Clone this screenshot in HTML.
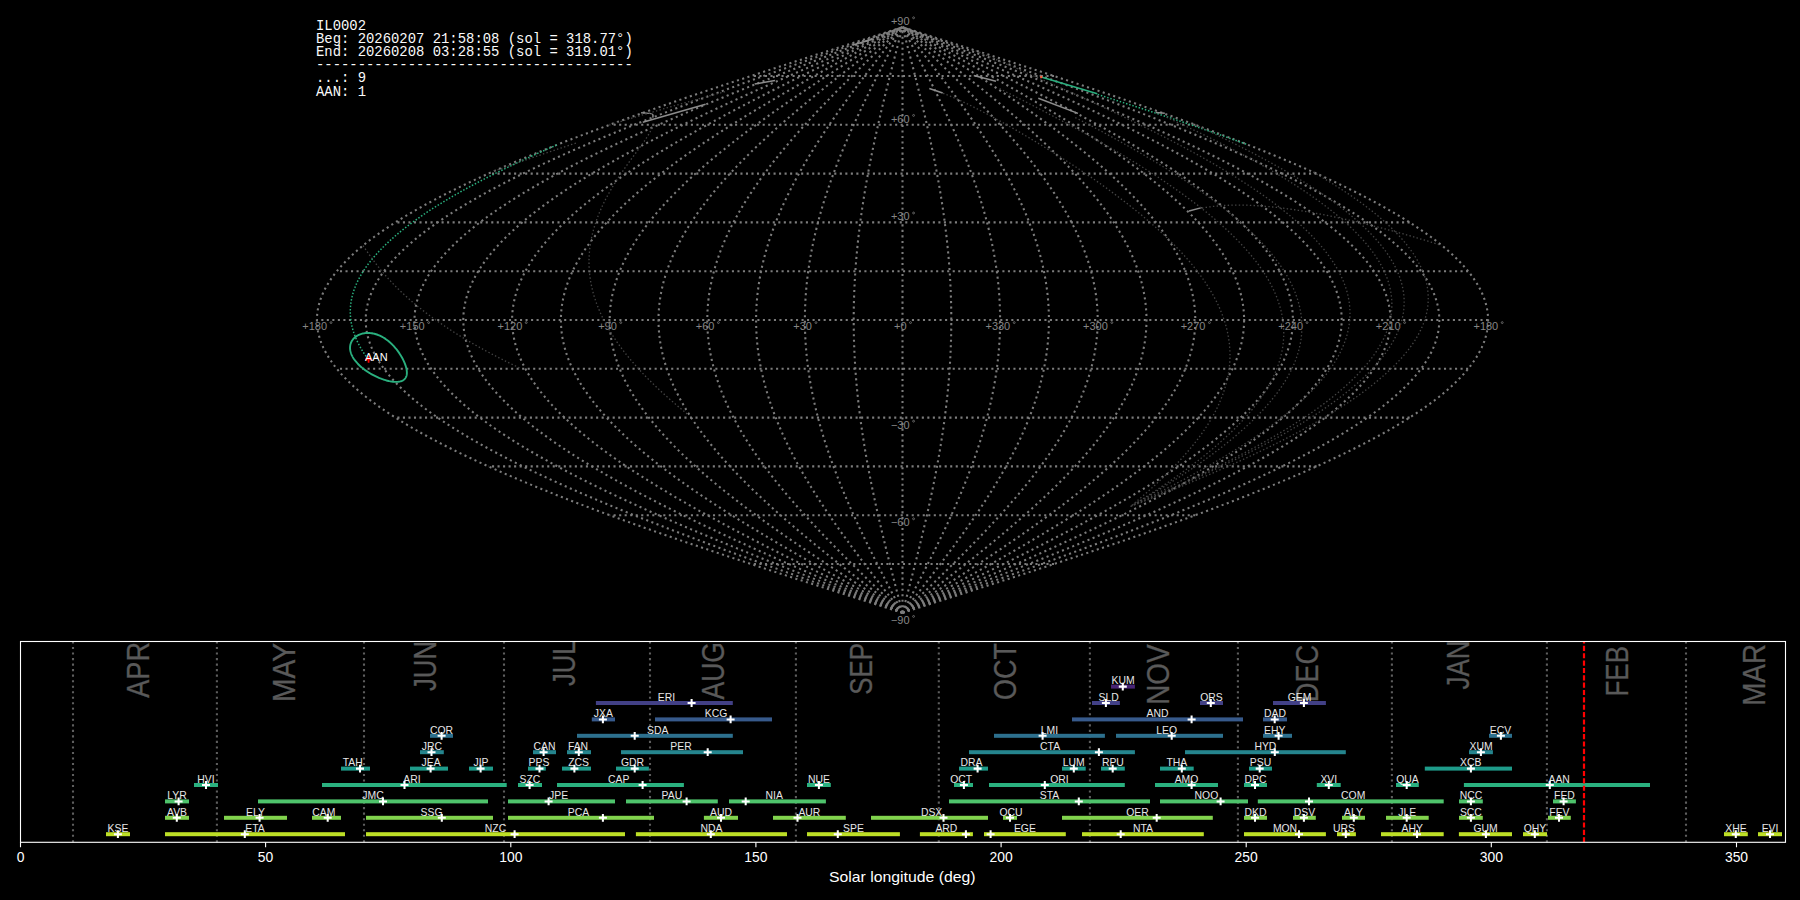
<!DOCTYPE html><html><head><meta charset="utf-8"><style>html,body{margin:0;padding:0;background:#000;width:1800px;height:900px;overflow:hidden}svg{display:block}text{font-family:"Liberation Sans",sans-serif}text.mono{font-family:"Liberation Mono",monospace}</style></head><body>
<svg width="1800" height="900" viewBox="0 0 1800 900">
<rect width="1800" height="900" fill="#000"/>
<g fill="none" stroke="#7c7c7c" stroke-width="2.08" stroke-dasharray="2.08 3.44"><path d="M902.50,612.80 L907.61,611.17 L912.72,609.54 L917.83,607.92 L922.94,606.29 L928.04,604.66 L933.15,603.04 L938.25,601.41 L943.35,599.78 L948.45,598.16 L953.54,596.53 L958.63,594.90 L963.71,593.28 L968.79,591.65 L973.87,590.02 L978.94,588.40 L984.00,586.77 L989.06,585.14 L994.11,583.52 L999.15,581.89 L1004.19,580.26 L1009.22,578.64 L1014.24,577.01 L1019.25,575.38 L1024.25,573.76 L1029.25,572.13 L1034.23,570.50 L1039.20,568.88 L1044.17,567.25 L1049.12,565.62 L1054.06,564.00 L1058.99,562.37 L1063.91,560.74 L1068.82,559.12 L1073.71,557.49 L1078.59,555.86 L1083.46,554.24 L1088.31,552.61 L1093.15,550.98 L1097.97,549.36 L1102.78,547.73 L1107.58,546.10 L1112.36,544.48 L1117.12,542.85 L1121.87,541.22 L1126.60,539.60 L1131.31,537.97 L1136.00,536.34 L1140.68,534.72 L1145.34,533.09 L1149.98,531.46 L1154.60,529.84 L1159.21,528.21 L1163.79,526.58 L1168.35,524.96 L1172.90,523.33 L1177.42,521.70 L1181.92,520.08 L1186.40,518.45 L1190.86,516.82 L1195.30,515.20 L1199.71,513.57 L1204.10,511.94 L1208.47,510.32 L1212.82,508.69 L1217.14,507.06 L1221.44,505.44 L1225.71,503.81 L1229.96,502.18 L1234.18,500.56 L1238.38,498.93 L1242.56,497.30 L1246.70,495.68 L1250.82,494.05 L1254.92,492.42 L1258.99,490.80 L1263.03,489.17 L1267.04,487.54 L1271.03,485.92 L1274.98,484.29 L1278.91,482.66 L1282.81,481.04 L1286.68,479.41 L1290.53,477.78 L1294.34,476.16 L1298.12,474.53 L1301.87,472.90 L1305.60,471.28 L1309.29,469.65 L1312.95,468.02 L1316.58,466.40 L1320.17,464.77 L1323.74,463.14 L1327.27,461.52 L1330.78,459.89 L1334.24,458.26 L1337.68,456.64 L1341.08,455.01 L1344.45,453.39 L1347.79,451.76 L1351.09,450.13 L1354.36,448.51 L1357.59,446.88 L1360.79,445.25 L1363.95,443.63 L1367.08,442.00 L1370.18,440.37 L1373.23,438.75 L1376.25,437.12 L1379.24,435.49 L1382.19,433.87 L1385.10,432.24 L1387.98,430.61 L1390.82,428.99 L1393.62,427.36 L1396.38,425.73 L1399.11,424.11 L1401.80,422.48 L1404.45,420.85 L1407.06,419.23 L1409.64,417.60 L1412.17,415.97 L1414.67,414.35 L1417.13,412.72 L1419.55,411.09 L1421.93,409.47 L1424.27,407.84 L1426.57,406.21 L1428.83,404.59 L1431.05,402.96 L1433.23,401.33 L1435.37,399.71 L1437.47,398.08 L1439.52,396.45 L1441.54,394.83 L1443.52,393.20 L1445.45,391.57 L1447.35,389.95 L1449.20,388.32 L1451.01,386.69 L1452.78,385.07 L1454.50,383.44 L1456.19,381.81 L1457.83,380.19 L1459.43,378.56 L1460.99,376.93 L1462.51,375.31 L1463.98,373.68 L1465.41,372.05 L1466.80,370.43 L1468.14,368.80 L1469.44,367.17 L1470.70,365.55 L1471.91,363.92 L1473.08,362.29 L1474.21,360.67 L1475.30,359.04 L1476.34,357.41 L1477.33,355.79 L1478.29,354.16 L1479.20,352.53 L1480.06,350.91 L1480.88,349.28 L1481.66,347.65 L1482.39,346.03 L1483.08,344.40 L1483.73,342.77 L1484.33,341.15 L1484.88,339.52 L1485.40,337.89 L1485.86,336.27 L1486.29,334.64 L1486.67,333.01 L1487.00,331.39 L1487.29,329.76 L1487.54,328.13 L1487.74,326.51 L1487.89,324.88 L1488.00,323.25 L1488.07,321.63 L1488.09,320.00 L1488.07,318.37 L1488.00,316.75 L1487.89,315.12 L1487.74,313.49 L1487.54,311.87 L1487.29,310.24 L1487.00,308.61 L1486.67,306.99 L1486.29,305.36 L1485.86,303.73 L1485.40,302.11 L1484.88,300.48 L1484.33,298.85 L1483.73,297.23 L1483.08,295.60 L1482.39,293.97 L1481.66,292.35 L1480.88,290.72 L1480.06,289.09 L1479.20,287.47 L1478.29,285.84 L1477.33,284.21 L1476.34,282.59 L1475.30,280.96 L1474.21,279.33 L1473.08,277.71 L1471.91,276.08 L1470.70,274.45 L1469.44,272.83 L1468.14,271.20 L1466.80,269.57 L1465.41,267.95 L1463.98,266.32 L1462.51,264.69 L1460.99,263.07 L1459.43,261.44 L1457.83,259.81 L1456.19,258.19 L1454.50,256.56 L1452.78,254.93 L1451.01,253.31 L1449.20,251.68 L1447.35,250.05 L1445.45,248.43 L1443.52,246.80 L1441.54,245.17 L1439.52,243.55 L1437.47,241.92 L1435.37,240.29 L1433.23,238.67 L1431.05,237.04 L1428.83,235.41 L1426.57,233.79 L1424.27,232.16 L1421.93,230.53 L1419.55,228.91 L1417.13,227.28 L1414.67,225.65 L1412.17,224.03 L1409.64,222.40 L1407.06,220.77 L1404.45,219.15 L1401.80,217.52 L1399.11,215.89 L1396.38,214.27 L1393.62,212.64 L1390.82,211.01 L1387.98,209.39 L1385.10,207.76 L1382.19,206.13 L1379.24,204.51 L1376.25,202.88 L1373.23,201.25 L1370.18,199.63 L1367.08,198.00 L1363.95,196.37 L1360.79,194.75 L1357.59,193.12 L1354.36,191.49 L1351.09,189.87 L1347.79,188.24 L1344.45,186.61 L1341.08,184.99 L1337.68,183.36 L1334.24,181.74 L1330.78,180.11 L1327.27,178.48 L1323.74,176.86 L1320.17,175.23 L1316.58,173.60 L1312.95,171.98 L1309.29,170.35 L1305.60,168.72 L1301.87,167.10 L1298.12,165.47 L1294.34,163.84 L1290.53,162.22 L1286.68,160.59 L1282.81,158.96 L1278.91,157.34 L1274.98,155.71 L1271.03,154.08 L1267.04,152.46 L1263.03,150.83 L1258.99,149.20 L1254.92,147.58 L1250.82,145.95 L1246.70,144.32 L1242.56,142.70 L1238.38,141.07 L1234.18,139.44 L1229.96,137.82 L1225.71,136.19 L1221.44,134.56 L1217.14,132.94 L1212.82,131.31 L1208.47,129.68 L1204.10,128.06 L1199.71,126.43 L1195.30,124.80 L1190.86,123.18 L1186.40,121.55 L1181.92,119.92 L1177.42,118.30 L1172.90,116.67 L1168.35,115.04 L1163.79,113.42 L1159.21,111.79 L1154.60,110.16 L1149.98,108.54 L1145.34,106.91 L1140.68,105.28 L1136.00,103.66 L1131.31,102.03 L1126.60,100.40 L1121.87,98.78 L1117.12,97.15 L1112.36,95.52 L1107.58,93.90 L1102.78,92.27 L1097.97,90.64 L1093.15,89.02 L1088.31,87.39 L1083.46,85.76 L1078.59,84.14 L1073.71,82.51 L1068.82,80.88 L1063.91,79.26 L1058.99,77.63 L1054.06,76.00 L1049.12,74.38 L1044.17,72.75 L1039.20,71.12 L1034.23,69.50 L1029.25,67.87 L1024.25,66.24 L1019.25,64.62 L1014.24,62.99 L1009.22,61.36 L1004.19,59.74 L999.15,58.11 L994.11,56.48 L989.06,54.86 L984.00,53.23 L978.94,51.60 L973.87,49.98 L968.79,48.35 L963.71,46.72 L958.63,45.10 L953.54,43.47 L948.45,41.84 L943.35,40.22 L938.25,38.59 L933.15,36.96 L928.04,35.34 L922.94,33.71 L917.83,32.08 L912.72,30.46 L907.61,28.83 L902.50,27.20"/><path d="M902.50,612.80 L907.18,611.17 L911.87,609.54 L916.55,607.92 L921.23,606.29 L925.91,604.66 L930.59,603.04 L935.27,601.41 L939.94,599.78 L944.62,598.16 L949.28,596.53 L953.95,594.90 L958.61,593.28 L963.27,591.65 L967.92,590.02 L972.57,588.40 L977.21,586.77 L981.84,585.14 L986.47,583.52 L991.10,581.89 L995.71,580.26 L1000.32,578.64 L1004.93,577.01 L1009.52,575.38 L1014.11,573.76 L1018.68,572.13 L1023.25,570.50 L1027.81,568.88 L1032.36,567.25 L1036.90,565.62 L1041.43,564.00 L1045.95,562.37 L1050.46,560.74 L1054.96,559.12 L1059.44,557.49 L1063.92,555.86 L1068.38,554.24 L1072.83,552.61 L1077.26,550.98 L1081.69,549.36 L1086.09,547.73 L1090.49,546.10 L1094.87,544.48 L1099.24,542.85 L1103.59,541.22 L1107.92,539.60 L1112.24,537.97 L1116.55,536.34 L1120.83,534.72 L1125.10,533.09 L1129.36,531.46 L1133.60,529.84 L1137.81,528.21 L1142.02,526.58 L1146.20,524.96 L1150.36,523.33 L1154.51,521.70 L1158.64,520.08 L1162.74,518.45 L1166.83,516.82 L1170.90,515.20 L1174.94,513.57 L1178.97,511.94 L1182.97,510.32 L1186.96,508.69 L1190.92,507.06 L1194.86,505.44 L1198.78,503.81 L1202.67,502.18 L1206.54,500.56 L1210.39,498.93 L1214.22,497.30 L1218.02,495.68 L1221.80,494.05 L1225.55,492.42 L1229.28,490.80 L1232.98,489.17 L1236.66,487.54 L1240.32,485.92 L1243.94,484.29 L1247.54,482.66 L1251.12,481.04 L1254.67,479.41 L1258.19,477.78 L1261.68,476.16 L1265.15,474.53 L1268.59,472.90 L1272.00,471.28 L1275.39,469.65 L1278.74,468.02 L1282.07,466.40 L1285.37,464.77 L1288.64,463.14 L1291.88,461.52 L1295.09,459.89 L1298.27,458.26 L1301.42,456.64 L1304.53,455.01 L1307.62,453.39 L1310.68,451.76 L1313.71,450.13 L1316.70,448.51 L1319.67,446.88 L1322.60,445.25 L1325.50,443.63 L1328.37,442.00 L1331.20,440.37 L1334.01,438.75 L1336.78,437.12 L1339.51,435.49 L1342.22,433.87 L1344.89,432.24 L1347.52,430.61 L1350.12,428.99 L1352.69,427.36 L1355.23,425.73 L1357.73,424.11 L1360.19,422.48 L1362.62,420.85 L1365.02,419.23 L1367.38,417.60 L1369.70,415.97 L1371.99,414.35 L1374.24,412.72 L1376.46,411.09 L1378.64,409.47 L1380.79,407.84 L1382.89,406.21 L1384.97,404.59 L1387.00,402.96 L1389.00,401.33 L1390.96,399.71 L1392.89,398.08 L1394.77,396.45 L1396.62,394.83 L1398.43,393.20 L1400.21,391.57 L1401.94,389.95 L1403.64,388.32 L1405.30,386.69 L1406.92,385.07 L1408.50,383.44 L1410.05,381.81 L1411.55,380.19 L1413.02,378.56 L1414.45,376.93 L1415.84,375.31 L1417.19,373.68 L1418.50,372.05 L1419.77,370.43 L1421.00,368.80 L1422.20,367.17 L1423.35,365.55 L1424.46,363.92 L1425.54,362.29 L1426.57,360.67 L1427.56,359.04 L1428.52,357.41 L1429.43,355.79 L1430.30,354.16 L1431.14,352.53 L1431.93,350.91 L1432.68,349.28 L1433.40,347.65 L1434.07,346.03 L1434.70,344.40 L1435.29,342.77 L1435.84,341.15 L1436.35,339.52 L1436.82,337.89 L1437.25,336.27 L1437.64,334.64 L1437.99,333.01 L1438.29,331.39 L1438.56,329.76 L1438.78,328.13 L1438.97,326.51 L1439.11,324.88 L1439.21,323.25 L1439.27,321.63 L1439.29,320.00 L1439.27,318.37 L1439.21,316.75 L1439.11,315.12 L1438.97,313.49 L1438.78,311.87 L1438.56,310.24 L1438.29,308.61 L1437.99,306.99 L1437.64,305.36 L1437.25,303.73 L1436.82,302.11 L1436.35,300.48 L1435.84,298.85 L1435.29,297.23 L1434.70,295.60 L1434.07,293.97 L1433.40,292.35 L1432.68,290.72 L1431.93,289.09 L1431.14,287.47 L1430.30,285.84 L1429.43,284.21 L1428.52,282.59 L1427.56,280.96 L1426.57,279.33 L1425.54,277.71 L1424.46,276.08 L1423.35,274.45 L1422.20,272.83 L1421.00,271.20 L1419.77,269.57 L1418.50,267.95 L1417.19,266.32 L1415.84,264.69 L1414.45,263.07 L1413.02,261.44 L1411.55,259.81 L1410.05,258.19 L1408.50,256.56 L1406.92,254.93 L1405.30,253.31 L1403.64,251.68 L1401.94,250.05 L1400.21,248.43 L1398.43,246.80 L1396.62,245.17 L1394.77,243.55 L1392.89,241.92 L1390.96,240.29 L1389.00,238.67 L1387.00,237.04 L1384.97,235.41 L1382.89,233.79 L1380.79,232.16 L1378.64,230.53 L1376.46,228.91 L1374.24,227.28 L1371.99,225.65 L1369.70,224.03 L1367.38,222.40 L1365.02,220.77 L1362.62,219.15 L1360.19,217.52 L1357.73,215.89 L1355.23,214.27 L1352.69,212.64 L1350.12,211.01 L1347.52,209.39 L1344.89,207.76 L1342.22,206.13 L1339.51,204.51 L1336.78,202.88 L1334.01,201.25 L1331.20,199.63 L1328.37,198.00 L1325.50,196.37 L1322.60,194.75 L1319.67,193.12 L1316.70,191.49 L1313.71,189.87 L1310.68,188.24 L1307.62,186.61 L1304.53,184.99 L1301.42,183.36 L1298.27,181.74 L1295.09,180.11 L1291.88,178.48 L1288.64,176.86 L1285.37,175.23 L1282.07,173.60 L1278.74,171.98 L1275.39,170.35 L1272.00,168.72 L1268.59,167.10 L1265.15,165.47 L1261.68,163.84 L1258.19,162.22 L1254.67,160.59 L1251.12,158.96 L1247.54,157.34 L1243.94,155.71 L1240.32,154.08 L1236.66,152.46 L1232.98,150.83 L1229.28,149.20 L1225.55,147.58 L1221.80,145.95 L1218.02,144.32 L1214.22,142.70 L1210.39,141.07 L1206.54,139.44 L1202.67,137.82 L1198.78,136.19 L1194.86,134.56 L1190.92,132.94 L1186.96,131.31 L1182.97,129.68 L1178.97,128.06 L1174.94,126.43 L1170.90,124.80 L1166.83,123.18 L1162.74,121.55 L1158.64,119.92 L1154.51,118.30 L1150.36,116.67 L1146.20,115.04 L1142.02,113.42 L1137.81,111.79 L1133.60,110.16 L1129.36,108.54 L1125.10,106.91 L1120.83,105.28 L1116.55,103.66 L1112.24,102.03 L1107.92,100.40 L1103.59,98.78 L1099.24,97.15 L1094.87,95.52 L1090.49,93.90 L1086.09,92.27 L1081.69,90.64 L1077.26,89.02 L1072.83,87.39 L1068.38,85.76 L1063.92,84.14 L1059.44,82.51 L1054.96,80.88 L1050.46,79.26 L1045.95,77.63 L1041.43,76.00 L1036.90,74.38 L1032.36,72.75 L1027.81,71.12 L1023.25,69.50 L1018.68,67.87 L1014.11,66.24 L1009.52,64.62 L1004.93,62.99 L1000.32,61.36 L995.71,59.74 L991.10,58.11 L986.47,56.48 L981.84,54.86 L977.21,53.23 L972.57,51.60 L967.92,49.98 L963.27,48.35 L958.61,46.72 L953.95,45.10 L949.28,43.47 L944.62,41.84 L939.94,40.22 L935.27,38.59 L930.59,36.96 L925.91,35.34 L921.23,33.71 L916.55,32.08 L911.87,30.46 L907.18,28.83 L902.50,27.20"/><path d="M902.50,612.80 L906.76,611.17 L911.02,609.54 L915.27,607.92 L919.53,606.29 L923.79,604.66 L928.04,603.04 L932.29,601.41 L936.54,599.78 L940.79,598.16 L945.03,596.53 L949.27,594.90 L953.51,593.28 L957.74,591.65 L961.97,590.02 L966.20,588.40 L970.42,586.77 L974.63,585.14 L978.84,583.52 L983.04,581.89 L987.24,580.26 L991.43,578.64 L995.61,577.01 L999.79,575.38 L1003.96,573.76 L1008.12,572.13 L1012.27,570.50 L1016.42,568.88 L1020.56,567.25 L1024.68,565.62 L1028.80,564.00 L1032.91,562.37 L1037.01,560.74 L1041.10,559.12 L1045.18,557.49 L1049.24,555.86 L1053.30,554.24 L1057.34,552.61 L1061.38,550.98 L1065.40,549.36 L1069.40,547.73 L1073.40,546.10 L1077.38,544.48 L1081.35,542.85 L1085.31,541.22 L1089.25,539.60 L1093.17,537.97 L1097.09,536.34 L1100.99,534.72 L1104.87,533.09 L1108.74,531.46 L1112.59,529.84 L1116.42,528.21 L1120.24,526.58 L1124.04,524.96 L1127.83,523.33 L1131.60,521.70 L1135.35,520.08 L1139.08,518.45 L1142.80,516.82 L1146.50,515.20 L1150.18,513.57 L1153.84,511.94 L1157.48,510.32 L1161.10,508.69 L1164.70,507.06 L1168.28,505.44 L1171.84,503.81 L1175.38,502.18 L1178.90,500.56 L1182.40,498.93 L1185.88,497.30 L1189.34,495.68 L1192.77,494.05 L1196.18,492.42 L1199.57,490.80 L1202.94,489.17 L1206.28,487.54 L1209.60,485.92 L1212.90,484.29 L1216.18,482.66 L1219.43,481.04 L1222.65,479.41 L1225.85,477.78 L1229.03,476.16 L1232.18,474.53 L1235.31,472.90 L1238.41,471.28 L1241.49,469.65 L1244.54,468.02 L1247.56,466.40 L1250.56,464.77 L1253.53,463.14 L1256.48,461.52 L1259.40,459.89 L1262.29,458.26 L1265.15,456.64 L1267.99,455.01 L1270.79,453.39 L1273.57,451.76 L1276.33,450.13 L1279.05,448.51 L1281.74,446.88 L1284.41,445.25 L1287.04,443.63 L1289.65,442.00 L1292.23,440.37 L1294.78,438.75 L1297.30,437.12 L1299.78,435.49 L1302.24,433.87 L1304.67,432.24 L1307.07,430.61 L1309.43,428.99 L1311.77,427.36 L1314.07,425.73 L1316.34,424.11 L1318.58,422.48 L1320.79,420.85 L1322.97,419.23 L1325.12,417.60 L1327.23,415.97 L1329.31,414.35 L1331.36,412.72 L1333.37,411.09 L1335.36,409.47 L1337.31,407.84 L1339.22,406.21 L1341.11,404.59 L1342.96,402.96 L1344.77,401.33 L1346.56,399.71 L1348.30,398.08 L1350.02,396.45 L1351.70,394.83 L1353.35,393.20 L1354.96,391.57 L1356.54,389.95 L1358.08,388.32 L1359.59,386.69 L1361.06,385.07 L1362.50,383.44 L1363.91,381.81 L1365.28,380.19 L1366.61,378.56 L1367.91,376.93 L1369.17,375.31 L1370.40,373.68 L1371.59,372.05 L1372.75,370.43 L1373.87,368.80 L1374.95,367.17 L1376.00,365.55 L1377.01,363.92 L1377.99,362.29 L1378.93,360.67 L1379.83,359.04 L1380.70,357.41 L1381.53,355.79 L1382.32,354.16 L1383.08,352.53 L1383.80,350.91 L1384.49,349.28 L1385.13,347.65 L1385.74,346.03 L1386.32,344.40 L1386.86,342.77 L1387.36,341.15 L1387.82,339.52 L1388.25,337.89 L1388.64,336.27 L1388.99,334.64 L1389.31,333.01 L1389.58,331.39 L1389.83,329.76 L1390.03,328.13 L1390.20,326.51 L1390.33,324.88 L1390.42,323.25 L1390.48,321.63 L1390.49,320.00 L1390.48,318.37 L1390.42,316.75 L1390.33,315.12 L1390.20,313.49 L1390.03,311.87 L1389.83,310.24 L1389.58,308.61 L1389.31,306.99 L1388.99,305.36 L1388.64,303.73 L1388.25,302.11 L1387.82,300.48 L1387.36,298.85 L1386.86,297.23 L1386.32,295.60 L1385.74,293.97 L1385.13,292.35 L1384.49,290.72 L1383.80,289.09 L1383.08,287.47 L1382.32,285.84 L1381.53,284.21 L1380.70,282.59 L1379.83,280.96 L1378.93,279.33 L1377.99,277.71 L1377.01,276.08 L1376.00,274.45 L1374.95,272.83 L1373.87,271.20 L1372.75,269.57 L1371.59,267.95 L1370.40,266.32 L1369.17,264.69 L1367.91,263.07 L1366.61,261.44 L1365.28,259.81 L1363.91,258.19 L1362.50,256.56 L1361.06,254.93 L1359.59,253.31 L1358.08,251.68 L1356.54,250.05 L1354.96,248.43 L1353.35,246.80 L1351.70,245.17 L1350.02,243.55 L1348.30,241.92 L1346.56,240.29 L1344.77,238.67 L1342.96,237.04 L1341.11,235.41 L1339.22,233.79 L1337.31,232.16 L1335.36,230.53 L1333.37,228.91 L1331.36,227.28 L1329.31,225.65 L1327.23,224.03 L1325.12,222.40 L1322.97,220.77 L1320.79,219.15 L1318.58,217.52 L1316.34,215.89 L1314.07,214.27 L1311.77,212.64 L1309.43,211.01 L1307.07,209.39 L1304.67,207.76 L1302.24,206.13 L1299.78,204.51 L1297.30,202.88 L1294.78,201.25 L1292.23,199.63 L1289.65,198.00 L1287.04,196.37 L1284.41,194.75 L1281.74,193.12 L1279.05,191.49 L1276.33,189.87 L1273.57,188.24 L1270.79,186.61 L1267.99,184.99 L1265.15,183.36 L1262.29,181.74 L1259.40,180.11 L1256.48,178.48 L1253.53,176.86 L1250.56,175.23 L1247.56,173.60 L1244.54,171.98 L1241.49,170.35 L1238.41,168.72 L1235.31,167.10 L1232.18,165.47 L1229.03,163.84 L1225.85,162.22 L1222.65,160.59 L1219.43,158.96 L1216.18,157.34 L1212.90,155.71 L1209.60,154.08 L1206.28,152.46 L1202.94,150.83 L1199.57,149.20 L1196.18,147.58 L1192.77,145.95 L1189.34,144.32 L1185.88,142.70 L1182.40,141.07 L1178.90,139.44 L1175.38,137.82 L1171.84,136.19 L1168.28,134.56 L1164.70,132.94 L1161.10,131.31 L1157.48,129.68 L1153.84,128.06 L1150.18,126.43 L1146.50,124.80 L1142.80,123.18 L1139.08,121.55 L1135.35,119.92 L1131.60,118.30 L1127.83,116.67 L1124.04,115.04 L1120.24,113.42 L1116.42,111.79 L1112.59,110.16 L1108.74,108.54 L1104.87,106.91 L1100.99,105.28 L1097.09,103.66 L1093.17,102.03 L1089.25,100.40 L1085.31,98.78 L1081.35,97.15 L1077.38,95.52 L1073.40,93.90 L1069.40,92.27 L1065.40,90.64 L1061.38,89.02 L1057.34,87.39 L1053.30,85.76 L1049.24,84.14 L1045.18,82.51 L1041.10,80.88 L1037.01,79.26 L1032.91,77.63 L1028.80,76.00 L1024.68,74.38 L1020.56,72.75 L1016.42,71.12 L1012.27,69.50 L1008.12,67.87 L1003.96,66.24 L999.79,64.62 L995.61,62.99 L991.43,61.36 L987.24,59.74 L983.04,58.11 L978.84,56.48 L974.63,54.86 L970.42,53.23 L966.20,51.60 L961.97,49.98 L957.74,48.35 L953.51,46.72 L949.27,45.10 L945.03,43.47 L940.79,41.84 L936.54,40.22 L932.29,38.59 L928.04,36.96 L923.79,35.34 L919.53,33.71 L915.27,32.08 L911.02,30.46 L906.76,28.83 L902.50,27.20"/><path d="M902.50,612.80 L906.33,611.17 L910.17,609.54 L914.00,607.92 L917.83,606.29 L921.66,604.66 L925.49,603.04 L929.31,601.41 L933.14,599.78 L936.96,598.16 L940.78,596.53 L944.59,594.90 L948.41,593.28 L952.22,591.65 L956.02,590.02 L959.83,588.40 L963.62,586.77 L967.42,585.14 L971.21,583.52 L974.99,581.89 L978.77,580.26 L982.54,578.64 L986.30,577.01 L990.06,575.38 L993.81,573.76 L997.56,572.13 L1001.30,570.50 L1005.03,568.88 L1008.75,567.25 L1012.47,565.62 L1016.17,564.00 L1019.87,562.37 L1023.56,560.74 L1027.24,559.12 L1030.91,557.49 L1034.57,555.86 L1038.22,554.24 L1041.86,552.61 L1045.49,550.98 L1049.11,549.36 L1052.71,547.73 L1056.31,546.10 L1059.89,544.48 L1063.47,542.85 L1067.03,541.22 L1070.57,539.60 L1074.11,537.97 L1077.63,536.34 L1081.14,534.72 L1084.63,533.09 L1088.11,531.46 L1091.58,529.84 L1095.03,528.21 L1098.47,526.58 L1101.89,524.96 L1105.30,523.33 L1108.69,521.70 L1112.07,520.08 L1115.43,518.45 L1118.77,516.82 L1122.10,515.20 L1125.41,513.57 L1128.70,511.94 L1131.98,510.32 L1135.24,508.69 L1138.48,507.06 L1141.70,505.44 L1144.91,503.81 L1148.09,502.18 L1151.26,500.56 L1154.41,498.93 L1157.54,497.30 L1160.65,495.68 L1163.74,494.05 L1166.81,492.42 L1169.86,490.80 L1172.90,489.17 L1175.91,487.54 L1178.89,485.92 L1181.86,484.29 L1184.81,482.66 L1187.73,481.04 L1190.64,479.41 L1193.52,477.78 L1196.38,476.16 L1199.22,474.53 L1202.03,472.90 L1204.82,471.28 L1207.59,469.65 L1210.34,468.02 L1213.06,466.40 L1215.76,464.77 L1218.43,463.14 L1221.08,461.52 L1223.71,459.89 L1226.31,458.26 L1228.89,456.64 L1231.44,455.01 L1233.96,453.39 L1236.47,451.76 L1238.94,450.13 L1241.39,448.51 L1243.82,446.88 L1246.22,445.25 L1248.59,443.63 L1250.94,442.00 L1253.26,440.37 L1255.55,438.75 L1257.82,437.12 L1260.06,435.49 L1262.27,433.87 L1264.45,432.24 L1266.61,430.61 L1268.74,428.99 L1270.84,427.36 L1272.91,425.73 L1274.96,424.11 L1276.98,422.48 L1278.96,420.85 L1280.92,419.23 L1282.85,417.60 L1284.76,415.97 L1286.63,414.35 L1288.47,412.72 L1290.29,411.09 L1292.07,409.47 L1293.83,407.84 L1295.55,406.21 L1297.25,404.59 L1298.91,402.96 L1300.55,401.33 L1302.15,399.71 L1303.72,398.08 L1305.27,396.45 L1306.78,394.83 L1308.26,393.20 L1309.71,391.57 L1311.13,389.95 L1312.52,388.32 L1313.88,386.69 L1315.21,385.07 L1316.50,383.44 L1317.77,381.81 L1319.00,380.19 L1320.20,378.56 L1321.37,376.93 L1322.50,375.31 L1323.61,373.68 L1324.68,372.05 L1325.72,370.43 L1326.73,368.80 L1327.71,367.17 L1328.65,365.55 L1329.56,363.92 L1330.44,362.29 L1331.28,360.67 L1332.10,359.04 L1332.88,357.41 L1333.63,355.79 L1334.34,354.16 L1335.02,352.53 L1335.67,350.91 L1336.29,349.28 L1336.87,347.65 L1337.42,346.03 L1337.94,344.40 L1338.42,342.77 L1338.87,341.15 L1339.29,339.52 L1339.67,337.89 L1340.02,336.27 L1340.34,334.64 L1340.62,333.01 L1340.88,331.39 L1341.09,329.76 L1341.28,328.13 L1341.43,326.51 L1341.54,324.88 L1341.63,323.25 L1341.68,321.63 L1341.69,320.00 L1341.68,318.37 L1341.63,316.75 L1341.54,315.12 L1341.43,313.49 L1341.28,311.87 L1341.09,310.24 L1340.88,308.61 L1340.62,306.99 L1340.34,305.36 L1340.02,303.73 L1339.67,302.11 L1339.29,300.48 L1338.87,298.85 L1338.42,297.23 L1337.94,295.60 L1337.42,293.97 L1336.87,292.35 L1336.29,290.72 L1335.67,289.09 L1335.02,287.47 L1334.34,285.84 L1333.63,284.21 L1332.88,282.59 L1332.10,280.96 L1331.28,279.33 L1330.44,277.71 L1329.56,276.08 L1328.65,274.45 L1327.71,272.83 L1326.73,271.20 L1325.72,269.57 L1324.68,267.95 L1323.61,266.32 L1322.50,264.69 L1321.37,263.07 L1320.20,261.44 L1319.00,259.81 L1317.77,258.19 L1316.50,256.56 L1315.21,254.93 L1313.88,253.31 L1312.52,251.68 L1311.13,250.05 L1309.71,248.43 L1308.26,246.80 L1306.78,245.17 L1305.27,243.55 L1303.72,241.92 L1302.15,240.29 L1300.55,238.67 L1298.91,237.04 L1297.25,235.41 L1295.55,233.79 L1293.83,232.16 L1292.07,230.53 L1290.29,228.91 L1288.47,227.28 L1286.63,225.65 L1284.76,224.03 L1282.85,222.40 L1280.92,220.77 L1278.96,219.15 L1276.98,217.52 L1274.96,215.89 L1272.91,214.27 L1270.84,212.64 L1268.74,211.01 L1266.61,209.39 L1264.45,207.76 L1262.27,206.13 L1260.06,204.51 L1257.82,202.88 L1255.55,201.25 L1253.26,199.63 L1250.94,198.00 L1248.59,196.37 L1246.22,194.75 L1243.82,193.12 L1241.39,191.49 L1238.94,189.87 L1236.47,188.24 L1233.96,186.61 L1231.44,184.99 L1228.89,183.36 L1226.31,181.74 L1223.71,180.11 L1221.08,178.48 L1218.43,176.86 L1215.76,175.23 L1213.06,173.60 L1210.34,171.98 L1207.59,170.35 L1204.82,168.72 L1202.03,167.10 L1199.22,165.47 L1196.38,163.84 L1193.52,162.22 L1190.64,160.59 L1187.73,158.96 L1184.81,157.34 L1181.86,155.71 L1178.89,154.08 L1175.91,152.46 L1172.90,150.83 L1169.86,149.20 L1166.81,147.58 L1163.74,145.95 L1160.65,144.32 L1157.54,142.70 L1154.41,141.07 L1151.26,139.44 L1148.09,137.82 L1144.91,136.19 L1141.70,134.56 L1138.48,132.94 L1135.24,131.31 L1131.98,129.68 L1128.70,128.06 L1125.41,126.43 L1122.10,124.80 L1118.77,123.18 L1115.43,121.55 L1112.07,119.92 L1108.69,118.30 L1105.30,116.67 L1101.89,115.04 L1098.47,113.42 L1095.03,111.79 L1091.58,110.16 L1088.11,108.54 L1084.63,106.91 L1081.14,105.28 L1077.63,103.66 L1074.11,102.03 L1070.57,100.40 L1067.03,98.78 L1063.47,97.15 L1059.89,95.52 L1056.31,93.90 L1052.71,92.27 L1049.11,90.64 L1045.49,89.02 L1041.86,87.39 L1038.22,85.76 L1034.57,84.14 L1030.91,82.51 L1027.24,80.88 L1023.56,79.26 L1019.87,77.63 L1016.17,76.00 L1012.47,74.38 L1008.75,72.75 L1005.03,71.12 L1001.30,69.50 L997.56,67.87 L993.81,66.24 L990.06,64.62 L986.30,62.99 L982.54,61.36 L978.77,59.74 L974.99,58.11 L971.21,56.48 L967.42,54.86 L963.62,53.23 L959.83,51.60 L956.02,49.98 L952.22,48.35 L948.41,46.72 L944.59,45.10 L940.78,43.47 L936.96,41.84 L933.14,40.22 L929.31,38.59 L925.49,36.96 L921.66,35.34 L917.83,33.71 L914.00,32.08 L910.17,30.46 L906.33,28.83 L902.50,27.20"/><path d="M902.50,612.80 L905.91,611.17 L909.31,609.54 L912.72,607.92 L916.12,606.29 L919.53,604.66 L922.93,603.04 L926.33,601.41 L929.73,599.78 L933.13,598.16 L936.53,596.53 L939.92,594.90 L943.31,593.28 L946.69,591.65 L950.08,590.02 L953.46,588.40 L956.83,586.77 L960.20,585.14 L963.57,583.52 L966.93,581.89 L970.29,580.26 L973.64,578.64 L976.99,577.01 L980.33,575.38 L983.67,573.76 L987.00,572.13 L990.32,570.50 L993.64,568.88 L996.95,567.25 L1000.25,565.62 L1003.54,564.00 L1006.83,562.37 L1010.11,560.74 L1013.38,559.12 L1016.64,557.49 L1019.89,555.86 L1023.14,554.24 L1026.37,552.61 L1029.60,550.98 L1032.82,549.36 L1036.02,547.73 L1039.22,546.10 L1042.41,544.48 L1045.58,542.85 L1048.74,541.22 L1051.90,539.60 L1055.04,537.97 L1058.17,536.34 L1061.29,534.72 L1064.39,533.09 L1067.49,531.46 L1070.57,529.84 L1073.64,528.21 L1076.69,526.58 L1079.74,524.96 L1082.76,523.33 L1085.78,521.70 L1088.78,520.08 L1091.77,518.45 L1094.74,516.82 L1097.70,515.20 L1100.64,513.57 L1103.57,511.94 L1106.48,510.32 L1109.38,508.69 L1112.26,507.06 L1115.12,505.44 L1117.97,503.81 L1120.81,502.18 L1123.62,500.56 L1126.42,498.93 L1129.20,497.30 L1131.97,495.68 L1134.72,494.05 L1137.45,492.42 L1140.16,490.80 L1142.85,489.17 L1145.53,487.54 L1148.18,485.92 L1150.82,484.29 L1153.44,482.66 L1156.04,481.04 L1158.62,479.41 L1161.18,477.78 L1163.73,476.16 L1166.25,474.53 L1168.75,472.90 L1171.23,471.28 L1173.69,469.65 L1176.13,468.02 L1178.55,466.40 L1180.95,464.77 L1183.33,463.14 L1185.68,461.52 L1188.02,459.89 L1190.33,458.26 L1192.62,456.64 L1194.89,455.01 L1197.14,453.39 L1199.36,451.76 L1201.56,450.13 L1203.74,448.51 L1205.89,446.88 L1208.03,445.25 L1210.14,443.63 L1212.22,442.00 L1214.28,440.37 L1216.32,438.75 L1218.34,437.12 L1220.33,435.49 L1222.29,433.87 L1224.23,432.24 L1226.15,430.61 L1228.05,428.99 L1229.91,427.36 L1231.76,425.73 L1233.57,424.11 L1235.37,422.48 L1237.13,420.85 L1238.88,419.23 L1240.59,417.60 L1242.28,415.97 L1243.95,414.35 L1245.59,412.72 L1247.20,411.09 L1248.78,409.47 L1250.34,407.84 L1251.88,406.21 L1253.38,404.59 L1254.87,402.96 L1256.32,401.33 L1257.74,399.71 L1259.14,398.08 L1260.52,396.45 L1261.86,394.83 L1263.18,393.20 L1264.47,391.57 L1265.73,389.95 L1266.97,388.32 L1268.17,386.69 L1269.35,385.07 L1270.50,383.44 L1271.63,381.81 L1272.72,380.19 L1273.79,378.56 L1274.83,376.93 L1275.84,375.31 L1276.82,373.68 L1277.77,372.05 L1278.70,370.43 L1279.59,368.80 L1280.46,367.17 L1281.30,365.55 L1282.11,363.92 L1282.89,362.29 L1283.64,360.67 L1284.36,359.04 L1285.06,357.41 L1285.72,355.79 L1286.36,354.16 L1286.96,352.53 L1287.54,350.91 L1288.09,349.28 L1288.61,347.65 L1289.10,346.03 L1289.56,344.40 L1289.99,342.77 L1290.39,341.15 L1290.76,339.52 L1291.10,337.89 L1291.41,336.27 L1291.69,334.64 L1291.94,333.01 L1292.17,331.39 L1292.36,329.76 L1292.52,328.13 L1292.66,326.51 L1292.76,324.88 L1292.84,323.25 L1292.88,321.63 L1292.90,320.00 L1292.88,318.37 L1292.84,316.75 L1292.76,315.12 L1292.66,313.49 L1292.52,311.87 L1292.36,310.24 L1292.17,308.61 L1291.94,306.99 L1291.69,305.36 L1291.41,303.73 L1291.10,302.11 L1290.76,300.48 L1290.39,298.85 L1289.99,297.23 L1289.56,295.60 L1289.10,293.97 L1288.61,292.35 L1288.09,290.72 L1287.54,289.09 L1286.96,287.47 L1286.36,285.84 L1285.72,284.21 L1285.06,282.59 L1284.36,280.96 L1283.64,279.33 L1282.89,277.71 L1282.11,276.08 L1281.30,274.45 L1280.46,272.83 L1279.59,271.20 L1278.70,269.57 L1277.77,267.95 L1276.82,266.32 L1275.84,264.69 L1274.83,263.07 L1273.79,261.44 L1272.72,259.81 L1271.63,258.19 L1270.50,256.56 L1269.35,254.93 L1268.17,253.31 L1266.97,251.68 L1265.73,250.05 L1264.47,248.43 L1263.18,246.80 L1261.86,245.17 L1260.52,243.55 L1259.14,241.92 L1257.74,240.29 L1256.32,238.67 L1254.87,237.04 L1253.38,235.41 L1251.88,233.79 L1250.34,232.16 L1248.78,230.53 L1247.20,228.91 L1245.59,227.28 L1243.95,225.65 L1242.28,224.03 L1240.59,222.40 L1238.88,220.77 L1237.13,219.15 L1235.37,217.52 L1233.57,215.89 L1231.76,214.27 L1229.91,212.64 L1228.05,211.01 L1226.15,209.39 L1224.23,207.76 L1222.29,206.13 L1220.33,204.51 L1218.34,202.88 L1216.32,201.25 L1214.28,199.63 L1212.22,198.00 L1210.14,196.37 L1208.03,194.75 L1205.89,193.12 L1203.74,191.49 L1201.56,189.87 L1199.36,188.24 L1197.14,186.61 L1194.89,184.99 L1192.62,183.36 L1190.33,181.74 L1188.02,180.11 L1185.68,178.48 L1183.33,176.86 L1180.95,175.23 L1178.55,173.60 L1176.13,171.98 L1173.69,170.35 L1171.23,168.72 L1168.75,167.10 L1166.25,165.47 L1163.73,163.84 L1161.18,162.22 L1158.62,160.59 L1156.04,158.96 L1153.44,157.34 L1150.82,155.71 L1148.18,154.08 L1145.53,152.46 L1142.85,150.83 L1140.16,149.20 L1137.45,147.58 L1134.72,145.95 L1131.97,144.32 L1129.20,142.70 L1126.42,141.07 L1123.62,139.44 L1120.81,137.82 L1117.97,136.19 L1115.12,134.56 L1112.26,132.94 L1109.38,131.31 L1106.48,129.68 L1103.57,128.06 L1100.64,126.43 L1097.70,124.80 L1094.74,123.18 L1091.77,121.55 L1088.78,119.92 L1085.78,118.30 L1082.76,116.67 L1079.74,115.04 L1076.69,113.42 L1073.64,111.79 L1070.57,110.16 L1067.49,108.54 L1064.39,106.91 L1061.29,105.28 L1058.17,103.66 L1055.04,102.03 L1051.90,100.40 L1048.74,98.78 L1045.58,97.15 L1042.41,95.52 L1039.22,93.90 L1036.02,92.27 L1032.82,90.64 L1029.60,89.02 L1026.37,87.39 L1023.14,85.76 L1019.89,84.14 L1016.64,82.51 L1013.38,80.88 L1010.11,79.26 L1006.83,77.63 L1003.54,76.00 L1000.25,74.38 L996.95,72.75 L993.64,71.12 L990.32,69.50 L987.00,67.87 L983.67,66.24 L980.33,64.62 L976.99,62.99 L973.64,61.36 L970.29,59.74 L966.93,58.11 L963.57,56.48 L960.20,54.86 L956.83,53.23 L953.46,51.60 L950.08,49.98 L946.69,48.35 L943.31,46.72 L939.92,45.10 L936.53,43.47 L933.13,41.84 L929.73,40.22 L926.33,38.59 L922.93,36.96 L919.53,35.34 L916.12,33.71 L912.72,32.08 L909.31,30.46 L905.91,28.83 L902.50,27.20"/><path d="M902.50,612.80 L905.48,611.17 L908.46,609.54 L911.44,607.92 L914.42,606.29 L917.40,604.66 L920.38,603.04 L923.35,601.41 L926.33,599.78 L929.30,598.16 L932.27,596.53 L935.24,594.90 L938.21,593.28 L941.17,591.65 L944.13,590.02 L947.09,588.40 L950.04,586.77 L952.99,585.14 L955.94,583.52 L958.88,581.89 L961.82,580.26 L964.75,578.64 L967.68,577.01 L970.60,575.38 L973.52,573.76 L976.43,572.13 L979.34,570.50 L982.24,568.88 L985.14,567.25 L988.03,565.62 L990.91,564.00 L993.79,562.37 L996.66,560.74 L999.52,559.12 L1002.37,557.49 L1005.22,555.86 L1008.06,554.24 L1010.89,552.61 L1013.71,550.98 L1016.53,549.36 L1019.33,547.73 L1022.13,546.10 L1024.92,544.48 L1027.70,542.85 L1030.46,541.22 L1033.22,539.60 L1035.97,537.97 L1038.71,536.34 L1041.44,534.72 L1044.16,533.09 L1046.86,531.46 L1049.56,529.84 L1052.25,528.21 L1054.92,526.58 L1057.58,524.96 L1060.23,523.33 L1062.87,521.70 L1065.50,520.08 L1068.11,518.45 L1070.71,516.82 L1073.30,515.20 L1075.87,513.57 L1078.43,511.94 L1080.98,510.32 L1083.52,508.69 L1086.04,507.06 L1088.55,505.44 L1091.04,503.81 L1093.52,502.18 L1095.98,500.56 L1098.43,498.93 L1100.87,497.30 L1103.28,495.68 L1105.69,494.05 L1108.08,492.42 L1110.45,490.80 L1112.81,489.17 L1115.15,487.54 L1117.47,485.92 L1119.78,484.29 L1122.07,482.66 L1124.35,481.04 L1126.61,479.41 L1128.85,477.78 L1131.07,476.16 L1133.28,474.53 L1135.47,472.90 L1137.64,471.28 L1139.79,469.65 L1141.93,468.02 L1144.04,466.40 L1146.14,464.77 L1148.22,463.14 L1150.28,461.52 L1152.33,459.89 L1154.35,458.26 L1156.36,456.64 L1158.34,455.01 L1160.31,453.39 L1162.25,451.76 L1164.18,450.13 L1166.08,448.51 L1167.97,446.88 L1169.84,445.25 L1171.68,443.63 L1173.51,442.00 L1175.31,440.37 L1177.09,438.75 L1178.86,437.12 L1180.60,435.49 L1182.32,433.87 L1184.02,432.24 L1185.70,430.61 L1187.35,428.99 L1188.99,427.36 L1190.60,425.73 L1192.19,424.11 L1193.76,422.48 L1195.30,420.85 L1196.83,419.23 L1198.33,417.60 L1199.81,415.97 L1201.27,414.35 L1202.70,412.72 L1204.11,411.09 L1205.50,409.47 L1206.86,407.84 L1208.21,406.21 L1209.52,404.59 L1210.82,402.96 L1212.09,401.33 L1213.34,399.71 L1214.56,398.08 L1215.76,396.45 L1216.94,394.83 L1218.09,393.20 L1219.22,391.57 L1220.33,389.95 L1221.41,388.32 L1222.46,386.69 L1223.50,385.07 L1224.50,383.44 L1225.49,381.81 L1226.44,380.19 L1227.38,378.56 L1228.29,376.93 L1229.17,375.31 L1230.03,373.68 L1230.86,372.05 L1231.67,370.43 L1232.46,368.80 L1233.22,367.17 L1233.95,365.55 L1234.66,363.92 L1235.34,362.29 L1236.00,360.67 L1236.63,359.04 L1237.24,357.41 L1237.82,355.79 L1238.38,354.16 L1238.91,352.53 L1239.41,350.91 L1239.89,349.28 L1240.34,347.65 L1240.77,346.03 L1241.17,344.40 L1241.55,342.77 L1241.90,341.15 L1242.22,339.52 L1242.52,337.89 L1242.80,336.27 L1243.04,334.64 L1243.26,333.01 L1243.46,331.39 L1243.63,329.76 L1243.77,328.13 L1243.89,326.51 L1243.98,324.88 L1244.04,323.25 L1244.08,321.63 L1244.10,320.00 L1244.08,318.37 L1244.04,316.75 L1243.98,315.12 L1243.89,313.49 L1243.77,311.87 L1243.63,310.24 L1243.46,308.61 L1243.26,306.99 L1243.04,305.36 L1242.80,303.73 L1242.52,302.11 L1242.22,300.48 L1241.90,298.85 L1241.55,297.23 L1241.17,295.60 L1240.77,293.97 L1240.34,292.35 L1239.89,290.72 L1239.41,289.09 L1238.91,287.47 L1238.38,285.84 L1237.82,284.21 L1237.24,282.59 L1236.63,280.96 L1236.00,279.33 L1235.34,277.71 L1234.66,276.08 L1233.95,274.45 L1233.22,272.83 L1232.46,271.20 L1231.67,269.57 L1230.86,267.95 L1230.03,266.32 L1229.17,264.69 L1228.29,263.07 L1227.38,261.44 L1226.44,259.81 L1225.49,258.19 L1224.50,256.56 L1223.50,254.93 L1222.46,253.31 L1221.41,251.68 L1220.33,250.05 L1219.22,248.43 L1218.09,246.80 L1216.94,245.17 L1215.76,243.55 L1214.56,241.92 L1213.34,240.29 L1212.09,238.67 L1210.82,237.04 L1209.52,235.41 L1208.21,233.79 L1206.86,232.16 L1205.50,230.53 L1204.11,228.91 L1202.70,227.28 L1201.27,225.65 L1199.81,224.03 L1198.33,222.40 L1196.83,220.77 L1195.30,219.15 L1193.76,217.52 L1192.19,215.89 L1190.60,214.27 L1188.99,212.64 L1187.35,211.01 L1185.70,209.39 L1184.02,207.76 L1182.32,206.13 L1180.60,204.51 L1178.86,202.88 L1177.09,201.25 L1175.31,199.63 L1173.51,198.00 L1171.68,196.37 L1169.84,194.75 L1167.97,193.12 L1166.08,191.49 L1164.18,189.87 L1162.25,188.24 L1160.31,186.61 L1158.34,184.99 L1156.36,183.36 L1154.35,181.74 L1152.33,180.11 L1150.28,178.48 L1148.22,176.86 L1146.14,175.23 L1144.04,173.60 L1141.93,171.98 L1139.79,170.35 L1137.64,168.72 L1135.47,167.10 L1133.28,165.47 L1131.07,163.84 L1128.85,162.22 L1126.61,160.59 L1124.35,158.96 L1122.07,157.34 L1119.78,155.71 L1117.47,154.08 L1115.15,152.46 L1112.81,150.83 L1110.45,149.20 L1108.08,147.58 L1105.69,145.95 L1103.28,144.32 L1100.87,142.70 L1098.43,141.07 L1095.98,139.44 L1093.52,137.82 L1091.04,136.19 L1088.55,134.56 L1086.04,132.94 L1083.52,131.31 L1080.98,129.68 L1078.43,128.06 L1075.87,126.43 L1073.30,124.80 L1070.71,123.18 L1068.11,121.55 L1065.50,119.92 L1062.87,118.30 L1060.23,116.67 L1057.58,115.04 L1054.92,113.42 L1052.25,111.79 L1049.56,110.16 L1046.86,108.54 L1044.16,106.91 L1041.44,105.28 L1038.71,103.66 L1035.97,102.03 L1033.22,100.40 L1030.46,98.78 L1027.70,97.15 L1024.92,95.52 L1022.13,93.90 L1019.33,92.27 L1016.53,90.64 L1013.71,89.02 L1010.89,87.39 L1008.06,85.76 L1005.22,84.14 L1002.37,82.51 L999.52,80.88 L996.66,79.26 L993.79,77.63 L990.91,76.00 L988.03,74.38 L985.14,72.75 L982.24,71.12 L979.34,69.50 L976.43,67.87 L973.52,66.24 L970.60,64.62 L967.68,62.99 L964.75,61.36 L961.82,59.74 L958.88,58.11 L955.94,56.48 L952.99,54.86 L950.04,53.23 L947.09,51.60 L944.13,49.98 L941.17,48.35 L938.21,46.72 L935.24,45.10 L932.27,43.47 L929.30,41.84 L926.33,40.22 L923.35,38.59 L920.38,36.96 L917.40,35.34 L914.42,33.71 L911.44,32.08 L908.46,30.46 L905.48,28.83 L902.50,27.20"/><path d="M902.50,612.80 L905.06,611.17 L907.61,609.54 L910.16,607.92 L912.72,606.29 L915.27,604.66 L917.82,603.04 L920.37,601.41 L922.92,599.78 L925.47,598.16 L928.02,596.53 L930.56,594.90 L933.11,593.28 L935.65,591.65 L938.18,590.02 L940.72,588.40 L943.25,586.77 L945.78,585.14 L948.30,583.52 L950.83,581.89 L953.34,580.26 L955.86,578.64 L958.37,577.01 L960.87,575.38 L963.38,573.76 L965.87,572.13 L968.36,570.50 L970.85,568.88 L973.33,567.25 L975.81,565.62 L978.28,564.00 L980.75,562.37 L983.21,560.74 L985.66,559.12 L988.11,557.49 L990.55,555.86 L992.98,554.24 L995.41,552.61 L997.83,550.98 L1000.24,549.36 L1002.64,547.73 L1005.04,546.10 L1007.43,544.48 L1009.81,542.85 L1012.18,541.22 L1014.55,539.60 L1016.90,537.97 L1019.25,536.34 L1021.59,534.72 L1023.92,533.09 L1026.24,531.46 L1028.55,529.84 L1030.85,528.21 L1033.15,526.58 L1035.43,524.96 L1037.70,523.33 L1039.96,521.70 L1042.21,520.08 L1044.45,518.45 L1046.68,516.82 L1048.90,515.20 L1051.11,513.57 L1053.30,511.94 L1055.49,510.32 L1057.66,508.69 L1059.82,507.06 L1061.97,505.44 L1064.11,503.81 L1066.23,502.18 L1068.34,500.56 L1070.44,498.93 L1072.53,497.30 L1074.60,495.68 L1076.66,494.05 L1078.71,492.42 L1080.74,490.80 L1082.76,489.17 L1084.77,487.54 L1086.76,485.92 L1088.74,484.29 L1090.71,482.66 L1092.66,481.04 L1094.59,479.41 L1096.51,477.78 L1098.42,476.16 L1100.31,474.53 L1102.19,472.90 L1104.05,471.28 L1105.89,469.65 L1107.72,468.02 L1109.54,466.40 L1111.34,464.77 L1113.12,463.14 L1114.89,461.52 L1116.64,459.89 L1118.37,458.26 L1120.09,456.64 L1121.79,455.01 L1123.48,453.39 L1125.14,451.76 L1126.80,450.13 L1128.43,448.51 L1130.05,446.88 L1131.64,445.25 L1133.23,443.63 L1134.79,442.00 L1136.34,440.37 L1137.87,438.75 L1139.38,437.12 L1140.87,435.49 L1142.34,433.87 L1143.80,432.24 L1145.24,430.61 L1146.66,428.99 L1148.06,427.36 L1149.44,425.73 L1150.81,424.11 L1152.15,422.48 L1153.48,420.85 L1154.78,419.23 L1156.07,417.60 L1157.34,415.97 L1158.59,414.35 L1159.81,412.72 L1161.02,411.09 L1162.21,409.47 L1163.38,407.84 L1164.53,406.21 L1165.66,404.59 L1166.77,402.96 L1167.86,401.33 L1168.93,399.71 L1169.98,398.08 L1171.01,396.45 L1172.02,394.83 L1173.01,393.20 L1173.98,391.57 L1174.92,389.95 L1175.85,388.32 L1176.75,386.69 L1177.64,385.07 L1178.50,383.44 L1179.34,381.81 L1180.17,380.19 L1180.97,378.56 L1181.74,376.93 L1182.50,375.31 L1183.24,373.68 L1183.95,372.05 L1184.65,370.43 L1185.32,368.80 L1185.97,367.17 L1186.60,365.55 L1187.21,363.92 L1187.79,362.29 L1188.36,360.67 L1188.90,359.04 L1189.42,357.41 L1189.92,355.79 L1190.39,354.16 L1190.85,352.53 L1191.28,350.91 L1191.69,349.28 L1192.08,347.65 L1192.45,346.03 L1192.79,344.40 L1193.11,342.77 L1193.41,341.15 L1193.69,339.52 L1193.95,337.89 L1194.18,336.27 L1194.39,334.64 L1194.58,333.01 L1194.75,331.39 L1194.90,329.76 L1195.02,328.13 L1195.12,326.51 L1195.20,324.88 L1195.25,323.25 L1195.29,321.63 L1195.30,320.00 L1195.29,318.37 L1195.25,316.75 L1195.20,315.12 L1195.12,313.49 L1195.02,311.87 L1194.90,310.24 L1194.75,308.61 L1194.58,306.99 L1194.39,305.36 L1194.18,303.73 L1193.95,302.11 L1193.69,300.48 L1193.41,298.85 L1193.11,297.23 L1192.79,295.60 L1192.45,293.97 L1192.08,292.35 L1191.69,290.72 L1191.28,289.09 L1190.85,287.47 L1190.39,285.84 L1189.92,284.21 L1189.42,282.59 L1188.90,280.96 L1188.36,279.33 L1187.79,277.71 L1187.21,276.08 L1186.60,274.45 L1185.97,272.83 L1185.32,271.20 L1184.65,269.57 L1183.95,267.95 L1183.24,266.32 L1182.50,264.69 L1181.74,263.07 L1180.97,261.44 L1180.17,259.81 L1179.34,258.19 L1178.50,256.56 L1177.64,254.93 L1176.75,253.31 L1175.85,251.68 L1174.92,250.05 L1173.98,248.43 L1173.01,246.80 L1172.02,245.17 L1171.01,243.55 L1169.98,241.92 L1168.93,240.29 L1167.86,238.67 L1166.77,237.04 L1165.66,235.41 L1164.53,233.79 L1163.38,232.16 L1162.21,230.53 L1161.02,228.91 L1159.81,227.28 L1158.59,225.65 L1157.34,224.03 L1156.07,222.40 L1154.78,220.77 L1153.48,219.15 L1152.15,217.52 L1150.81,215.89 L1149.44,214.27 L1148.06,212.64 L1146.66,211.01 L1145.24,209.39 L1143.80,207.76 L1142.34,206.13 L1140.87,204.51 L1139.38,202.88 L1137.87,201.25 L1136.34,199.63 L1134.79,198.00 L1133.23,196.37 L1131.64,194.75 L1130.05,193.12 L1128.43,191.49 L1126.80,189.87 L1125.14,188.24 L1123.48,186.61 L1121.79,184.99 L1120.09,183.36 L1118.37,181.74 L1116.64,180.11 L1114.89,178.48 L1113.12,176.86 L1111.34,175.23 L1109.54,173.60 L1107.72,171.98 L1105.89,170.35 L1104.05,168.72 L1102.19,167.10 L1100.31,165.47 L1098.42,163.84 L1096.51,162.22 L1094.59,160.59 L1092.66,158.96 L1090.71,157.34 L1088.74,155.71 L1086.76,154.08 L1084.77,152.46 L1082.76,150.83 L1080.74,149.20 L1078.71,147.58 L1076.66,145.95 L1074.60,144.32 L1072.53,142.70 L1070.44,141.07 L1068.34,139.44 L1066.23,137.82 L1064.11,136.19 L1061.97,134.56 L1059.82,132.94 L1057.66,131.31 L1055.49,129.68 L1053.30,128.06 L1051.11,126.43 L1048.90,124.80 L1046.68,123.18 L1044.45,121.55 L1042.21,119.92 L1039.96,118.30 L1037.70,116.67 L1035.43,115.04 L1033.15,113.42 L1030.85,111.79 L1028.55,110.16 L1026.24,108.54 L1023.92,106.91 L1021.59,105.28 L1019.25,103.66 L1016.90,102.03 L1014.55,100.40 L1012.18,98.78 L1009.81,97.15 L1007.43,95.52 L1005.04,93.90 L1002.64,92.27 L1000.24,90.64 L997.83,89.02 L995.41,87.39 L992.98,85.76 L990.55,84.14 L988.11,82.51 L985.66,80.88 L983.21,79.26 L980.75,77.63 L978.28,76.00 L975.81,74.38 L973.33,72.75 L970.85,71.12 L968.36,69.50 L965.87,67.87 L963.38,66.24 L960.87,64.62 L958.37,62.99 L955.86,61.36 L953.34,59.74 L950.83,58.11 L948.30,56.48 L945.78,54.86 L943.25,53.23 L940.72,51.60 L938.18,49.98 L935.65,48.35 L933.11,46.72 L930.56,45.10 L928.02,43.47 L925.47,41.84 L922.92,40.22 L920.37,38.59 L917.82,36.96 L915.27,35.34 L912.72,33.71 L910.16,32.08 L907.61,30.46 L905.06,28.83 L902.50,27.20"/><path d="M902.50,612.80 L904.63,611.17 L906.76,609.54 L908.89,607.92 L911.02,606.29 L913.14,604.66 L915.27,603.04 L917.40,601.41 L919.52,599.78 L921.64,598.16 L923.77,596.53 L925.89,594.90 L928.00,593.28 L930.12,591.65 L932.24,590.02 L934.35,588.40 L936.46,586.77 L938.57,585.14 L940.67,583.52 L942.77,581.89 L944.87,580.26 L946.96,578.64 L949.06,577.01 L951.15,575.38 L953.23,573.76 L955.31,572.13 L957.39,570.50 L959.46,568.88 L961.53,567.25 L963.59,565.62 L965.65,564.00 L967.71,562.37 L969.75,560.74 L971.80,559.12 L973.84,557.49 L975.87,555.86 L977.90,554.24 L979.92,552.61 L981.94,550.98 L983.95,549.36 L985.95,547.73 L987.95,546.10 L989.94,544.48 L991.93,542.85 L993.90,541.22 L995.87,539.60 L997.84,537.97 L999.79,536.34 L1001.74,534.72 L1003.68,533.09 L1005.62,531.46 L1007.54,529.84 L1009.46,528.21 L1011.37,526.58 L1013.27,524.96 L1015.17,523.33 L1017.05,521.70 L1018.93,520.08 L1020.79,518.45 L1022.65,516.82 L1024.50,515.20 L1026.34,513.57 L1028.17,511.94 L1029.99,510.32 L1031.80,508.69 L1033.60,507.06 L1035.39,505.44 L1037.17,503.81 L1038.94,502.18 L1040.70,500.56 L1042.45,498.93 L1044.19,497.30 L1045.92,495.68 L1047.63,494.05 L1049.34,492.42 L1051.04,490.80 L1052.72,489.17 L1054.39,487.54 L1056.05,485.92 L1057.70,484.29 L1059.34,482.66 L1060.96,481.04 L1062.58,479.41 L1064.18,477.78 L1065.77,476.16 L1067.34,474.53 L1068.91,472.90 L1070.46,471.28 L1071.99,469.65 L1073.52,468.02 L1075.03,466.40 L1076.53,464.77 L1078.02,463.14 L1079.49,461.52 L1080.95,459.89 L1082.39,458.26 L1083.83,456.64 L1085.24,455.01 L1086.65,453.39 L1088.04,451.76 L1089.41,450.13 L1090.77,448.51 L1092.12,446.88 L1093.45,445.25 L1094.77,443.63 L1096.08,442.00 L1097.36,440.37 L1098.64,438.75 L1099.90,437.12 L1101.14,435.49 L1102.37,433.87 L1103.58,432.24 L1104.78,430.61 L1105.97,428.99 L1107.13,427.36 L1108.29,425.73 L1109.42,424.11 L1110.54,422.48 L1111.65,420.85 L1112.73,419.23 L1113.81,417.60 L1114.86,415.97 L1115.90,414.35 L1116.93,412.72 L1117.94,411.09 L1118.93,409.47 L1119.90,407.84 L1120.86,406.21 L1121.80,404.59 L1122.73,402.96 L1123.64,401.33 L1124.53,399.71 L1125.40,398.08 L1126.26,396.45 L1127.10,394.83 L1127.92,393.20 L1128.73,391.57 L1129.52,389.95 L1130.29,388.32 L1131.05,386.69 L1131.78,385.07 L1132.50,383.44 L1133.20,381.81 L1133.89,380.19 L1134.55,378.56 L1135.20,376.93 L1135.84,375.31 L1136.45,373.68 L1137.04,372.05 L1137.62,370.43 L1138.18,368.80 L1138.73,367.17 L1139.25,365.55 L1139.76,363.92 L1140.24,362.29 L1140.71,360.67 L1141.17,359.04 L1141.60,357.41 L1142.01,355.79 L1142.41,354.16 L1142.79,352.53 L1143.15,350.91 L1143.49,349.28 L1143.82,347.65 L1144.12,346.03 L1144.41,344.40 L1144.68,342.77 L1144.93,341.15 L1145.16,339.52 L1145.37,337.89 L1145.57,336.27 L1145.74,334.64 L1145.90,333.01 L1146.04,331.39 L1146.16,329.76 L1146.26,328.13 L1146.35,326.51 L1146.41,324.88 L1146.46,323.25 L1146.49,321.63 L1146.50,320.00 L1146.49,318.37 L1146.46,316.75 L1146.41,315.12 L1146.35,313.49 L1146.26,311.87 L1146.16,310.24 L1146.04,308.61 L1145.90,306.99 L1145.74,305.36 L1145.57,303.73 L1145.37,302.11 L1145.16,300.48 L1144.93,298.85 L1144.68,297.23 L1144.41,295.60 L1144.12,293.97 L1143.82,292.35 L1143.49,290.72 L1143.15,289.09 L1142.79,287.47 L1142.41,285.84 L1142.01,284.21 L1141.60,282.59 L1141.17,280.96 L1140.71,279.33 L1140.24,277.71 L1139.76,276.08 L1139.25,274.45 L1138.73,272.83 L1138.18,271.20 L1137.62,269.57 L1137.04,267.95 L1136.45,266.32 L1135.84,264.69 L1135.20,263.07 L1134.55,261.44 L1133.89,259.81 L1133.20,258.19 L1132.50,256.56 L1131.78,254.93 L1131.05,253.31 L1130.29,251.68 L1129.52,250.05 L1128.73,248.43 L1127.92,246.80 L1127.10,245.17 L1126.26,243.55 L1125.40,241.92 L1124.53,240.29 L1123.64,238.67 L1122.73,237.04 L1121.80,235.41 L1120.86,233.79 L1119.90,232.16 L1118.93,230.53 L1117.94,228.91 L1116.93,227.28 L1115.90,225.65 L1114.86,224.03 L1113.81,222.40 L1112.73,220.77 L1111.65,219.15 L1110.54,217.52 L1109.42,215.89 L1108.29,214.27 L1107.13,212.64 L1105.97,211.01 L1104.78,209.39 L1103.58,207.76 L1102.37,206.13 L1101.14,204.51 L1099.90,202.88 L1098.64,201.25 L1097.36,199.63 L1096.08,198.00 L1094.77,196.37 L1093.45,194.75 L1092.12,193.12 L1090.77,191.49 L1089.41,189.87 L1088.04,188.24 L1086.65,186.61 L1085.24,184.99 L1083.83,183.36 L1082.39,181.74 L1080.95,180.11 L1079.49,178.48 L1078.02,176.86 L1076.53,175.23 L1075.03,173.60 L1073.52,171.98 L1071.99,170.35 L1070.46,168.72 L1068.91,167.10 L1067.34,165.47 L1065.77,163.84 L1064.18,162.22 L1062.58,160.59 L1060.96,158.96 L1059.34,157.34 L1057.70,155.71 L1056.05,154.08 L1054.39,152.46 L1052.72,150.83 L1051.04,149.20 L1049.34,147.58 L1047.63,145.95 L1045.92,144.32 L1044.19,142.70 L1042.45,141.07 L1040.70,139.44 L1038.94,137.82 L1037.17,136.19 L1035.39,134.56 L1033.60,132.94 L1031.80,131.31 L1029.99,129.68 L1028.17,128.06 L1026.34,126.43 L1024.50,124.80 L1022.65,123.18 L1020.79,121.55 L1018.93,119.92 L1017.05,118.30 L1015.17,116.67 L1013.27,115.04 L1011.37,113.42 L1009.46,111.79 L1007.54,110.16 L1005.62,108.54 L1003.68,106.91 L1001.74,105.28 L999.79,103.66 L997.84,102.03 L995.87,100.40 L993.90,98.78 L991.93,97.15 L989.94,95.52 L987.95,93.90 L985.95,92.27 L983.95,90.64 L981.94,89.02 L979.92,87.39 L977.90,85.76 L975.87,84.14 L973.84,82.51 L971.80,80.88 L969.75,79.26 L967.71,77.63 L965.65,76.00 L963.59,74.38 L961.53,72.75 L959.46,71.12 L957.39,69.50 L955.31,67.87 L953.23,66.24 L951.15,64.62 L949.06,62.99 L946.96,61.36 L944.87,59.74 L942.77,58.11 L940.67,56.48 L938.57,54.86 L936.46,53.23 L934.35,51.60 L932.24,49.98 L930.12,48.35 L928.00,46.72 L925.89,45.10 L923.77,43.47 L921.64,41.84 L919.52,40.22 L917.40,38.59 L915.27,36.96 L913.14,35.34 L911.02,33.71 L908.89,32.08 L906.76,30.46 L904.63,28.83 L902.50,27.20"/><path d="M902.50,612.80 L904.20,611.17 L905.91,609.54 L907.61,607.92 L909.31,606.29 L911.01,604.66 L912.72,603.04 L914.42,601.41 L916.12,599.78 L917.82,598.16 L919.51,596.53 L921.21,594.90 L922.90,593.28 L924.60,591.65 L926.29,590.02 L927.98,588.40 L929.67,586.77 L931.35,585.14 L933.04,583.52 L934.72,581.89 L936.40,580.26 L938.07,578.64 L939.75,577.01 L941.42,575.38 L943.08,573.76 L944.75,572.13 L946.41,570.50 L948.07,568.88 L949.72,567.25 L951.37,565.62 L953.02,564.00 L954.66,562.37 L956.30,560.74 L957.94,559.12 L959.57,557.49 L961.20,555.86 L962.82,554.24 L964.44,552.61 L966.05,550.98 L967.66,549.36 L969.26,547.73 L970.86,546.10 L972.45,544.48 L974.04,542.85 L975.62,541.22 L977.20,539.60 L978.77,537.97 L980.33,536.34 L981.89,534.72 L983.45,533.09 L984.99,531.46 L986.53,529.84 L988.07,528.21 L989.60,526.58 L991.12,524.96 L992.63,523.33 L994.14,521.70 L995.64,520.08 L997.13,518.45 L998.62,516.82 L1000.10,515.20 L1001.57,513.57 L1003.03,511.94 L1004.49,510.32 L1005.94,508.69 L1007.38,507.06 L1008.81,505.44 L1010.24,503.81 L1011.65,502.18 L1013.06,500.56 L1014.46,498.93 L1015.85,497.30 L1017.23,495.68 L1018.61,494.05 L1019.97,492.42 L1021.33,490.80 L1022.68,489.17 L1024.01,487.54 L1025.34,485.92 L1026.66,484.29 L1027.97,482.66 L1029.27,481.04 L1030.56,479.41 L1031.84,477.78 L1033.11,476.16 L1034.37,474.53 L1035.62,472.90 L1036.87,471.28 L1038.10,469.65 L1039.32,468.02 L1040.53,466.40 L1041.72,464.77 L1042.91,463.14 L1044.09,461.52 L1045.26,459.89 L1046.41,458.26 L1047.56,456.64 L1048.69,455.01 L1049.82,453.39 L1050.93,451.76 L1052.03,450.13 L1053.12,448.51 L1054.20,446.88 L1055.26,445.25 L1056.32,443.63 L1057.36,442.00 L1058.39,440.37 L1059.41,438.75 L1060.42,437.12 L1061.41,435.49 L1062.40,433.87 L1063.37,432.24 L1064.33,430.61 L1065.27,428.99 L1066.21,427.36 L1067.13,425.73 L1068.04,424.11 L1068.93,422.48 L1069.82,420.85 L1070.69,419.23 L1071.55,417.60 L1072.39,415.97 L1073.22,414.35 L1074.04,412.72 L1074.85,411.09 L1075.64,409.47 L1076.42,407.84 L1077.19,406.21 L1077.94,404.59 L1078.68,402.96 L1079.41,401.33 L1080.12,399.71 L1080.82,398.08 L1081.51,396.45 L1082.18,394.83 L1082.84,393.20 L1083.48,391.57 L1084.12,389.95 L1084.73,388.32 L1085.34,386.69 L1085.93,385.07 L1086.50,383.44 L1087.06,381.81 L1087.61,380.19 L1088.14,378.56 L1088.66,376.93 L1089.17,375.31 L1089.66,373.68 L1090.14,372.05 L1090.60,370.43 L1091.05,368.80 L1091.48,367.17 L1091.90,365.55 L1092.30,363.92 L1092.69,362.29 L1093.07,360.67 L1093.43,359.04 L1093.78,357.41 L1094.11,355.79 L1094.43,354.16 L1094.73,352.53 L1095.02,350.91 L1095.29,349.28 L1095.55,347.65 L1095.80,346.03 L1096.03,344.40 L1096.24,342.77 L1096.44,341.15 L1096.63,339.52 L1096.80,337.89 L1096.95,336.27 L1097.10,334.64 L1097.22,333.01 L1097.33,331.39 L1097.43,329.76 L1097.51,328.13 L1097.58,326.51 L1097.63,324.88 L1097.67,323.25 L1097.69,321.63 L1097.70,320.00 L1097.69,318.37 L1097.67,316.75 L1097.63,315.12 L1097.58,313.49 L1097.51,311.87 L1097.43,310.24 L1097.33,308.61 L1097.22,306.99 L1097.10,305.36 L1096.95,303.73 L1096.80,302.11 L1096.63,300.48 L1096.44,298.85 L1096.24,297.23 L1096.03,295.60 L1095.80,293.97 L1095.55,292.35 L1095.29,290.72 L1095.02,289.09 L1094.73,287.47 L1094.43,285.84 L1094.11,284.21 L1093.78,282.59 L1093.43,280.96 L1093.07,279.33 L1092.69,277.71 L1092.30,276.08 L1091.90,274.45 L1091.48,272.83 L1091.05,271.20 L1090.60,269.57 L1090.14,267.95 L1089.66,266.32 L1089.17,264.69 L1088.66,263.07 L1088.14,261.44 L1087.61,259.81 L1087.06,258.19 L1086.50,256.56 L1085.93,254.93 L1085.34,253.31 L1084.73,251.68 L1084.12,250.05 L1083.48,248.43 L1082.84,246.80 L1082.18,245.17 L1081.51,243.55 L1080.82,241.92 L1080.12,240.29 L1079.41,238.67 L1078.68,237.04 L1077.94,235.41 L1077.19,233.79 L1076.42,232.16 L1075.64,230.53 L1074.85,228.91 L1074.04,227.28 L1073.22,225.65 L1072.39,224.03 L1071.55,222.40 L1070.69,220.77 L1069.82,219.15 L1068.93,217.52 L1068.04,215.89 L1067.13,214.27 L1066.21,212.64 L1065.27,211.01 L1064.33,209.39 L1063.37,207.76 L1062.40,206.13 L1061.41,204.51 L1060.42,202.88 L1059.41,201.25 L1058.39,199.63 L1057.36,198.00 L1056.32,196.37 L1055.26,194.75 L1054.20,193.12 L1053.12,191.49 L1052.03,189.87 L1050.93,188.24 L1049.82,186.61 L1048.69,184.99 L1047.56,183.36 L1046.41,181.74 L1045.26,180.11 L1044.09,178.48 L1042.91,176.86 L1041.72,175.23 L1040.53,173.60 L1039.32,171.98 L1038.10,170.35 L1036.87,168.72 L1035.62,167.10 L1034.37,165.47 L1033.11,163.84 L1031.84,162.22 L1030.56,160.59 L1029.27,158.96 L1027.97,157.34 L1026.66,155.71 L1025.34,154.08 L1024.01,152.46 L1022.68,150.83 L1021.33,149.20 L1019.97,147.58 L1018.61,145.95 L1017.23,144.32 L1015.85,142.70 L1014.46,141.07 L1013.06,139.44 L1011.65,137.82 L1010.24,136.19 L1008.81,134.56 L1007.38,132.94 L1005.94,131.31 L1004.49,129.68 L1003.03,128.06 L1001.57,126.43 L1000.10,124.80 L998.62,123.18 L997.13,121.55 L995.64,119.92 L994.14,118.30 L992.63,116.67 L991.12,115.04 L989.60,113.42 L988.07,111.79 L986.53,110.16 L984.99,108.54 L983.45,106.91 L981.89,105.28 L980.33,103.66 L978.77,102.03 L977.20,100.40 L975.62,98.78 L974.04,97.15 L972.45,95.52 L970.86,93.90 L969.26,92.27 L967.66,90.64 L966.05,89.02 L964.44,87.39 L962.82,85.76 L961.20,84.14 L959.57,82.51 L957.94,80.88 L956.30,79.26 L954.66,77.63 L953.02,76.00 L951.37,74.38 L949.72,72.75 L948.07,71.12 L946.41,69.50 L944.75,67.87 L943.08,66.24 L941.42,64.62 L939.75,62.99 L938.07,61.36 L936.40,59.74 L934.72,58.11 L933.04,56.48 L931.35,54.86 L929.67,53.23 L927.98,51.60 L926.29,49.98 L924.60,48.35 L922.90,46.72 L921.21,45.10 L919.51,43.47 L917.82,41.84 L916.12,40.22 L914.42,38.59 L912.72,36.96 L911.01,35.34 L909.31,33.71 L907.61,32.08 L905.91,30.46 L904.20,28.83 L902.50,27.20"/><path d="M902.50,612.80 L903.78,611.17 L905.06,609.54 L906.33,607.92 L907.61,606.29 L908.89,604.66 L910.16,603.04 L911.44,601.41 L912.71,599.78 L913.99,598.16 L915.26,596.53 L916.53,594.90 L917.80,593.28 L919.07,591.65 L920.34,590.02 L921.61,588.40 L922.87,586.77 L924.14,585.14 L925.40,583.52 L926.66,581.89 L927.92,580.26 L929.18,578.64 L930.43,577.01 L931.69,575.38 L932.94,573.76 L934.19,572.13 L935.43,570.50 L936.68,568.88 L937.92,567.25 L939.16,565.62 L940.39,564.00 L941.62,562.37 L942.85,560.74 L944.08,559.12 L945.30,557.49 L946.52,555.86 L947.74,554.24 L948.95,552.61 L950.16,550.98 L951.37,549.36 L952.57,547.73 L953.77,546.10 L954.96,544.48 L956.16,542.85 L957.34,541.22 L958.52,539.60 L959.70,537.97 L960.88,536.34 L962.05,534.72 L963.21,533.09 L964.37,531.46 L965.53,529.84 L966.68,528.21 L967.82,526.58 L968.96,524.96 L970.10,523.33 L971.23,521.70 L972.36,520.08 L973.48,518.45 L974.59,516.82 L975.70,515.20 L976.80,513.57 L977.90,511.94 L978.99,510.32 L980.08,508.69 L981.16,507.06 L982.23,505.44 L983.30,503.81 L984.36,502.18 L985.42,500.56 L986.47,498.93 L987.51,497.30 L988.55,495.68 L989.58,494.05 L990.60,492.42 L991.62,490.80 L992.63,489.17 L993.64,487.54 L994.63,485.92 L995.62,484.29 L996.60,482.66 L997.58,481.04 L998.55,479.41 L999.51,477.78 L1000.46,476.16 L1001.41,474.53 L1002.34,472.90 L1003.27,471.28 L1004.20,469.65 L1005.11,468.02 L1006.02,466.40 L1006.92,464.77 L1007.81,463.14 L1008.69,461.52 L1009.57,459.89 L1010.44,458.26 L1011.30,456.64 L1012.15,455.01 L1012.99,453.39 L1013.82,451.76 L1014.65,450.13 L1015.46,448.51 L1016.27,446.88 L1017.07,445.25 L1017.86,443.63 L1018.65,442.00 L1019.42,440.37 L1020.18,438.75 L1020.94,437.12 L1021.69,435.49 L1022.42,433.87 L1023.15,432.24 L1023.87,430.61 L1024.58,428.99 L1025.28,427.36 L1025.97,425.73 L1026.65,424.11 L1027.33,422.48 L1027.99,420.85 L1028.64,419.23 L1029.28,417.60 L1029.92,415.97 L1030.54,414.35 L1031.16,412.72 L1031.76,411.09 L1032.36,409.47 L1032.94,407.84 L1033.52,406.21 L1034.08,404.59 L1034.64,402.96 L1035.18,401.33 L1035.72,399.71 L1036.24,398.08 L1036.76,396.45 L1037.26,394.83 L1037.75,393.20 L1038.24,391.57 L1038.71,389.95 L1039.17,388.32 L1039.63,386.69 L1040.07,385.07 L1040.50,383.44 L1040.92,381.81 L1041.33,380.19 L1041.73,378.56 L1042.12,376.93 L1042.50,375.31 L1042.87,373.68 L1043.23,372.05 L1043.57,370.43 L1043.91,368.80 L1044.24,367.17 L1044.55,365.55 L1044.85,363.92 L1045.15,362.29 L1045.43,360.67 L1045.70,359.04 L1045.96,357.41 L1046.21,355.79 L1046.45,354.16 L1046.67,352.53 L1046.89,350.91 L1047.10,349.28 L1047.29,347.65 L1047.47,346.03 L1047.65,344.40 L1047.81,342.77 L1047.96,341.15 L1048.10,339.52 L1048.22,337.89 L1048.34,336.27 L1048.45,334.64 L1048.54,333.01 L1048.63,331.39 L1048.70,329.76 L1048.76,328.13 L1048.81,326.51 L1048.85,324.88 L1048.88,323.25 L1048.89,321.63 L1048.90,320.00 L1048.89,318.37 L1048.88,316.75 L1048.85,315.12 L1048.81,313.49 L1048.76,311.87 L1048.70,310.24 L1048.63,308.61 L1048.54,306.99 L1048.45,305.36 L1048.34,303.73 L1048.22,302.11 L1048.10,300.48 L1047.96,298.85 L1047.81,297.23 L1047.65,295.60 L1047.47,293.97 L1047.29,292.35 L1047.10,290.72 L1046.89,289.09 L1046.67,287.47 L1046.45,285.84 L1046.21,284.21 L1045.96,282.59 L1045.70,280.96 L1045.43,279.33 L1045.15,277.71 L1044.85,276.08 L1044.55,274.45 L1044.24,272.83 L1043.91,271.20 L1043.57,269.57 L1043.23,267.95 L1042.87,266.32 L1042.50,264.69 L1042.12,263.07 L1041.73,261.44 L1041.33,259.81 L1040.92,258.19 L1040.50,256.56 L1040.07,254.93 L1039.63,253.31 L1039.17,251.68 L1038.71,250.05 L1038.24,248.43 L1037.75,246.80 L1037.26,245.17 L1036.76,243.55 L1036.24,241.92 L1035.72,240.29 L1035.18,238.67 L1034.64,237.04 L1034.08,235.41 L1033.52,233.79 L1032.94,232.16 L1032.36,230.53 L1031.76,228.91 L1031.16,227.28 L1030.54,225.65 L1029.92,224.03 L1029.28,222.40 L1028.64,220.77 L1027.99,219.15 L1027.33,217.52 L1026.65,215.89 L1025.97,214.27 L1025.28,212.64 L1024.58,211.01 L1023.87,209.39 L1023.15,207.76 L1022.42,206.13 L1021.69,204.51 L1020.94,202.88 L1020.18,201.25 L1019.42,199.63 L1018.65,198.00 L1017.86,196.37 L1017.07,194.75 L1016.27,193.12 L1015.46,191.49 L1014.65,189.87 L1013.82,188.24 L1012.99,186.61 L1012.15,184.99 L1011.30,183.36 L1010.44,181.74 L1009.57,180.11 L1008.69,178.48 L1007.81,176.86 L1006.92,175.23 L1006.02,173.60 L1005.11,171.98 L1004.20,170.35 L1003.27,168.72 L1002.34,167.10 L1001.41,165.47 L1000.46,163.84 L999.51,162.22 L998.55,160.59 L997.58,158.96 L996.60,157.34 L995.62,155.71 L994.63,154.08 L993.64,152.46 L992.63,150.83 L991.62,149.20 L990.60,147.58 L989.58,145.95 L988.55,144.32 L987.51,142.70 L986.47,141.07 L985.42,139.44 L984.36,137.82 L983.30,136.19 L982.23,134.56 L981.16,132.94 L980.08,131.31 L978.99,129.68 L977.90,128.06 L976.80,126.43 L975.70,124.80 L974.59,123.18 L973.48,121.55 L972.36,119.92 L971.23,118.30 L970.10,116.67 L968.96,115.04 L967.82,113.42 L966.68,111.79 L965.53,110.16 L964.37,108.54 L963.21,106.91 L962.05,105.28 L960.88,103.66 L959.70,102.03 L958.52,100.40 L957.34,98.78 L956.16,97.15 L954.96,95.52 L953.77,93.90 L952.57,92.27 L951.37,90.64 L950.16,89.02 L948.95,87.39 L947.74,85.76 L946.52,84.14 L945.30,82.51 L944.08,80.88 L942.85,79.26 L941.62,77.63 L940.39,76.00 L939.16,74.38 L937.92,72.75 L936.68,71.12 L935.43,69.50 L934.19,67.87 L932.94,66.24 L931.69,64.62 L930.43,62.99 L929.18,61.36 L927.92,59.74 L926.66,58.11 L925.40,56.48 L924.14,54.86 L922.87,53.23 L921.61,51.60 L920.34,49.98 L919.07,48.35 L917.80,46.72 L916.53,45.10 L915.26,43.47 L913.99,41.84 L912.71,40.22 L911.44,38.59 L910.16,36.96 L908.89,35.34 L907.61,33.71 L906.33,32.08 L905.06,30.46 L903.78,28.83 L902.50,27.20"/><path d="M902.50,612.80 L903.35,611.17 L904.20,609.54 L905.05,607.92 L905.91,606.29 L906.76,604.66 L907.61,603.04 L908.46,601.41 L909.31,599.78 L910.16,598.16 L911.01,596.53 L911.85,594.90 L912.70,593.28 L913.55,591.65 L914.39,590.02 L915.24,588.40 L916.08,586.77 L916.93,585.14 L917.77,583.52 L918.61,581.89 L919.45,580.26 L920.29,578.64 L921.12,577.01 L921.96,575.38 L922.79,573.76 L923.62,572.13 L924.45,570.50 L925.28,568.88 L926.11,567.25 L926.94,565.62 L927.76,564.00 L928.58,562.37 L929.40,560.74 L930.22,559.12 L931.04,557.49 L931.85,555.86 L932.66,554.24 L933.47,552.61 L934.28,550.98 L935.08,549.36 L935.88,547.73 L936.68,546.10 L937.48,544.48 L938.27,542.85 L939.06,541.22 L939.85,539.60 L940.63,537.97 L941.42,536.34 L942.20,534.72 L942.97,533.09 L943.75,531.46 L944.52,529.84 L945.28,528.21 L946.05,526.58 L946.81,524.96 L947.57,523.33 L948.32,521.70 L949.07,520.08 L949.82,518.45 L950.56,516.82 L951.30,515.20 L952.04,513.57 L952.77,511.94 L953.50,510.32 L954.22,508.69 L954.94,507.06 L955.66,505.44 L956.37,503.81 L957.08,502.18 L957.78,500.56 L958.48,498.93 L959.18,497.30 L959.87,495.68 L960.55,494.05 L961.24,492.42 L961.91,490.80 L962.59,489.17 L963.26,487.54 L963.92,485.92 L964.58,484.29 L965.24,482.66 L965.89,481.04 L966.53,479.41 L967.17,477.78 L967.81,476.16 L968.44,474.53 L969.06,472.90 L969.68,471.28 L970.30,469.65 L970.91,468.02 L971.51,466.40 L972.11,464.77 L972.71,463.14 L973.30,461.52 L973.88,459.89 L974.46,458.26 L975.03,456.64 L975.60,455.01 L976.16,453.39 L976.71,451.76 L977.27,450.13 L977.81,448.51 L978.35,446.88 L978.88,445.25 L979.41,443.63 L979.93,442.00 L980.45,440.37 L980.96,438.75 L981.46,437.12 L981.96,435.49 L982.45,433.87 L982.93,432.24 L983.41,430.61 L983.89,428.99 L984.35,427.36 L984.81,425.73 L985.27,424.11 L985.72,422.48 L986.16,420.85 L986.59,419.23 L987.02,417.60 L987.45,415.97 L987.86,414.35 L988.27,412.72 L988.67,411.09 L989.07,409.47 L989.46,407.84 L989.84,406.21 L990.22,404.59 L990.59,402.96 L990.95,401.33 L991.31,399.71 L991.66,398.08 L992.00,396.45 L992.34,394.83 L992.67,393.20 L992.99,391.57 L993.31,389.95 L993.62,388.32 L993.92,386.69 L994.21,385.07 L994.50,383.44 L994.78,381.81 L995.06,380.19 L995.32,378.56 L995.58,376.93 L995.83,375.31 L996.08,373.68 L996.32,372.05 L996.55,370.43 L996.77,368.80 L996.99,367.17 L997.20,365.55 L997.40,363.92 L997.60,362.29 L997.79,360.67 L997.97,359.04 L998.14,357.41 L998.31,355.79 L998.46,354.16 L998.62,352.53 L998.76,350.91 L998.90,349.28 L999.03,347.65 L999.15,346.03 L999.26,344.40 L999.37,342.77 L999.47,341.15 L999.56,339.52 L999.65,337.89 L999.73,336.27 L999.80,334.64 L999.86,333.01 L999.92,331.39 L999.97,329.76 L1000.01,328.13 L1000.04,326.51 L1000.07,324.88 L1000.08,323.25 L1000.10,321.63 L1000.10,320.00 L1000.10,318.37 L1000.08,316.75 L1000.07,315.12 L1000.04,313.49 L1000.01,311.87 L999.97,310.24 L999.92,308.61 L999.86,306.99 L999.80,305.36 L999.73,303.73 L999.65,302.11 L999.56,300.48 L999.47,298.85 L999.37,297.23 L999.26,295.60 L999.15,293.97 L999.03,292.35 L998.90,290.72 L998.76,289.09 L998.62,287.47 L998.46,285.84 L998.31,284.21 L998.14,282.59 L997.97,280.96 L997.79,279.33 L997.60,277.71 L997.40,276.08 L997.20,274.45 L996.99,272.83 L996.77,271.20 L996.55,269.57 L996.32,267.95 L996.08,266.32 L995.83,264.69 L995.58,263.07 L995.32,261.44 L995.06,259.81 L994.78,258.19 L994.50,256.56 L994.21,254.93 L993.92,253.31 L993.62,251.68 L993.31,250.05 L992.99,248.43 L992.67,246.80 L992.34,245.17 L992.00,243.55 L991.66,241.92 L991.31,240.29 L990.95,238.67 L990.59,237.04 L990.22,235.41 L989.84,233.79 L989.46,232.16 L989.07,230.53 L988.67,228.91 L988.27,227.28 L987.86,225.65 L987.45,224.03 L987.02,222.40 L986.59,220.77 L986.16,219.15 L985.72,217.52 L985.27,215.89 L984.81,214.27 L984.35,212.64 L983.89,211.01 L983.41,209.39 L982.93,207.76 L982.45,206.13 L981.96,204.51 L981.46,202.88 L980.96,201.25 L980.45,199.63 L979.93,198.00 L979.41,196.37 L978.88,194.75 L978.35,193.12 L977.81,191.49 L977.27,189.87 L976.71,188.24 L976.16,186.61 L975.60,184.99 L975.03,183.36 L974.46,181.74 L973.88,180.11 L973.30,178.48 L972.71,176.86 L972.11,175.23 L971.51,173.60 L970.91,171.98 L970.30,170.35 L969.68,168.72 L969.06,167.10 L968.44,165.47 L967.81,163.84 L967.17,162.22 L966.53,160.59 L965.89,158.96 L965.24,157.34 L964.58,155.71 L963.92,154.08 L963.26,152.46 L962.59,150.83 L961.91,149.20 L961.24,147.58 L960.55,145.95 L959.87,144.32 L959.18,142.70 L958.48,141.07 L957.78,139.44 L957.08,137.82 L956.37,136.19 L955.66,134.56 L954.94,132.94 L954.22,131.31 L953.50,129.68 L952.77,128.06 L952.04,126.43 L951.30,124.80 L950.56,123.18 L949.82,121.55 L949.07,119.92 L948.32,118.30 L947.57,116.67 L946.81,115.04 L946.05,113.42 L945.28,111.79 L944.52,110.16 L943.75,108.54 L942.97,106.91 L942.20,105.28 L941.42,103.66 L940.63,102.03 L939.85,100.40 L939.06,98.78 L938.27,97.15 L937.48,95.52 L936.68,93.90 L935.88,92.27 L935.08,90.64 L934.28,89.02 L933.47,87.39 L932.66,85.76 L931.85,84.14 L931.04,82.51 L930.22,80.88 L929.40,79.26 L928.58,77.63 L927.76,76.00 L926.94,74.38 L926.11,72.75 L925.28,71.12 L924.45,69.50 L923.62,67.87 L922.79,66.24 L921.96,64.62 L921.12,62.99 L920.29,61.36 L919.45,59.74 L918.61,58.11 L917.77,56.48 L916.93,54.86 L916.08,53.23 L915.24,51.60 L914.39,49.98 L913.55,48.35 L912.70,46.72 L911.85,45.10 L911.01,43.47 L910.16,41.84 L909.31,40.22 L908.46,38.59 L907.61,36.96 L906.76,35.34 L905.91,33.71 L905.05,32.08 L904.20,30.46 L903.35,28.83 L902.50,27.20"/><path d="M902.50,612.80 L902.93,611.17 L903.35,609.54 L903.78,607.92 L904.20,606.29 L904.63,604.66 L905.05,603.04 L905.48,601.41 L905.90,599.78 L906.33,598.16 L906.75,596.53 L907.18,594.90 L907.60,593.28 L908.02,591.65 L908.45,590.02 L908.87,588.40 L909.29,586.77 L909.71,585.14 L910.13,583.52 L910.55,581.89 L910.97,580.26 L911.39,578.64 L911.81,577.01 L912.23,575.38 L912.65,573.76 L913.06,572.13 L913.48,570.50 L913.89,568.88 L914.31,567.25 L914.72,565.62 L915.13,564.00 L915.54,562.37 L915.95,560.74 L916.36,559.12 L916.77,557.49 L917.17,555.86 L917.58,554.24 L917.98,552.61 L918.39,550.98 L918.79,549.36 L919.19,547.73 L919.59,546.10 L919.99,544.48 L920.39,542.85 L920.78,541.22 L921.17,539.60 L921.57,537.97 L921.96,536.34 L922.35,534.72 L922.74,533.09 L923.12,531.46 L923.51,529.84 L923.89,528.21 L924.27,526.58 L924.65,524.96 L925.03,523.33 L925.41,521.70 L925.79,520.08 L926.16,518.45 L926.53,516.82 L926.90,515.20 L927.27,513.57 L927.63,511.94 L928.00,510.32 L928.36,508.69 L928.72,507.06 L929.08,505.44 L929.43,503.81 L929.79,502.18 L930.14,500.56 L930.49,498.93 L930.84,497.30 L931.18,495.68 L931.53,494.05 L931.87,492.42 L932.21,490.80 L932.54,489.17 L932.88,487.54 L933.21,485.92 L933.54,484.29 L933.87,482.66 L934.19,481.04 L934.52,479.41 L934.84,477.78 L935.15,476.16 L935.47,474.53 L935.78,472.90 L936.09,471.28 L936.40,469.65 L936.70,468.02 L937.01,466.40 L937.31,464.77 L937.60,463.14 L937.90,461.52 L938.19,459.89 L938.48,458.26 L938.77,456.64 L939.05,455.01 L939.33,453.39 L939.61,451.76 L939.88,450.13 L940.15,448.51 L940.42,446.88 L940.69,445.25 L940.95,443.63 L941.22,442.00 L941.47,440.37 L941.73,438.75 L941.98,437.12 L942.23,435.49 L942.47,433.87 L942.72,432.24 L942.96,430.61 L943.19,428.99 L943.43,427.36 L943.66,425.73 L943.88,424.11 L944.11,422.48 L944.33,420.85 L944.55,419.23 L944.76,417.60 L944.97,415.97 L945.18,414.35 L945.39,412.72 L945.59,411.09 L945.79,409.47 L945.98,407.84 L946.17,406.21 L946.36,404.59 L946.55,402.96 L946.73,401.33 L946.91,399.71 L947.08,398.08 L947.25,396.45 L947.42,394.83 L947.58,393.20 L947.75,391.57 L947.90,389.95 L948.06,388.32 L948.21,386.69 L948.36,385.07 L948.50,383.44 L948.64,381.81 L948.78,380.19 L948.91,378.56 L949.04,376.93 L949.17,375.31 L949.29,373.68 L949.41,372.05 L949.52,370.43 L949.64,368.80 L949.75,367.17 L949.85,365.55 L949.95,363.92 L950.05,362.29 L950.14,360.67 L950.23,359.04 L950.32,357.41 L950.40,355.79 L950.48,354.16 L950.56,352.53 L950.63,350.91 L950.70,349.28 L950.76,347.65 L950.82,346.03 L950.88,344.40 L950.94,342.77 L950.99,341.15 L951.03,339.52 L951.07,337.89 L951.11,336.27 L951.15,334.64 L951.18,333.01 L951.21,331.39 L951.23,329.76 L951.25,328.13 L951.27,326.51 L951.28,324.88 L951.29,323.25 L951.30,321.63 L951.30,320.00 L951.30,318.37 L951.29,316.75 L951.28,315.12 L951.27,313.49 L951.25,311.87 L951.23,310.24 L951.21,308.61 L951.18,306.99 L951.15,305.36 L951.11,303.73 L951.07,302.11 L951.03,300.48 L950.99,298.85 L950.94,297.23 L950.88,295.60 L950.82,293.97 L950.76,292.35 L950.70,290.72 L950.63,289.09 L950.56,287.47 L950.48,285.84 L950.40,284.21 L950.32,282.59 L950.23,280.96 L950.14,279.33 L950.05,277.71 L949.95,276.08 L949.85,274.45 L949.75,272.83 L949.64,271.20 L949.52,269.57 L949.41,267.95 L949.29,266.32 L949.17,264.69 L949.04,263.07 L948.91,261.44 L948.78,259.81 L948.64,258.19 L948.50,256.56 L948.36,254.93 L948.21,253.31 L948.06,251.68 L947.90,250.05 L947.75,248.43 L947.58,246.80 L947.42,245.17 L947.25,243.55 L947.08,241.92 L946.91,240.29 L946.73,238.67 L946.55,237.04 L946.36,235.41 L946.17,233.79 L945.98,232.16 L945.79,230.53 L945.59,228.91 L945.39,227.28 L945.18,225.65 L944.97,224.03 L944.76,222.40 L944.55,220.77 L944.33,219.15 L944.11,217.52 L943.88,215.89 L943.66,214.27 L943.43,212.64 L943.19,211.01 L942.96,209.39 L942.72,207.76 L942.47,206.13 L942.23,204.51 L941.98,202.88 L941.73,201.25 L941.47,199.63 L941.22,198.00 L940.95,196.37 L940.69,194.75 L940.42,193.12 L940.15,191.49 L939.88,189.87 L939.61,188.24 L939.33,186.61 L939.05,184.99 L938.77,183.36 L938.48,181.74 L938.19,180.11 L937.90,178.48 L937.60,176.86 L937.31,175.23 L937.01,173.60 L936.70,171.98 L936.40,170.35 L936.09,168.72 L935.78,167.10 L935.47,165.47 L935.15,163.84 L934.84,162.22 L934.52,160.59 L934.19,158.96 L933.87,157.34 L933.54,155.71 L933.21,154.08 L932.88,152.46 L932.54,150.83 L932.21,149.20 L931.87,147.58 L931.53,145.95 L931.18,144.32 L930.84,142.70 L930.49,141.07 L930.14,139.44 L929.79,137.82 L929.43,136.19 L929.08,134.56 L928.72,132.94 L928.36,131.31 L928.00,129.68 L927.63,128.06 L927.27,126.43 L926.90,124.80 L926.53,123.18 L926.16,121.55 L925.79,119.92 L925.41,118.30 L925.03,116.67 L924.65,115.04 L924.27,113.42 L923.89,111.79 L923.51,110.16 L923.12,108.54 L922.74,106.91 L922.35,105.28 L921.96,103.66 L921.57,102.03 L921.17,100.40 L920.78,98.78 L920.39,97.15 L919.99,95.52 L919.59,93.90 L919.19,92.27 L918.79,90.64 L918.39,89.02 L917.98,87.39 L917.58,85.76 L917.17,84.14 L916.77,82.51 L916.36,80.88 L915.95,79.26 L915.54,77.63 L915.13,76.00 L914.72,74.38 L914.31,72.75 L913.89,71.12 L913.48,69.50 L913.06,67.87 L912.65,66.24 L912.23,64.62 L911.81,62.99 L911.39,61.36 L910.97,59.74 L910.55,58.11 L910.13,56.48 L909.71,54.86 L909.29,53.23 L908.87,51.60 L908.45,49.98 L908.02,48.35 L907.60,46.72 L907.18,45.10 L906.75,43.47 L906.33,41.84 L905.90,40.22 L905.48,38.59 L905.05,36.96 L904.63,35.34 L904.20,33.71 L903.78,32.08 L903.35,30.46 L902.93,28.83 L902.50,27.20"/><path d="M902.50,612.80 L902.50,611.17 L902.50,609.54 L902.50,607.92 L902.50,606.29 L902.50,604.66 L902.50,603.04 L902.50,601.41 L902.50,599.78 L902.50,598.16 L902.50,596.53 L902.50,594.90 L902.50,593.28 L902.50,591.65 L902.50,590.02 L902.50,588.40 L902.50,586.77 L902.50,585.14 L902.50,583.52 L902.50,581.89 L902.50,580.26 L902.50,578.64 L902.50,577.01 L902.50,575.38 L902.50,573.76 L902.50,572.13 L902.50,570.50 L902.50,568.88 L902.50,567.25 L902.50,565.62 L902.50,564.00 L902.50,562.37 L902.50,560.74 L902.50,559.12 L902.50,557.49 L902.50,555.86 L902.50,554.24 L902.50,552.61 L902.50,550.98 L902.50,549.36 L902.50,547.73 L902.50,546.10 L902.50,544.48 L902.50,542.85 L902.50,541.22 L902.50,539.60 L902.50,537.97 L902.50,536.34 L902.50,534.72 L902.50,533.09 L902.50,531.46 L902.50,529.84 L902.50,528.21 L902.50,526.58 L902.50,524.96 L902.50,523.33 L902.50,521.70 L902.50,520.08 L902.50,518.45 L902.50,516.82 L902.50,515.20 L902.50,513.57 L902.50,511.94 L902.50,510.32 L902.50,508.69 L902.50,507.06 L902.50,505.44 L902.50,503.81 L902.50,502.18 L902.50,500.56 L902.50,498.93 L902.50,497.30 L902.50,495.68 L902.50,494.05 L902.50,492.42 L902.50,490.80 L902.50,489.17 L902.50,487.54 L902.50,485.92 L902.50,484.29 L902.50,482.66 L902.50,481.04 L902.50,479.41 L902.50,477.78 L902.50,476.16 L902.50,474.53 L902.50,472.90 L902.50,471.28 L902.50,469.65 L902.50,468.02 L902.50,466.40 L902.50,464.77 L902.50,463.14 L902.50,461.52 L902.50,459.89 L902.50,458.26 L902.50,456.64 L902.50,455.01 L902.50,453.39 L902.50,451.76 L902.50,450.13 L902.50,448.51 L902.50,446.88 L902.50,445.25 L902.50,443.63 L902.50,442.00 L902.50,440.37 L902.50,438.75 L902.50,437.12 L902.50,435.49 L902.50,433.87 L902.50,432.24 L902.50,430.61 L902.50,428.99 L902.50,427.36 L902.50,425.73 L902.50,424.11 L902.50,422.48 L902.50,420.85 L902.50,419.23 L902.50,417.60 L902.50,415.97 L902.50,414.35 L902.50,412.72 L902.50,411.09 L902.50,409.47 L902.50,407.84 L902.50,406.21 L902.50,404.59 L902.50,402.96 L902.50,401.33 L902.50,399.71 L902.50,398.08 L902.50,396.45 L902.50,394.83 L902.50,393.20 L902.50,391.57 L902.50,389.95 L902.50,388.32 L902.50,386.69 L902.50,385.07 L902.50,383.44 L902.50,381.81 L902.50,380.19 L902.50,378.56 L902.50,376.93 L902.50,375.31 L902.50,373.68 L902.50,372.05 L902.50,370.43 L902.50,368.80 L902.50,367.17 L902.50,365.55 L902.50,363.92 L902.50,362.29 L902.50,360.67 L902.50,359.04 L902.50,357.41 L902.50,355.79 L902.50,354.16 L902.50,352.53 L902.50,350.91 L902.50,349.28 L902.50,347.65 L902.50,346.03 L902.50,344.40 L902.50,342.77 L902.50,341.15 L902.50,339.52 L902.50,337.89 L902.50,336.27 L902.50,334.64 L902.50,333.01 L902.50,331.39 L902.50,329.76 L902.50,328.13 L902.50,326.51 L902.50,324.88 L902.50,323.25 L902.50,321.63 L902.50,320.00 L902.50,318.37 L902.50,316.75 L902.50,315.12 L902.50,313.49 L902.50,311.87 L902.50,310.24 L902.50,308.61 L902.50,306.99 L902.50,305.36 L902.50,303.73 L902.50,302.11 L902.50,300.48 L902.50,298.85 L902.50,297.23 L902.50,295.60 L902.50,293.97 L902.50,292.35 L902.50,290.72 L902.50,289.09 L902.50,287.47 L902.50,285.84 L902.50,284.21 L902.50,282.59 L902.50,280.96 L902.50,279.33 L902.50,277.71 L902.50,276.08 L902.50,274.45 L902.50,272.83 L902.50,271.20 L902.50,269.57 L902.50,267.95 L902.50,266.32 L902.50,264.69 L902.50,263.07 L902.50,261.44 L902.50,259.81 L902.50,258.19 L902.50,256.56 L902.50,254.93 L902.50,253.31 L902.50,251.68 L902.50,250.05 L902.50,248.43 L902.50,246.80 L902.50,245.17 L902.50,243.55 L902.50,241.92 L902.50,240.29 L902.50,238.67 L902.50,237.04 L902.50,235.41 L902.50,233.79 L902.50,232.16 L902.50,230.53 L902.50,228.91 L902.50,227.28 L902.50,225.65 L902.50,224.03 L902.50,222.40 L902.50,220.77 L902.50,219.15 L902.50,217.52 L902.50,215.89 L902.50,214.27 L902.50,212.64 L902.50,211.01 L902.50,209.39 L902.50,207.76 L902.50,206.13 L902.50,204.51 L902.50,202.88 L902.50,201.25 L902.50,199.63 L902.50,198.00 L902.50,196.37 L902.50,194.75 L902.50,193.12 L902.50,191.49 L902.50,189.87 L902.50,188.24 L902.50,186.61 L902.50,184.99 L902.50,183.36 L902.50,181.74 L902.50,180.11 L902.50,178.48 L902.50,176.86 L902.50,175.23 L902.50,173.60 L902.50,171.98 L902.50,170.35 L902.50,168.72 L902.50,167.10 L902.50,165.47 L902.50,163.84 L902.50,162.22 L902.50,160.59 L902.50,158.96 L902.50,157.34 L902.50,155.71 L902.50,154.08 L902.50,152.46 L902.50,150.83 L902.50,149.20 L902.50,147.58 L902.50,145.95 L902.50,144.32 L902.50,142.70 L902.50,141.07 L902.50,139.44 L902.50,137.82 L902.50,136.19 L902.50,134.56 L902.50,132.94 L902.50,131.31 L902.50,129.68 L902.50,128.06 L902.50,126.43 L902.50,124.80 L902.50,123.18 L902.50,121.55 L902.50,119.92 L902.50,118.30 L902.50,116.67 L902.50,115.04 L902.50,113.42 L902.50,111.79 L902.50,110.16 L902.50,108.54 L902.50,106.91 L902.50,105.28 L902.50,103.66 L902.50,102.03 L902.50,100.40 L902.50,98.78 L902.50,97.15 L902.50,95.52 L902.50,93.90 L902.50,92.27 L902.50,90.64 L902.50,89.02 L902.50,87.39 L902.50,85.76 L902.50,84.14 L902.50,82.51 L902.50,80.88 L902.50,79.26 L902.50,77.63 L902.50,76.00 L902.50,74.38 L902.50,72.75 L902.50,71.12 L902.50,69.50 L902.50,67.87 L902.50,66.24 L902.50,64.62 L902.50,62.99 L902.50,61.36 L902.50,59.74 L902.50,58.11 L902.50,56.48 L902.50,54.86 L902.50,53.23 L902.50,51.60 L902.50,49.98 L902.50,48.35 L902.50,46.72 L902.50,45.10 L902.50,43.47 L902.50,41.84 L902.50,40.22 L902.50,38.59 L902.50,36.96 L902.50,35.34 L902.50,33.71 L902.50,32.08 L902.50,30.46 L902.50,28.83 L902.50,27.20"/><path d="M902.50,612.80 L902.07,611.17 L901.65,609.54 L901.22,607.92 L900.80,606.29 L900.37,604.66 L899.95,603.04 L899.52,601.41 L899.10,599.78 L898.67,598.16 L898.25,596.53 L897.82,594.90 L897.40,593.28 L896.98,591.65 L896.55,590.02 L896.13,588.40 L895.71,586.77 L895.29,585.14 L894.87,583.52 L894.45,581.89 L894.03,580.26 L893.61,578.64 L893.19,577.01 L892.77,575.38 L892.35,573.76 L891.94,572.13 L891.52,570.50 L891.11,568.88 L890.69,567.25 L890.28,565.62 L889.87,564.00 L889.46,562.37 L889.05,560.74 L888.64,559.12 L888.23,557.49 L887.83,555.86 L887.42,554.24 L887.02,552.61 L886.61,550.98 L886.21,549.36 L885.81,547.73 L885.41,546.10 L885.01,544.48 L884.61,542.85 L884.22,541.22 L883.83,539.60 L883.43,537.97 L883.04,536.34 L882.65,534.72 L882.26,533.09 L881.88,531.46 L881.49,529.84 L881.11,528.21 L880.73,526.58 L880.35,524.96 L879.97,523.33 L879.59,521.70 L879.21,520.08 L878.84,518.45 L878.47,516.82 L878.10,515.20 L877.73,513.57 L877.37,511.94 L877.00,510.32 L876.64,508.69 L876.28,507.06 L875.92,505.44 L875.57,503.81 L875.21,502.18 L874.86,500.56 L874.51,498.93 L874.16,497.30 L873.82,495.68 L873.47,494.05 L873.13,492.42 L872.79,490.80 L872.46,489.17 L872.12,487.54 L871.79,485.92 L871.46,484.29 L871.13,482.66 L870.81,481.04 L870.48,479.41 L870.16,477.78 L869.85,476.16 L869.53,474.53 L869.22,472.90 L868.91,471.28 L868.60,469.65 L868.30,468.02 L867.99,466.40 L867.69,464.77 L867.40,463.14 L867.10,461.52 L866.81,459.89 L866.52,458.26 L866.23,456.64 L865.95,455.01 L865.67,453.39 L865.39,451.76 L865.12,450.13 L864.85,448.51 L864.58,446.88 L864.31,445.25 L864.05,443.63 L863.78,442.00 L863.53,440.37 L863.27,438.75 L863.02,437.12 L862.77,435.49 L862.53,433.87 L862.28,432.24 L862.04,430.61 L861.81,428.99 L861.57,427.36 L861.34,425.73 L861.12,424.11 L860.89,422.48 L860.67,420.85 L860.45,419.23 L860.24,417.60 L860.03,415.97 L859.82,414.35 L859.61,412.72 L859.41,411.09 L859.21,409.47 L859.02,407.84 L858.83,406.21 L858.64,404.59 L858.45,402.96 L858.27,401.33 L858.09,399.71 L857.92,398.08 L857.75,396.45 L857.58,394.83 L857.42,393.20 L857.25,391.57 L857.10,389.95 L856.94,388.32 L856.79,386.69 L856.64,385.07 L856.50,383.44 L856.36,381.81 L856.22,380.19 L856.09,378.56 L855.96,376.93 L855.83,375.31 L855.71,373.68 L855.59,372.05 L855.48,370.43 L855.36,368.80 L855.25,367.17 L855.15,365.55 L855.05,363.92 L854.95,362.29 L854.86,360.67 L854.77,359.04 L854.68,357.41 L854.60,355.79 L854.52,354.16 L854.44,352.53 L854.37,350.91 L854.30,349.28 L854.24,347.65 L854.18,346.03 L854.12,344.40 L854.06,342.77 L854.01,341.15 L853.97,339.52 L853.93,337.89 L853.89,336.27 L853.85,334.64 L853.82,333.01 L853.79,331.39 L853.77,329.76 L853.75,328.13 L853.73,326.51 L853.72,324.88 L853.71,323.25 L853.70,321.63 L853.70,320.00 L853.70,318.37 L853.71,316.75 L853.72,315.12 L853.73,313.49 L853.75,311.87 L853.77,310.24 L853.79,308.61 L853.82,306.99 L853.85,305.36 L853.89,303.73 L853.93,302.11 L853.97,300.48 L854.01,298.85 L854.06,297.23 L854.12,295.60 L854.18,293.97 L854.24,292.35 L854.30,290.72 L854.37,289.09 L854.44,287.47 L854.52,285.84 L854.60,284.21 L854.68,282.59 L854.77,280.96 L854.86,279.33 L854.95,277.71 L855.05,276.08 L855.15,274.45 L855.25,272.83 L855.36,271.20 L855.48,269.57 L855.59,267.95 L855.71,266.32 L855.83,264.69 L855.96,263.07 L856.09,261.44 L856.22,259.81 L856.36,258.19 L856.50,256.56 L856.64,254.93 L856.79,253.31 L856.94,251.68 L857.10,250.05 L857.25,248.43 L857.42,246.80 L857.58,245.17 L857.75,243.55 L857.92,241.92 L858.09,240.29 L858.27,238.67 L858.45,237.04 L858.64,235.41 L858.83,233.79 L859.02,232.16 L859.21,230.53 L859.41,228.91 L859.61,227.28 L859.82,225.65 L860.03,224.03 L860.24,222.40 L860.45,220.77 L860.67,219.15 L860.89,217.52 L861.12,215.89 L861.34,214.27 L861.57,212.64 L861.81,211.01 L862.04,209.39 L862.28,207.76 L862.53,206.13 L862.77,204.51 L863.02,202.88 L863.27,201.25 L863.53,199.63 L863.78,198.00 L864.05,196.37 L864.31,194.75 L864.58,193.12 L864.85,191.49 L865.12,189.87 L865.39,188.24 L865.67,186.61 L865.95,184.99 L866.23,183.36 L866.52,181.74 L866.81,180.11 L867.10,178.48 L867.40,176.86 L867.69,175.23 L867.99,173.60 L868.30,171.98 L868.60,170.35 L868.91,168.72 L869.22,167.10 L869.53,165.47 L869.85,163.84 L870.16,162.22 L870.48,160.59 L870.81,158.96 L871.13,157.34 L871.46,155.71 L871.79,154.08 L872.12,152.46 L872.46,150.83 L872.79,149.20 L873.13,147.58 L873.47,145.95 L873.82,144.32 L874.16,142.70 L874.51,141.07 L874.86,139.44 L875.21,137.82 L875.57,136.19 L875.92,134.56 L876.28,132.94 L876.64,131.31 L877.00,129.68 L877.37,128.06 L877.73,126.43 L878.10,124.80 L878.47,123.18 L878.84,121.55 L879.21,119.92 L879.59,118.30 L879.97,116.67 L880.35,115.04 L880.73,113.42 L881.11,111.79 L881.49,110.16 L881.88,108.54 L882.26,106.91 L882.65,105.28 L883.04,103.66 L883.43,102.03 L883.83,100.40 L884.22,98.78 L884.61,97.15 L885.01,95.52 L885.41,93.90 L885.81,92.27 L886.21,90.64 L886.61,89.02 L887.02,87.39 L887.42,85.76 L887.83,84.14 L888.23,82.51 L888.64,80.88 L889.05,79.26 L889.46,77.63 L889.87,76.00 L890.28,74.38 L890.69,72.75 L891.11,71.12 L891.52,69.50 L891.94,67.87 L892.35,66.24 L892.77,64.62 L893.19,62.99 L893.61,61.36 L894.03,59.74 L894.45,58.11 L894.87,56.48 L895.29,54.86 L895.71,53.23 L896.13,51.60 L896.55,49.98 L896.98,48.35 L897.40,46.72 L897.82,45.10 L898.25,43.47 L898.67,41.84 L899.10,40.22 L899.52,38.59 L899.95,36.96 L900.37,35.34 L900.80,33.71 L901.22,32.08 L901.65,30.46 L902.07,28.83 L902.50,27.20"/><path d="M902.50,612.80 L901.65,611.17 L900.80,609.54 L899.95,607.92 L899.09,606.29 L898.24,604.66 L897.39,603.04 L896.54,601.41 L895.69,599.78 L894.84,598.16 L893.99,596.53 L893.15,594.90 L892.30,593.28 L891.45,591.65 L890.61,590.02 L889.76,588.40 L888.92,586.77 L888.07,585.14 L887.23,583.52 L886.39,581.89 L885.55,580.26 L884.71,578.64 L883.88,577.01 L883.04,575.38 L882.21,573.76 L881.38,572.13 L880.55,570.50 L879.72,568.88 L878.89,567.25 L878.06,565.62 L877.24,564.00 L876.42,562.37 L875.60,560.74 L874.78,559.12 L873.96,557.49 L873.15,555.86 L872.34,554.24 L871.53,552.61 L870.72,550.98 L869.92,549.36 L869.12,547.73 L868.32,546.10 L867.52,544.48 L866.73,542.85 L865.94,541.22 L865.15,539.60 L864.37,537.97 L863.58,536.34 L862.80,534.72 L862.03,533.09 L861.25,531.46 L860.48,529.84 L859.72,528.21 L858.95,526.58 L858.19,524.96 L857.43,523.33 L856.68,521.70 L855.93,520.08 L855.18,518.45 L854.44,516.82 L853.70,515.20 L852.96,513.57 L852.23,511.94 L851.50,510.32 L850.78,508.69 L850.06,507.06 L849.34,505.44 L848.63,503.81 L847.92,502.18 L847.22,500.56 L846.52,498.93 L845.82,497.30 L845.13,495.68 L844.45,494.05 L843.76,492.42 L843.09,490.80 L842.41,489.17 L841.74,487.54 L841.08,485.92 L840.42,484.29 L839.76,482.66 L839.11,481.04 L838.47,479.41 L837.83,477.78 L837.19,476.16 L836.56,474.53 L835.94,472.90 L835.32,471.28 L834.70,469.65 L834.09,468.02 L833.49,466.40 L832.89,464.77 L832.29,463.14 L831.70,461.52 L831.12,459.89 L830.54,458.26 L829.97,456.64 L829.40,455.01 L828.84,453.39 L828.29,451.76 L827.73,450.13 L827.19,448.51 L826.65,446.88 L826.12,445.25 L825.59,443.63 L825.07,442.00 L824.55,440.37 L824.04,438.75 L823.54,437.12 L823.04,435.49 L822.55,433.87 L822.07,432.24 L821.59,430.61 L821.11,428.99 L820.65,427.36 L820.19,425.73 L819.73,424.11 L819.28,422.48 L818.84,420.85 L818.41,419.23 L817.98,417.60 L817.55,415.97 L817.14,414.35 L816.73,412.72 L816.33,411.09 L815.93,409.47 L815.54,407.84 L815.16,406.21 L814.78,404.59 L814.41,402.96 L814.05,401.33 L813.69,399.71 L813.34,398.08 L813.00,396.45 L812.66,394.83 L812.33,393.20 L812.01,391.57 L811.69,389.95 L811.38,388.32 L811.08,386.69 L810.79,385.07 L810.50,383.44 L810.22,381.81 L809.94,380.19 L809.68,378.56 L809.42,376.93 L809.17,375.31 L808.92,373.68 L808.68,372.05 L808.45,370.43 L808.23,368.80 L808.01,367.17 L807.80,365.55 L807.60,363.92 L807.40,362.29 L807.21,360.67 L807.03,359.04 L806.86,357.41 L806.69,355.79 L806.54,354.16 L806.38,352.53 L806.24,350.91 L806.10,349.28 L805.97,347.65 L805.85,346.03 L805.74,344.40 L805.63,342.77 L805.53,341.15 L805.44,339.52 L805.35,337.89 L805.27,336.27 L805.20,334.64 L805.14,333.01 L805.08,331.39 L805.03,329.76 L804.99,328.13 L804.96,326.51 L804.93,324.88 L804.92,323.25 L804.90,321.63 L804.90,320.00 L804.90,318.37 L804.92,316.75 L804.93,315.12 L804.96,313.49 L804.99,311.87 L805.03,310.24 L805.08,308.61 L805.14,306.99 L805.20,305.36 L805.27,303.73 L805.35,302.11 L805.44,300.48 L805.53,298.85 L805.63,297.23 L805.74,295.60 L805.85,293.97 L805.97,292.35 L806.10,290.72 L806.24,289.09 L806.38,287.47 L806.54,285.84 L806.69,284.21 L806.86,282.59 L807.03,280.96 L807.21,279.33 L807.40,277.71 L807.60,276.08 L807.80,274.45 L808.01,272.83 L808.23,271.20 L808.45,269.57 L808.68,267.95 L808.92,266.32 L809.17,264.69 L809.42,263.07 L809.68,261.44 L809.94,259.81 L810.22,258.19 L810.50,256.56 L810.79,254.93 L811.08,253.31 L811.38,251.68 L811.69,250.05 L812.01,248.43 L812.33,246.80 L812.66,245.17 L813.00,243.55 L813.34,241.92 L813.69,240.29 L814.05,238.67 L814.41,237.04 L814.78,235.41 L815.16,233.79 L815.54,232.16 L815.93,230.53 L816.33,228.91 L816.73,227.28 L817.14,225.65 L817.55,224.03 L817.98,222.40 L818.41,220.77 L818.84,219.15 L819.28,217.52 L819.73,215.89 L820.19,214.27 L820.65,212.64 L821.11,211.01 L821.59,209.39 L822.07,207.76 L822.55,206.13 L823.04,204.51 L823.54,202.88 L824.04,201.25 L824.55,199.63 L825.07,198.00 L825.59,196.37 L826.12,194.75 L826.65,193.12 L827.19,191.49 L827.73,189.87 L828.29,188.24 L828.84,186.61 L829.40,184.99 L829.97,183.36 L830.54,181.74 L831.12,180.11 L831.70,178.48 L832.29,176.86 L832.89,175.23 L833.49,173.60 L834.09,171.98 L834.70,170.35 L835.32,168.72 L835.94,167.10 L836.56,165.47 L837.19,163.84 L837.83,162.22 L838.47,160.59 L839.11,158.96 L839.76,157.34 L840.42,155.71 L841.08,154.08 L841.74,152.46 L842.41,150.83 L843.09,149.20 L843.76,147.58 L844.45,145.95 L845.13,144.32 L845.82,142.70 L846.52,141.07 L847.22,139.44 L847.92,137.82 L848.63,136.19 L849.34,134.56 L850.06,132.94 L850.78,131.31 L851.50,129.68 L852.23,128.06 L852.96,126.43 L853.70,124.80 L854.44,123.18 L855.18,121.55 L855.93,119.92 L856.68,118.30 L857.43,116.67 L858.19,115.04 L858.95,113.42 L859.72,111.79 L860.48,110.16 L861.25,108.54 L862.03,106.91 L862.80,105.28 L863.58,103.66 L864.37,102.03 L865.15,100.40 L865.94,98.78 L866.73,97.15 L867.52,95.52 L868.32,93.90 L869.12,92.27 L869.92,90.64 L870.72,89.02 L871.53,87.39 L872.34,85.76 L873.15,84.14 L873.96,82.51 L874.78,80.88 L875.60,79.26 L876.42,77.63 L877.24,76.00 L878.06,74.38 L878.89,72.75 L879.72,71.12 L880.55,69.50 L881.38,67.87 L882.21,66.24 L883.04,64.62 L883.88,62.99 L884.71,61.36 L885.55,59.74 L886.39,58.11 L887.23,56.48 L888.07,54.86 L888.92,53.23 L889.76,51.60 L890.61,49.98 L891.45,48.35 L892.30,46.72 L893.15,45.10 L893.99,43.47 L894.84,41.84 L895.69,40.22 L896.54,38.59 L897.39,36.96 L898.24,35.34 L899.09,33.71 L899.95,32.08 L900.80,30.46 L901.65,28.83 L902.50,27.20"/><path d="M902.50,612.80 L901.22,611.17 L899.94,609.54 L898.67,607.92 L897.39,606.29 L896.11,604.66 L894.84,603.04 L893.56,601.41 L892.29,599.78 L891.01,598.16 L889.74,596.53 L888.47,594.90 L887.20,593.28 L885.93,591.65 L884.66,590.02 L883.39,588.40 L882.13,586.77 L880.86,585.14 L879.60,583.52 L878.34,581.89 L877.08,580.26 L875.82,578.64 L874.57,577.01 L873.31,575.38 L872.06,573.76 L870.81,572.13 L869.57,570.50 L868.32,568.88 L867.08,567.25 L865.84,565.62 L864.61,564.00 L863.38,562.37 L862.15,560.74 L860.92,559.12 L859.70,557.49 L858.48,555.86 L857.26,554.24 L856.05,552.61 L854.84,550.98 L853.63,549.36 L852.43,547.73 L851.23,546.10 L850.04,544.48 L848.84,542.85 L847.66,541.22 L846.48,539.60 L845.30,537.97 L844.12,536.34 L842.95,534.72 L841.79,533.09 L840.63,531.46 L839.47,529.84 L838.32,528.21 L837.18,526.58 L836.04,524.96 L834.90,523.33 L833.77,521.70 L832.64,520.08 L831.52,518.45 L830.41,516.82 L829.30,515.20 L828.20,513.57 L827.10,511.94 L826.01,510.32 L824.92,508.69 L823.84,507.06 L822.77,505.44 L821.70,503.81 L820.64,502.18 L819.58,500.56 L818.53,498.93 L817.49,497.30 L816.45,495.68 L815.42,494.05 L814.40,492.42 L813.38,490.80 L812.37,489.17 L811.36,487.54 L810.37,485.92 L809.38,484.29 L808.40,482.66 L807.42,481.04 L806.45,479.41 L805.49,477.78 L804.54,476.16 L803.59,474.53 L802.66,472.90 L801.73,471.28 L800.80,469.65 L799.89,468.02 L798.98,466.40 L798.08,464.77 L797.19,463.14 L796.31,461.52 L795.43,459.89 L794.56,458.26 L793.70,456.64 L792.85,455.01 L792.01,453.39 L791.18,451.76 L790.35,450.13 L789.54,448.51 L788.73,446.88 L787.93,445.25 L787.14,443.63 L786.35,442.00 L785.58,440.37 L784.82,438.75 L784.06,437.12 L783.31,435.49 L782.58,433.87 L781.85,432.24 L781.13,430.61 L780.42,428.99 L779.72,427.36 L779.03,425.73 L778.35,424.11 L777.67,422.48 L777.01,420.85 L776.36,419.23 L775.72,417.60 L775.08,415.97 L774.46,414.35 L773.84,412.72 L773.24,411.09 L772.64,409.47 L772.06,407.84 L771.48,406.21 L770.92,404.59 L770.36,402.96 L769.82,401.33 L769.28,399.71 L768.76,398.08 L768.24,396.45 L767.74,394.83 L767.25,393.20 L766.76,391.57 L766.29,389.95 L765.83,388.32 L765.37,386.69 L764.93,385.07 L764.50,383.44 L764.08,381.81 L763.67,380.19 L763.27,378.56 L762.88,376.93 L762.50,375.31 L762.13,373.68 L761.77,372.05 L761.43,370.43 L761.09,368.80 L760.76,367.17 L760.45,365.55 L760.15,363.92 L759.85,362.29 L759.57,360.67 L759.30,359.04 L759.04,357.41 L758.79,355.79 L758.55,354.16 L758.33,352.53 L758.11,350.91 L757.90,349.28 L757.71,347.65 L757.53,346.03 L757.35,344.40 L757.19,342.77 L757.04,341.15 L756.90,339.52 L756.78,337.89 L756.66,336.27 L756.55,334.64 L756.46,333.01 L756.37,331.39 L756.30,329.76 L756.24,328.13 L756.19,326.51 L756.15,324.88 L756.12,323.25 L756.11,321.63 L756.10,320.00 L756.11,318.37 L756.12,316.75 L756.15,315.12 L756.19,313.49 L756.24,311.87 L756.30,310.24 L756.37,308.61 L756.46,306.99 L756.55,305.36 L756.66,303.73 L756.78,302.11 L756.90,300.48 L757.04,298.85 L757.19,297.23 L757.35,295.60 L757.53,293.97 L757.71,292.35 L757.90,290.72 L758.11,289.09 L758.33,287.47 L758.55,285.84 L758.79,284.21 L759.04,282.59 L759.30,280.96 L759.57,279.33 L759.85,277.71 L760.15,276.08 L760.45,274.45 L760.76,272.83 L761.09,271.20 L761.43,269.57 L761.77,267.95 L762.13,266.32 L762.50,264.69 L762.88,263.07 L763.27,261.44 L763.67,259.81 L764.08,258.19 L764.50,256.56 L764.93,254.93 L765.37,253.31 L765.83,251.68 L766.29,250.05 L766.76,248.43 L767.25,246.80 L767.74,245.17 L768.24,243.55 L768.76,241.92 L769.28,240.29 L769.82,238.67 L770.36,237.04 L770.92,235.41 L771.48,233.79 L772.06,232.16 L772.64,230.53 L773.24,228.91 L773.84,227.28 L774.46,225.65 L775.08,224.03 L775.72,222.40 L776.36,220.77 L777.01,219.15 L777.67,217.52 L778.35,215.89 L779.03,214.27 L779.72,212.64 L780.42,211.01 L781.13,209.39 L781.85,207.76 L782.58,206.13 L783.31,204.51 L784.06,202.88 L784.82,201.25 L785.58,199.63 L786.35,198.00 L787.14,196.37 L787.93,194.75 L788.73,193.12 L789.54,191.49 L790.35,189.87 L791.18,188.24 L792.01,186.61 L792.85,184.99 L793.70,183.36 L794.56,181.74 L795.43,180.11 L796.31,178.48 L797.19,176.86 L798.08,175.23 L798.98,173.60 L799.89,171.98 L800.80,170.35 L801.73,168.72 L802.66,167.10 L803.59,165.47 L804.54,163.84 L805.49,162.22 L806.45,160.59 L807.42,158.96 L808.40,157.34 L809.38,155.71 L810.37,154.08 L811.36,152.46 L812.37,150.83 L813.38,149.20 L814.40,147.58 L815.42,145.95 L816.45,144.32 L817.49,142.70 L818.53,141.07 L819.58,139.44 L820.64,137.82 L821.70,136.19 L822.77,134.56 L823.84,132.94 L824.92,131.31 L826.01,129.68 L827.10,128.06 L828.20,126.43 L829.30,124.80 L830.41,123.18 L831.52,121.55 L832.64,119.92 L833.77,118.30 L834.90,116.67 L836.04,115.04 L837.18,113.42 L838.32,111.79 L839.47,110.16 L840.63,108.54 L841.79,106.91 L842.95,105.28 L844.12,103.66 L845.30,102.03 L846.48,100.40 L847.66,98.78 L848.84,97.15 L850.04,95.52 L851.23,93.90 L852.43,92.27 L853.63,90.64 L854.84,89.02 L856.05,87.39 L857.26,85.76 L858.48,84.14 L859.70,82.51 L860.92,80.88 L862.15,79.26 L863.38,77.63 L864.61,76.00 L865.84,74.38 L867.08,72.75 L868.32,71.12 L869.57,69.50 L870.81,67.87 L872.06,66.24 L873.31,64.62 L874.57,62.99 L875.82,61.36 L877.08,59.74 L878.34,58.11 L879.60,56.48 L880.86,54.86 L882.13,53.23 L883.39,51.60 L884.66,49.98 L885.93,48.35 L887.20,46.72 L888.47,45.10 L889.74,43.47 L891.01,41.84 L892.29,40.22 L893.56,38.59 L894.84,36.96 L896.11,35.34 L897.39,33.71 L898.67,32.08 L899.94,30.46 L901.22,28.83 L902.50,27.20"/><path d="M902.50,612.80 L900.80,611.17 L899.09,609.54 L897.39,607.92 L895.69,606.29 L893.99,604.66 L892.28,603.04 L890.58,601.41 L888.88,599.78 L887.18,598.16 L885.49,596.53 L883.79,594.90 L882.10,593.28 L880.40,591.65 L878.71,590.02 L877.02,588.40 L875.33,586.77 L873.65,585.14 L871.96,583.52 L870.28,581.89 L868.60,580.26 L866.93,578.64 L865.25,577.01 L863.58,575.38 L861.92,573.76 L860.25,572.13 L858.59,570.50 L856.93,568.88 L855.28,567.25 L853.63,565.62 L851.98,564.00 L850.34,562.37 L848.70,560.74 L847.06,559.12 L845.43,557.49 L843.80,555.86 L842.18,554.24 L840.56,552.61 L838.95,550.98 L837.34,549.36 L835.74,547.73 L834.14,546.10 L832.55,544.48 L830.96,542.85 L829.38,541.22 L827.80,539.60 L826.23,537.97 L824.67,536.34 L823.11,534.72 L821.55,533.09 L820.01,531.46 L818.47,529.84 L816.93,528.21 L815.40,526.58 L813.88,524.96 L812.37,523.33 L810.86,521.70 L809.36,520.08 L807.87,518.45 L806.38,516.82 L804.90,515.20 L803.43,513.57 L801.97,511.94 L800.51,510.32 L799.06,508.69 L797.62,507.06 L796.19,505.44 L794.76,503.81 L793.35,502.18 L791.94,500.56 L790.54,498.93 L789.15,497.30 L787.77,495.68 L786.39,494.05 L785.03,492.42 L783.67,490.80 L782.32,489.17 L780.99,487.54 L779.66,485.92 L778.34,484.29 L777.03,482.66 L775.73,481.04 L774.44,479.41 L773.16,477.78 L771.89,476.16 L770.63,474.53 L769.38,472.90 L768.13,471.28 L766.90,469.65 L765.68,468.02 L764.47,466.40 L763.28,464.77 L762.09,463.14 L760.91,461.52 L759.74,459.89 L758.59,458.26 L757.44,456.64 L756.31,455.01 L755.18,453.39 L754.07,451.76 L752.97,450.13 L751.88,448.51 L750.80,446.88 L749.74,445.25 L748.68,443.63 L747.64,442.00 L746.61,440.37 L745.59,438.75 L744.58,437.12 L743.59,435.49 L742.60,433.87 L741.63,432.24 L740.67,430.61 L739.73,428.99 L738.79,427.36 L737.87,425.73 L736.96,424.11 L736.07,422.48 L735.18,420.85 L734.31,419.23 L733.45,417.60 L732.61,415.97 L731.78,414.35 L730.96,412.72 L730.15,411.09 L729.36,409.47 L728.58,407.84 L727.81,406.21 L727.06,404.59 L726.32,402.96 L725.59,401.33 L724.88,399.71 L724.18,398.08 L723.49,396.45 L722.82,394.83 L722.16,393.20 L721.52,391.57 L720.88,389.95 L720.27,388.32 L719.66,386.69 L719.07,385.07 L718.50,383.44 L717.94,381.81 L717.39,380.19 L716.86,378.56 L716.34,376.93 L715.83,375.31 L715.34,373.68 L714.86,372.05 L714.40,370.43 L713.95,368.80 L713.52,367.17 L713.10,365.55 L712.70,363.92 L712.31,362.29 L711.93,360.67 L711.57,359.04 L711.22,357.41 L710.89,355.79 L710.57,354.16 L710.27,352.53 L709.98,350.91 L709.71,349.28 L709.45,347.65 L709.20,346.03 L708.97,344.40 L708.76,342.77 L708.56,341.15 L708.37,339.52 L708.20,337.89 L708.05,336.27 L707.90,334.64 L707.78,333.01 L707.67,331.39 L707.57,329.76 L707.49,328.13 L707.42,326.51 L707.37,324.88 L707.33,323.25 L707.31,321.63 L707.30,320.00 L707.31,318.37 L707.33,316.75 L707.37,315.12 L707.42,313.49 L707.49,311.87 L707.57,310.24 L707.67,308.61 L707.78,306.99 L707.90,305.36 L708.05,303.73 L708.20,302.11 L708.37,300.48 L708.56,298.85 L708.76,297.23 L708.97,295.60 L709.20,293.97 L709.45,292.35 L709.71,290.72 L709.98,289.09 L710.27,287.47 L710.57,285.84 L710.89,284.21 L711.22,282.59 L711.57,280.96 L711.93,279.33 L712.31,277.71 L712.70,276.08 L713.10,274.45 L713.52,272.83 L713.95,271.20 L714.40,269.57 L714.86,267.95 L715.34,266.32 L715.83,264.69 L716.34,263.07 L716.86,261.44 L717.39,259.81 L717.94,258.19 L718.50,256.56 L719.07,254.93 L719.66,253.31 L720.27,251.68 L720.88,250.05 L721.52,248.43 L722.16,246.80 L722.82,245.17 L723.49,243.55 L724.18,241.92 L724.88,240.29 L725.59,238.67 L726.32,237.04 L727.06,235.41 L727.81,233.79 L728.58,232.16 L729.36,230.53 L730.15,228.91 L730.96,227.28 L731.78,225.65 L732.61,224.03 L733.45,222.40 L734.31,220.77 L735.18,219.15 L736.07,217.52 L736.96,215.89 L737.87,214.27 L738.79,212.64 L739.73,211.01 L740.67,209.39 L741.63,207.76 L742.60,206.13 L743.59,204.51 L744.58,202.88 L745.59,201.25 L746.61,199.63 L747.64,198.00 L748.68,196.37 L749.74,194.75 L750.80,193.12 L751.88,191.49 L752.97,189.87 L754.07,188.24 L755.18,186.61 L756.31,184.99 L757.44,183.36 L758.59,181.74 L759.74,180.11 L760.91,178.48 L762.09,176.86 L763.28,175.23 L764.47,173.60 L765.68,171.98 L766.90,170.35 L768.13,168.72 L769.38,167.10 L770.63,165.47 L771.89,163.84 L773.16,162.22 L774.44,160.59 L775.73,158.96 L777.03,157.34 L778.34,155.71 L779.66,154.08 L780.99,152.46 L782.32,150.83 L783.67,149.20 L785.03,147.58 L786.39,145.95 L787.77,144.32 L789.15,142.70 L790.54,141.07 L791.94,139.44 L793.35,137.82 L794.76,136.19 L796.19,134.56 L797.62,132.94 L799.06,131.31 L800.51,129.68 L801.97,128.06 L803.43,126.43 L804.90,124.80 L806.38,123.18 L807.87,121.55 L809.36,119.92 L810.86,118.30 L812.37,116.67 L813.88,115.04 L815.40,113.42 L816.93,111.79 L818.47,110.16 L820.01,108.54 L821.55,106.91 L823.11,105.28 L824.67,103.66 L826.23,102.03 L827.80,100.40 L829.38,98.78 L830.96,97.15 L832.55,95.52 L834.14,93.90 L835.74,92.27 L837.34,90.64 L838.95,89.02 L840.56,87.39 L842.18,85.76 L843.80,84.14 L845.43,82.51 L847.06,80.88 L848.70,79.26 L850.34,77.63 L851.98,76.00 L853.63,74.38 L855.28,72.75 L856.93,71.12 L858.59,69.50 L860.25,67.87 L861.92,66.24 L863.58,64.62 L865.25,62.99 L866.93,61.36 L868.60,59.74 L870.28,58.11 L871.96,56.48 L873.65,54.86 L875.33,53.23 L877.02,51.60 L878.71,49.98 L880.40,48.35 L882.10,46.72 L883.79,45.10 L885.49,43.47 L887.18,41.84 L888.88,40.22 L890.58,38.59 L892.28,36.96 L893.99,35.34 L895.69,33.71 L897.39,32.08 L899.09,30.46 L900.80,28.83 L902.50,27.20"/><path d="M902.50,612.80 L900.37,611.17 L898.24,609.54 L896.11,607.92 L893.98,606.29 L891.86,604.66 L889.73,603.04 L887.60,601.41 L885.48,599.78 L883.36,598.16 L881.23,596.53 L879.11,594.90 L877.00,593.28 L874.88,591.65 L872.76,590.02 L870.65,588.40 L868.54,586.77 L866.43,585.14 L864.33,583.52 L862.23,581.89 L860.13,580.26 L858.04,578.64 L855.94,577.01 L853.85,575.38 L851.77,573.76 L849.69,572.13 L847.61,570.50 L845.54,568.88 L843.47,567.25 L841.41,565.62 L839.35,564.00 L837.29,562.37 L835.25,560.74 L833.20,559.12 L831.16,557.49 L829.13,555.86 L827.10,554.24 L825.08,552.61 L823.06,550.98 L821.05,549.36 L819.05,547.73 L817.05,546.10 L815.06,544.48 L813.07,542.85 L811.10,541.22 L809.13,539.60 L807.16,537.97 L805.21,536.34 L803.26,534.72 L801.32,533.09 L799.38,531.46 L797.46,529.84 L795.54,528.21 L793.63,526.58 L791.73,524.96 L789.83,523.33 L787.95,521.70 L786.07,520.08 L784.21,518.45 L782.35,516.82 L780.50,515.20 L778.66,513.57 L776.83,511.94 L775.01,510.32 L773.20,508.69 L771.40,507.06 L769.61,505.44 L767.83,503.81 L766.06,502.18 L764.30,500.56 L762.55,498.93 L760.81,497.30 L759.08,495.68 L757.37,494.05 L755.66,492.42 L753.96,490.80 L752.28,489.17 L750.61,487.54 L748.95,485.92 L747.30,484.29 L745.66,482.66 L744.04,481.04 L742.42,479.41 L740.82,477.78 L739.23,476.16 L737.66,474.53 L736.09,472.90 L734.54,471.28 L733.01,469.65 L731.48,468.02 L729.97,466.40 L728.47,464.77 L726.98,463.14 L725.51,461.52 L724.05,459.89 L722.61,458.26 L721.17,456.64 L719.76,455.01 L718.35,453.39 L716.96,451.76 L715.59,450.13 L714.23,448.51 L712.88,446.88 L711.55,445.25 L710.23,443.63 L708.92,442.00 L707.64,440.37 L706.36,438.75 L705.10,437.12 L703.86,435.49 L702.63,433.87 L701.42,432.24 L700.22,430.61 L699.03,428.99 L697.87,427.36 L696.71,425.73 L695.58,424.11 L694.46,422.48 L693.35,420.85 L692.27,419.23 L691.19,417.60 L690.14,415.97 L689.10,414.35 L688.07,412.72 L687.06,411.09 L686.07,409.47 L685.10,407.84 L684.14,406.21 L683.20,404.59 L682.27,402.96 L681.36,401.33 L680.47,399.71 L679.60,398.08 L678.74,396.45 L677.90,394.83 L677.08,393.20 L676.27,391.57 L675.48,389.95 L674.71,388.32 L673.95,386.69 L673.22,385.07 L672.50,383.44 L671.80,381.81 L671.11,380.19 L670.45,378.56 L669.80,376.93 L669.16,375.31 L668.55,373.68 L667.96,372.05 L667.38,370.43 L666.82,368.80 L666.27,367.17 L665.75,365.55 L665.24,363.92 L664.76,362.29 L664.29,360.67 L663.83,359.04 L663.40,357.41 L662.99,355.79 L662.59,354.16 L662.21,352.53 L661.85,350.91 L661.51,349.28 L661.18,347.65 L660.88,346.03 L660.59,344.40 L660.32,342.77 L660.07,341.15 L659.84,339.52 L659.63,337.89 L659.43,336.27 L659.26,334.64 L659.10,333.01 L658.96,331.39 L658.84,329.76 L658.74,328.13 L658.65,326.51 L658.59,324.88 L658.54,323.25 L658.51,321.63 L658.50,320.00 L658.51,318.37 L658.54,316.75 L658.59,315.12 L658.65,313.49 L658.74,311.87 L658.84,310.24 L658.96,308.61 L659.10,306.99 L659.26,305.36 L659.43,303.73 L659.63,302.11 L659.84,300.48 L660.07,298.85 L660.32,297.23 L660.59,295.60 L660.88,293.97 L661.18,292.35 L661.51,290.72 L661.85,289.09 L662.21,287.47 L662.59,285.84 L662.99,284.21 L663.40,282.59 L663.83,280.96 L664.29,279.33 L664.76,277.71 L665.24,276.08 L665.75,274.45 L666.27,272.83 L666.82,271.20 L667.38,269.57 L667.96,267.95 L668.55,266.32 L669.16,264.69 L669.80,263.07 L670.45,261.44 L671.11,259.81 L671.80,258.19 L672.50,256.56 L673.22,254.93 L673.95,253.31 L674.71,251.68 L675.48,250.05 L676.27,248.43 L677.08,246.80 L677.90,245.17 L678.74,243.55 L679.60,241.92 L680.47,240.29 L681.36,238.67 L682.27,237.04 L683.20,235.41 L684.14,233.79 L685.10,232.16 L686.07,230.53 L687.06,228.91 L688.07,227.28 L689.10,225.65 L690.14,224.03 L691.19,222.40 L692.27,220.77 L693.35,219.15 L694.46,217.52 L695.58,215.89 L696.71,214.27 L697.87,212.64 L699.03,211.01 L700.22,209.39 L701.42,207.76 L702.63,206.13 L703.86,204.51 L705.10,202.88 L706.36,201.25 L707.64,199.63 L708.92,198.00 L710.23,196.37 L711.55,194.75 L712.88,193.12 L714.23,191.49 L715.59,189.87 L716.96,188.24 L718.35,186.61 L719.76,184.99 L721.17,183.36 L722.61,181.74 L724.05,180.11 L725.51,178.48 L726.98,176.86 L728.47,175.23 L729.97,173.60 L731.48,171.98 L733.01,170.35 L734.54,168.72 L736.09,167.10 L737.66,165.47 L739.23,163.84 L740.82,162.22 L742.42,160.59 L744.04,158.96 L745.66,157.34 L747.30,155.71 L748.95,154.08 L750.61,152.46 L752.28,150.83 L753.96,149.20 L755.66,147.58 L757.37,145.95 L759.08,144.32 L760.81,142.70 L762.55,141.07 L764.30,139.44 L766.06,137.82 L767.83,136.19 L769.61,134.56 L771.40,132.94 L773.20,131.31 L775.01,129.68 L776.83,128.06 L778.66,126.43 L780.50,124.80 L782.35,123.18 L784.21,121.55 L786.07,119.92 L787.95,118.30 L789.83,116.67 L791.73,115.04 L793.63,113.42 L795.54,111.79 L797.46,110.16 L799.38,108.54 L801.32,106.91 L803.26,105.28 L805.21,103.66 L807.16,102.03 L809.13,100.40 L811.10,98.78 L813.07,97.15 L815.06,95.52 L817.05,93.90 L819.05,92.27 L821.05,90.64 L823.06,89.02 L825.08,87.39 L827.10,85.76 L829.13,84.14 L831.16,82.51 L833.20,80.88 L835.25,79.26 L837.29,77.63 L839.35,76.00 L841.41,74.38 L843.47,72.75 L845.54,71.12 L847.61,69.50 L849.69,67.87 L851.77,66.24 L853.85,64.62 L855.94,62.99 L858.04,61.36 L860.13,59.74 L862.23,58.11 L864.33,56.48 L866.43,54.86 L868.54,53.23 L870.65,51.60 L872.76,49.98 L874.88,48.35 L877.00,46.72 L879.11,45.10 L881.23,43.47 L883.36,41.84 L885.48,40.22 L887.60,38.59 L889.73,36.96 L891.86,35.34 L893.98,33.71 L896.11,32.08 L898.24,30.46 L900.37,28.83 L902.50,27.20"/><path d="M902.50,612.80 L899.94,611.17 L897.39,609.54 L894.84,607.92 L892.28,606.29 L889.73,604.66 L887.18,603.04 L884.63,601.41 L882.08,599.78 L879.53,598.16 L876.98,596.53 L874.44,594.90 L871.89,593.28 L869.35,591.65 L866.82,590.02 L864.28,588.40 L861.75,586.77 L859.22,585.14 L856.70,583.52 L854.17,581.89 L851.66,580.26 L849.14,578.64 L846.63,577.01 L844.13,575.38 L841.62,573.76 L839.13,572.13 L836.64,570.50 L834.15,568.88 L831.67,567.25 L829.19,565.62 L826.72,564.00 L824.25,562.37 L821.79,560.74 L819.34,559.12 L816.89,557.49 L814.45,555.86 L812.02,554.24 L809.59,552.61 L807.17,550.98 L804.76,549.36 L802.36,547.73 L799.96,546.10 L797.57,544.48 L795.19,542.85 L792.82,541.22 L790.45,539.60 L788.10,537.97 L785.75,536.34 L783.41,534.72 L781.08,533.09 L778.76,531.46 L776.45,529.84 L774.15,528.21 L771.85,526.58 L769.57,524.96 L767.30,523.33 L765.04,521.70 L762.79,520.08 L760.55,518.45 L758.32,516.82 L756.10,515.20 L753.89,513.57 L751.70,511.94 L749.51,510.32 L747.34,508.69 L745.18,507.06 L743.03,505.44 L740.89,503.81 L738.77,502.18 L736.66,500.56 L734.56,498.93 L732.47,497.30 L730.40,495.68 L728.34,494.05 L726.29,492.42 L724.26,490.80 L722.24,489.17 L720.23,487.54 L718.24,485.92 L716.26,484.29 L714.29,482.66 L712.34,481.04 L710.41,479.41 L708.49,477.78 L706.58,476.16 L704.69,474.53 L702.81,472.90 L700.95,471.28 L699.11,469.65 L697.28,468.02 L695.46,466.40 L693.66,464.77 L691.88,463.14 L690.11,461.52 L688.36,459.89 L686.63,458.26 L684.91,456.64 L683.21,455.01 L681.52,453.39 L679.86,451.76 L678.20,450.13 L676.57,448.51 L674.95,446.88 L673.36,445.25 L671.77,443.63 L670.21,442.00 L668.66,440.37 L667.13,438.75 L665.62,437.12 L664.13,435.49 L662.66,433.87 L661.20,432.24 L659.76,430.61 L658.34,428.99 L656.94,427.36 L655.56,425.73 L654.19,424.11 L652.85,422.48 L651.52,420.85 L650.22,419.23 L648.93,417.60 L647.66,415.97 L646.41,414.35 L645.19,412.72 L643.98,411.09 L642.79,409.47 L641.62,407.84 L640.47,406.21 L639.34,404.59 L638.23,402.96 L637.14,401.33 L636.07,399.71 L635.02,398.08 L633.99,396.45 L632.98,394.83 L631.99,393.20 L631.02,391.57 L630.08,389.95 L629.15,388.32 L628.25,386.69 L627.36,385.07 L626.50,383.44 L625.66,381.81 L624.83,380.19 L624.03,378.56 L623.26,376.93 L622.50,375.31 L621.76,373.68 L621.05,372.05 L620.35,370.43 L619.68,368.80 L619.03,367.17 L618.40,365.55 L617.79,363.92 L617.21,362.29 L616.64,360.67 L616.10,359.04 L615.58,357.41 L615.08,355.79 L614.61,354.16 L614.15,352.53 L613.72,350.91 L613.31,349.28 L612.92,347.65 L612.55,346.03 L612.21,344.40 L611.89,342.77 L611.59,341.15 L611.31,339.52 L611.05,337.89 L610.82,336.27 L610.61,334.64 L610.42,333.01 L610.25,331.39 L610.10,329.76 L609.98,328.13 L609.88,326.51 L609.80,324.88 L609.75,323.25 L609.71,321.63 L609.70,320.00 L609.71,318.37 L609.75,316.75 L609.80,315.12 L609.88,313.49 L609.98,311.87 L610.10,310.24 L610.25,308.61 L610.42,306.99 L610.61,305.36 L610.82,303.73 L611.05,302.11 L611.31,300.48 L611.59,298.85 L611.89,297.23 L612.21,295.60 L612.55,293.97 L612.92,292.35 L613.31,290.72 L613.72,289.09 L614.15,287.47 L614.61,285.84 L615.08,284.21 L615.58,282.59 L616.10,280.96 L616.64,279.33 L617.21,277.71 L617.79,276.08 L618.40,274.45 L619.03,272.83 L619.68,271.20 L620.35,269.57 L621.05,267.95 L621.76,266.32 L622.50,264.69 L623.26,263.07 L624.03,261.44 L624.83,259.81 L625.66,258.19 L626.50,256.56 L627.36,254.93 L628.25,253.31 L629.15,251.68 L630.08,250.05 L631.02,248.43 L631.99,246.80 L632.98,245.17 L633.99,243.55 L635.02,241.92 L636.07,240.29 L637.14,238.67 L638.23,237.04 L639.34,235.41 L640.47,233.79 L641.62,232.16 L642.79,230.53 L643.98,228.91 L645.19,227.28 L646.41,225.65 L647.66,224.03 L648.93,222.40 L650.22,220.77 L651.52,219.15 L652.85,217.52 L654.19,215.89 L655.56,214.27 L656.94,212.64 L658.34,211.01 L659.76,209.39 L661.20,207.76 L662.66,206.13 L664.13,204.51 L665.62,202.88 L667.13,201.25 L668.66,199.63 L670.21,198.00 L671.77,196.37 L673.36,194.75 L674.95,193.12 L676.57,191.49 L678.20,189.87 L679.86,188.24 L681.52,186.61 L683.21,184.99 L684.91,183.36 L686.63,181.74 L688.36,180.11 L690.11,178.48 L691.88,176.86 L693.66,175.23 L695.46,173.60 L697.28,171.98 L699.11,170.35 L700.95,168.72 L702.81,167.10 L704.69,165.47 L706.58,163.84 L708.49,162.22 L710.41,160.59 L712.34,158.96 L714.29,157.34 L716.26,155.71 L718.24,154.08 L720.23,152.46 L722.24,150.83 L724.26,149.20 L726.29,147.58 L728.34,145.95 L730.40,144.32 L732.47,142.70 L734.56,141.07 L736.66,139.44 L738.77,137.82 L740.89,136.19 L743.03,134.56 L745.18,132.94 L747.34,131.31 L749.51,129.68 L751.70,128.06 L753.89,126.43 L756.10,124.80 L758.32,123.18 L760.55,121.55 L762.79,119.92 L765.04,118.30 L767.30,116.67 L769.57,115.04 L771.85,113.42 L774.15,111.79 L776.45,110.16 L778.76,108.54 L781.08,106.91 L783.41,105.28 L785.75,103.66 L788.10,102.03 L790.45,100.40 L792.82,98.78 L795.19,97.15 L797.57,95.52 L799.96,93.90 L802.36,92.27 L804.76,90.64 L807.17,89.02 L809.59,87.39 L812.02,85.76 L814.45,84.14 L816.89,82.51 L819.34,80.88 L821.79,79.26 L824.25,77.63 L826.72,76.00 L829.19,74.38 L831.67,72.75 L834.15,71.12 L836.64,69.50 L839.13,67.87 L841.62,66.24 L844.13,64.62 L846.63,62.99 L849.14,61.36 L851.66,59.74 L854.17,58.11 L856.70,56.48 L859.22,54.86 L861.75,53.23 L864.28,51.60 L866.82,49.98 L869.35,48.35 L871.89,46.72 L874.44,45.10 L876.98,43.47 L879.53,41.84 L882.08,40.22 L884.63,38.59 L887.18,36.96 L889.73,35.34 L892.28,33.71 L894.84,32.08 L897.39,30.46 L899.94,28.83 L902.50,27.20"/><path d="M902.50,612.80 L899.52,611.17 L896.54,609.54 L893.56,607.92 L890.58,606.29 L887.60,604.66 L884.62,603.04 L881.65,601.41 L878.67,599.78 L875.70,598.16 L872.73,596.53 L869.76,594.90 L866.79,593.28 L863.83,591.65 L860.87,590.02 L857.91,588.40 L854.96,586.77 L852.01,585.14 L849.06,583.52 L846.12,581.89 L843.18,580.26 L840.25,578.64 L837.32,577.01 L834.40,575.38 L831.48,573.76 L828.57,572.13 L825.66,570.50 L822.76,568.88 L819.86,567.25 L816.97,565.62 L814.09,564.00 L811.21,562.37 L808.34,560.74 L805.48,559.12 L802.63,557.49 L799.78,555.86 L796.94,554.24 L794.11,552.61 L791.29,550.98 L788.47,549.36 L785.67,547.73 L782.87,546.10 L780.08,544.48 L777.30,542.85 L774.54,541.22 L771.78,539.60 L769.03,537.97 L766.29,536.34 L763.56,534.72 L760.84,533.09 L758.14,531.46 L755.44,529.84 L752.75,528.21 L750.08,526.58 L747.42,524.96 L744.77,523.33 L742.13,521.70 L739.50,520.08 L736.89,518.45 L734.29,516.82 L731.70,515.20 L729.13,513.57 L726.57,511.94 L724.02,510.32 L721.48,508.69 L718.96,507.06 L716.45,505.44 L713.96,503.81 L711.48,502.18 L709.02,500.56 L706.57,498.93 L704.13,497.30 L701.72,495.68 L699.31,494.05 L696.92,492.42 L694.55,490.80 L692.19,489.17 L689.85,487.54 L687.53,485.92 L685.22,484.29 L682.93,482.66 L680.65,481.04 L678.39,479.41 L676.15,477.78 L673.93,476.16 L671.72,474.53 L669.53,472.90 L667.36,471.28 L665.21,469.65 L663.07,468.02 L660.96,466.40 L658.86,464.77 L656.78,463.14 L654.72,461.52 L652.67,459.89 L650.65,458.26 L648.64,456.64 L646.66,455.01 L644.69,453.39 L642.75,451.76 L640.82,450.13 L638.92,448.51 L637.03,446.88 L635.16,445.25 L633.32,443.63 L631.49,442.00 L629.69,440.37 L627.91,438.75 L626.14,437.12 L624.40,435.49 L622.68,433.87 L620.98,432.24 L619.30,430.61 L617.65,428.99 L616.01,427.36 L614.40,425.73 L612.81,424.11 L611.24,422.48 L609.70,420.85 L608.17,419.23 L606.67,417.60 L605.19,415.97 L603.73,414.35 L602.30,412.72 L600.89,411.09 L599.50,409.47 L598.14,407.84 L596.79,406.21 L595.48,404.59 L594.18,402.96 L592.91,401.33 L591.66,399.71 L590.44,398.08 L589.24,396.45 L588.06,394.83 L586.91,393.20 L585.78,391.57 L584.67,389.95 L583.59,388.32 L582.54,386.69 L581.50,385.07 L580.50,383.44 L579.51,381.81 L578.56,380.19 L577.62,378.56 L576.71,376.93 L575.83,375.31 L574.97,373.68 L574.14,372.05 L573.33,370.43 L572.54,368.80 L571.78,367.17 L571.05,365.55 L570.34,363.92 L569.66,362.29 L569.00,360.67 L568.37,359.04 L567.76,357.41 L567.18,355.79 L566.62,354.16 L566.09,352.53 L565.59,350.91 L565.11,349.28 L564.66,347.65 L564.23,346.03 L563.83,344.40 L563.45,342.77 L563.10,341.15 L562.78,339.52 L562.48,337.89 L562.20,336.27 L561.96,334.64 L561.74,333.01 L561.54,331.39 L561.37,329.76 L561.23,328.13 L561.11,326.51 L561.02,324.88 L560.96,323.25 L560.92,321.63 L560.90,320.00 L560.92,318.37 L560.96,316.75 L561.02,315.12 L561.11,313.49 L561.23,311.87 L561.37,310.24 L561.54,308.61 L561.74,306.99 L561.96,305.36 L562.20,303.73 L562.48,302.11 L562.78,300.48 L563.10,298.85 L563.45,297.23 L563.83,295.60 L564.23,293.97 L564.66,292.35 L565.11,290.72 L565.59,289.09 L566.09,287.47 L566.62,285.84 L567.18,284.21 L567.76,282.59 L568.37,280.96 L569.00,279.33 L569.66,277.71 L570.34,276.08 L571.05,274.45 L571.78,272.83 L572.54,271.20 L573.33,269.57 L574.14,267.95 L574.97,266.32 L575.83,264.69 L576.71,263.07 L577.62,261.44 L578.56,259.81 L579.51,258.19 L580.50,256.56 L581.50,254.93 L582.54,253.31 L583.59,251.68 L584.67,250.05 L585.78,248.43 L586.91,246.80 L588.06,245.17 L589.24,243.55 L590.44,241.92 L591.66,240.29 L592.91,238.67 L594.18,237.04 L595.48,235.41 L596.79,233.79 L598.14,232.16 L599.50,230.53 L600.89,228.91 L602.30,227.28 L603.73,225.65 L605.19,224.03 L606.67,222.40 L608.17,220.77 L609.70,219.15 L611.24,217.52 L612.81,215.89 L614.40,214.27 L616.01,212.64 L617.65,211.01 L619.30,209.39 L620.98,207.76 L622.68,206.13 L624.40,204.51 L626.14,202.88 L627.91,201.25 L629.69,199.63 L631.49,198.00 L633.32,196.37 L635.16,194.75 L637.03,193.12 L638.92,191.49 L640.82,189.87 L642.75,188.24 L644.69,186.61 L646.66,184.99 L648.64,183.36 L650.65,181.74 L652.67,180.11 L654.72,178.48 L656.78,176.86 L658.86,175.23 L660.96,173.60 L663.07,171.98 L665.21,170.35 L667.36,168.72 L669.53,167.10 L671.72,165.47 L673.93,163.84 L676.15,162.22 L678.39,160.59 L680.65,158.96 L682.93,157.34 L685.22,155.71 L687.53,154.08 L689.85,152.46 L692.19,150.83 L694.55,149.20 L696.92,147.58 L699.31,145.95 L701.72,144.32 L704.13,142.70 L706.57,141.07 L709.02,139.44 L711.48,137.82 L713.96,136.19 L716.45,134.56 L718.96,132.94 L721.48,131.31 L724.02,129.68 L726.57,128.06 L729.13,126.43 L731.70,124.80 L734.29,123.18 L736.89,121.55 L739.50,119.92 L742.13,118.30 L744.77,116.67 L747.42,115.04 L750.08,113.42 L752.75,111.79 L755.44,110.16 L758.14,108.54 L760.84,106.91 L763.56,105.28 L766.29,103.66 L769.03,102.03 L771.78,100.40 L774.54,98.78 L777.30,97.15 L780.08,95.52 L782.87,93.90 L785.67,92.27 L788.47,90.64 L791.29,89.02 L794.11,87.39 L796.94,85.76 L799.78,84.14 L802.63,82.51 L805.48,80.88 L808.34,79.26 L811.21,77.63 L814.09,76.00 L816.97,74.38 L819.86,72.75 L822.76,71.12 L825.66,69.50 L828.57,67.87 L831.48,66.24 L834.40,64.62 L837.32,62.99 L840.25,61.36 L843.18,59.74 L846.12,58.11 L849.06,56.48 L852.01,54.86 L854.96,53.23 L857.91,51.60 L860.87,49.98 L863.83,48.35 L866.79,46.72 L869.76,45.10 L872.73,43.47 L875.70,41.84 L878.67,40.22 L881.65,38.59 L884.62,36.96 L887.60,35.34 L890.58,33.71 L893.56,32.08 L896.54,30.46 L899.52,28.83 L902.50,27.20"/><path d="M902.50,612.80 L899.09,611.17 L895.69,609.54 L892.28,607.92 L888.88,606.29 L885.47,604.66 L882.07,603.04 L878.67,601.41 L875.27,599.78 L871.87,598.16 L868.47,596.53 L865.08,594.90 L861.69,593.28 L858.31,591.65 L854.92,590.02 L851.54,588.40 L848.17,586.77 L844.80,585.14 L841.43,583.52 L838.07,581.89 L834.71,580.26 L831.36,578.64 L828.01,577.01 L824.67,575.38 L821.33,573.76 L818.00,572.13 L814.68,570.50 L811.36,568.88 L808.05,567.25 L804.75,565.62 L801.46,564.00 L798.17,562.37 L794.89,560.74 L791.62,559.12 L788.36,557.49 L785.11,555.86 L781.86,554.24 L778.63,552.61 L775.40,550.98 L772.18,549.36 L768.98,547.73 L765.78,546.10 L762.59,544.48 L759.42,542.85 L756.26,541.22 L753.10,539.60 L749.96,537.97 L746.83,536.34 L743.71,534.72 L740.61,533.09 L737.51,531.46 L734.43,529.84 L731.36,528.21 L728.31,526.58 L725.26,524.96 L722.24,523.33 L719.22,521.70 L716.22,520.08 L713.23,518.45 L710.26,516.82 L707.30,515.20 L704.36,513.57 L701.43,511.94 L698.52,510.32 L695.62,508.69 L692.74,507.06 L689.88,505.44 L687.03,503.81 L684.19,502.18 L681.38,500.56 L678.58,498.93 L675.80,497.30 L673.03,495.68 L670.28,494.05 L667.55,492.42 L664.84,490.80 L662.15,489.17 L659.47,487.54 L656.82,485.92 L654.18,484.29 L651.56,482.66 L648.96,481.04 L646.38,479.41 L643.82,477.78 L641.27,476.16 L638.75,474.53 L636.25,472.90 L633.77,471.28 L631.31,469.65 L628.87,468.02 L626.45,466.40 L624.05,464.77 L621.67,463.14 L619.32,461.52 L616.98,459.89 L614.67,458.26 L612.38,456.64 L610.11,455.01 L607.86,453.39 L605.64,451.76 L603.44,450.13 L601.26,448.51 L599.11,446.88 L596.97,445.25 L594.86,443.63 L592.78,442.00 L590.72,440.37 L588.68,438.75 L586.66,437.12 L584.67,435.49 L582.71,433.87 L580.77,432.24 L578.85,430.61 L576.95,428.99 L575.09,427.36 L573.24,425.73 L571.43,424.11 L569.63,422.48 L567.87,420.85 L566.12,419.23 L564.41,417.60 L562.72,415.97 L561.05,414.35 L559.41,412.72 L557.80,411.09 L556.22,409.47 L554.66,407.84 L553.12,406.21 L551.62,404.59 L550.13,402.96 L548.68,401.33 L547.26,399.71 L545.86,398.08 L544.48,396.45 L543.14,394.83 L541.82,393.20 L540.53,391.57 L539.27,389.95 L538.03,388.32 L536.83,386.69 L535.65,385.07 L534.50,383.44 L533.37,381.81 L532.28,380.19 L531.21,378.56 L530.17,376.93 L529.16,375.31 L528.18,373.68 L527.23,372.05 L526.30,370.43 L525.41,368.80 L524.54,367.17 L523.70,365.55 L522.89,363.92 L522.11,362.29 L521.36,360.67 L520.64,359.04 L519.94,357.41 L519.28,355.79 L518.64,354.16 L518.04,352.53 L517.46,350.91 L516.91,349.28 L516.39,347.65 L515.90,346.03 L515.44,344.40 L515.01,342.77 L514.61,341.15 L514.24,339.52 L513.90,337.89 L513.59,336.27 L513.31,334.64 L513.06,333.01 L512.83,331.39 L512.64,329.76 L512.48,328.13 L512.34,326.51 L512.24,324.88 L512.16,323.25 L512.12,321.63 L512.10,320.00 L512.12,318.37 L512.16,316.75 L512.24,315.12 L512.34,313.49 L512.48,311.87 L512.64,310.24 L512.83,308.61 L513.06,306.99 L513.31,305.36 L513.59,303.73 L513.90,302.11 L514.24,300.48 L514.61,298.85 L515.01,297.23 L515.44,295.60 L515.90,293.97 L516.39,292.35 L516.91,290.72 L517.46,289.09 L518.04,287.47 L518.64,285.84 L519.28,284.21 L519.94,282.59 L520.64,280.96 L521.36,279.33 L522.11,277.71 L522.89,276.08 L523.70,274.45 L524.54,272.83 L525.41,271.20 L526.30,269.57 L527.23,267.95 L528.18,266.32 L529.16,264.69 L530.17,263.07 L531.21,261.44 L532.28,259.81 L533.37,258.19 L534.50,256.56 L535.65,254.93 L536.83,253.31 L538.03,251.68 L539.27,250.05 L540.53,248.43 L541.82,246.80 L543.14,245.17 L544.48,243.55 L545.86,241.92 L547.26,240.29 L548.68,238.67 L550.13,237.04 L551.62,235.41 L553.12,233.79 L554.66,232.16 L556.22,230.53 L557.80,228.91 L559.41,227.28 L561.05,225.65 L562.72,224.03 L564.41,222.40 L566.12,220.77 L567.87,219.15 L569.63,217.52 L571.43,215.89 L573.24,214.27 L575.09,212.64 L576.95,211.01 L578.85,209.39 L580.77,207.76 L582.71,206.13 L584.67,204.51 L586.66,202.88 L588.68,201.25 L590.72,199.63 L592.78,198.00 L594.86,196.37 L596.97,194.75 L599.11,193.12 L601.26,191.49 L603.44,189.87 L605.64,188.24 L607.86,186.61 L610.11,184.99 L612.38,183.36 L614.67,181.74 L616.98,180.11 L619.32,178.48 L621.67,176.86 L624.05,175.23 L626.45,173.60 L628.87,171.98 L631.31,170.35 L633.77,168.72 L636.25,167.10 L638.75,165.47 L641.27,163.84 L643.82,162.22 L646.38,160.59 L648.96,158.96 L651.56,157.34 L654.18,155.71 L656.82,154.08 L659.47,152.46 L662.15,150.83 L664.84,149.20 L667.55,147.58 L670.28,145.95 L673.03,144.32 L675.80,142.70 L678.58,141.07 L681.38,139.44 L684.19,137.82 L687.03,136.19 L689.88,134.56 L692.74,132.94 L695.62,131.31 L698.52,129.68 L701.43,128.06 L704.36,126.43 L707.30,124.80 L710.26,123.18 L713.23,121.55 L716.22,119.92 L719.22,118.30 L722.24,116.67 L725.26,115.04 L728.31,113.42 L731.36,111.79 L734.43,110.16 L737.51,108.54 L740.61,106.91 L743.71,105.28 L746.83,103.66 L749.96,102.03 L753.10,100.40 L756.26,98.78 L759.42,97.15 L762.59,95.52 L765.78,93.90 L768.98,92.27 L772.18,90.64 L775.40,89.02 L778.63,87.39 L781.86,85.76 L785.11,84.14 L788.36,82.51 L791.62,80.88 L794.89,79.26 L798.17,77.63 L801.46,76.00 L804.75,74.38 L808.05,72.75 L811.36,71.12 L814.68,69.50 L818.00,67.87 L821.33,66.24 L824.67,64.62 L828.01,62.99 L831.36,61.36 L834.71,59.74 L838.07,58.11 L841.43,56.48 L844.80,54.86 L848.17,53.23 L851.54,51.60 L854.92,49.98 L858.31,48.35 L861.69,46.72 L865.08,45.10 L868.47,43.47 L871.87,41.84 L875.27,40.22 L878.67,38.59 L882.07,36.96 L885.47,35.34 L888.88,33.71 L892.28,32.08 L895.69,30.46 L899.09,28.83 L902.50,27.20"/><path d="M902.50,612.80 L898.67,611.17 L894.83,609.54 L891.00,607.92 L887.17,606.29 L883.34,604.66 L879.51,603.04 L875.69,601.41 L871.86,599.78 L868.04,598.16 L864.22,596.53 L860.41,594.90 L856.59,593.28 L852.78,591.65 L848.98,590.02 L845.17,588.40 L841.38,586.77 L837.58,585.14 L833.79,583.52 L830.01,581.89 L826.23,580.26 L822.46,578.64 L818.70,577.01 L814.94,575.38 L811.19,573.76 L807.44,572.13 L803.70,570.50 L799.97,568.88 L796.25,567.25 L792.53,565.62 L788.83,564.00 L785.13,562.37 L781.44,560.74 L777.76,559.12 L774.09,557.49 L770.43,555.86 L766.78,554.24 L763.14,552.61 L759.51,550.98 L755.89,549.36 L752.29,547.73 L748.69,546.10 L745.11,544.48 L741.53,542.85 L737.97,541.22 L734.43,539.60 L730.89,537.97 L727.37,536.34 L723.86,534.72 L720.37,533.09 L716.89,531.46 L713.42,529.84 L709.97,528.21 L706.53,526.58 L703.11,524.96 L699.70,523.33 L696.31,521.70 L692.93,520.08 L689.57,518.45 L686.23,516.82 L682.90,515.20 L679.59,513.57 L676.30,511.94 L673.02,510.32 L669.76,508.69 L666.52,507.06 L663.30,505.44 L660.09,503.81 L656.91,502.18 L653.74,500.56 L650.59,498.93 L647.46,497.30 L644.35,495.68 L641.26,494.05 L638.19,492.42 L635.14,490.80 L632.10,489.17 L629.09,487.54 L626.11,485.92 L623.14,484.29 L620.19,482.66 L617.27,481.04 L614.36,479.41 L611.48,477.78 L608.62,476.16 L605.78,474.53 L602.97,472.90 L600.18,471.28 L597.41,469.65 L594.66,468.02 L591.94,466.40 L589.24,464.77 L586.57,463.14 L583.92,461.52 L581.29,459.89 L578.69,458.26 L576.11,456.64 L573.56,455.01 L571.04,453.39 L568.53,451.76 L566.06,450.13 L563.61,448.51 L561.18,446.88 L558.78,445.25 L556.41,443.63 L554.06,442.00 L551.74,440.37 L549.45,438.75 L547.18,437.12 L544.94,435.49 L542.73,433.87 L540.55,432.24 L538.39,430.61 L536.26,428.99 L534.16,427.36 L532.09,425.73 L530.04,424.11 L528.02,422.48 L526.04,420.85 L524.08,419.23 L522.15,417.60 L520.24,415.97 L518.37,414.35 L516.53,412.72 L514.71,411.09 L512.93,409.47 L511.17,407.84 L509.45,406.21 L507.75,404.59 L506.09,402.96 L504.45,401.33 L502.85,399.71 L501.28,398.08 L499.73,396.45 L498.22,394.83 L496.74,393.20 L495.29,391.57 L493.87,389.95 L492.48,388.32 L491.12,386.69 L489.79,385.07 L488.50,383.44 L487.23,381.81 L486.00,380.19 L484.80,378.56 L483.63,376.93 L482.50,375.31 L481.39,373.68 L480.32,372.05 L479.28,370.43 L478.27,368.80 L477.29,367.17 L476.35,365.55 L475.44,363.92 L474.56,362.29 L473.72,360.67 L472.90,359.04 L472.12,357.41 L471.37,355.79 L470.66,354.16 L469.98,352.53 L469.33,350.91 L468.71,349.28 L468.13,347.65 L467.58,346.03 L467.06,344.40 L466.58,342.77 L466.13,341.15 L465.71,339.52 L465.33,337.89 L464.98,336.27 L464.66,334.64 L464.38,333.01 L464.12,331.39 L463.91,329.76 L463.72,328.13 L463.57,326.51 L463.46,324.88 L463.37,323.25 L463.32,321.63 L463.31,320.00 L463.32,318.37 L463.37,316.75 L463.46,315.12 L463.57,313.49 L463.72,311.87 L463.91,310.24 L464.12,308.61 L464.38,306.99 L464.66,305.36 L464.98,303.73 L465.33,302.11 L465.71,300.48 L466.13,298.85 L466.58,297.23 L467.06,295.60 L467.58,293.97 L468.13,292.35 L468.71,290.72 L469.33,289.09 L469.98,287.47 L470.66,285.84 L471.37,284.21 L472.12,282.59 L472.90,280.96 L473.72,279.33 L474.56,277.71 L475.44,276.08 L476.35,274.45 L477.29,272.83 L478.27,271.20 L479.28,269.57 L480.32,267.95 L481.39,266.32 L482.50,264.69 L483.63,263.07 L484.80,261.44 L486.00,259.81 L487.23,258.19 L488.50,256.56 L489.79,254.93 L491.12,253.31 L492.48,251.68 L493.87,250.05 L495.29,248.43 L496.74,246.80 L498.22,245.17 L499.73,243.55 L501.28,241.92 L502.85,240.29 L504.45,238.67 L506.09,237.04 L507.75,235.41 L509.45,233.79 L511.17,232.16 L512.93,230.53 L514.71,228.91 L516.53,227.28 L518.37,225.65 L520.24,224.03 L522.15,222.40 L524.08,220.77 L526.04,219.15 L528.02,217.52 L530.04,215.89 L532.09,214.27 L534.16,212.64 L536.26,211.01 L538.39,209.39 L540.55,207.76 L542.73,206.13 L544.94,204.51 L547.18,202.88 L549.45,201.25 L551.74,199.63 L554.06,198.00 L556.41,196.37 L558.78,194.75 L561.18,193.12 L563.61,191.49 L566.06,189.87 L568.53,188.24 L571.04,186.61 L573.56,184.99 L576.11,183.36 L578.69,181.74 L581.29,180.11 L583.92,178.48 L586.57,176.86 L589.24,175.23 L591.94,173.60 L594.66,171.98 L597.41,170.35 L600.18,168.72 L602.97,167.10 L605.78,165.47 L608.62,163.84 L611.48,162.22 L614.36,160.59 L617.27,158.96 L620.19,157.34 L623.14,155.71 L626.11,154.08 L629.09,152.46 L632.10,150.83 L635.14,149.20 L638.19,147.58 L641.26,145.95 L644.35,144.32 L647.46,142.70 L650.59,141.07 L653.74,139.44 L656.91,137.82 L660.09,136.19 L663.30,134.56 L666.52,132.94 L669.76,131.31 L673.02,129.68 L676.30,128.06 L679.59,126.43 L682.90,124.80 L686.23,123.18 L689.57,121.55 L692.93,119.92 L696.31,118.30 L699.70,116.67 L703.11,115.04 L706.53,113.42 L709.97,111.79 L713.42,110.16 L716.89,108.54 L720.37,106.91 L723.86,105.28 L727.37,103.66 L730.89,102.03 L734.43,100.40 L737.97,98.78 L741.53,97.15 L745.11,95.52 L748.69,93.90 L752.29,92.27 L755.89,90.64 L759.51,89.02 L763.14,87.39 L766.78,85.76 L770.43,84.14 L774.09,82.51 L777.76,80.88 L781.44,79.26 L785.13,77.63 L788.83,76.00 L792.53,74.38 L796.25,72.75 L799.97,71.12 L803.70,69.50 L807.44,67.87 L811.19,66.24 L814.94,64.62 L818.70,62.99 L822.46,61.36 L826.23,59.74 L830.01,58.11 L833.79,56.48 L837.58,54.86 L841.38,53.23 L845.17,51.60 L848.98,49.98 L852.78,48.35 L856.59,46.72 L860.41,45.10 L864.22,43.47 L868.04,41.84 L871.86,40.22 L875.69,38.59 L879.51,36.96 L883.34,35.34 L887.17,33.71 L891.00,32.08 L894.83,30.46 L898.67,28.83 L902.50,27.20"/><path d="M902.50,612.80 L898.24,611.17 L893.98,609.54 L889.73,607.92 L885.47,606.29 L881.21,604.66 L876.96,603.04 L872.71,601.41 L868.46,599.78 L864.21,598.16 L859.97,596.53 L855.73,594.90 L851.49,593.28 L847.26,591.65 L843.03,590.02 L838.80,588.40 L834.58,586.77 L830.37,585.14 L826.16,583.52 L821.96,581.89 L817.76,580.26 L813.57,578.64 L809.39,577.01 L805.21,575.38 L801.04,573.76 L796.88,572.13 L792.73,570.50 L788.58,568.88 L784.44,567.25 L780.32,565.62 L776.20,564.00 L772.09,562.37 L767.99,560.74 L763.90,559.12 L759.82,557.49 L755.76,555.86 L751.70,554.24 L747.66,552.61 L743.62,550.98 L739.60,549.36 L735.60,547.73 L731.60,546.10 L727.62,544.48 L723.65,542.85 L719.69,541.22 L715.75,539.60 L711.83,537.97 L707.91,536.34 L704.01,534.72 L700.13,533.09 L696.26,531.46 L692.41,529.84 L688.58,528.21 L684.76,526.58 L680.96,524.96 L677.17,523.33 L673.40,521.70 L669.65,520.08 L665.92,518.45 L662.20,516.82 L658.50,515.20 L654.82,513.57 L651.16,511.94 L647.52,510.32 L643.90,508.69 L640.30,507.06 L636.72,505.44 L633.16,503.81 L629.62,502.18 L626.10,500.56 L622.60,498.93 L619.12,497.30 L615.66,495.68 L612.23,494.05 L608.82,492.42 L605.43,490.80 L602.06,489.17 L598.72,487.54 L595.40,485.92 L592.10,484.29 L588.82,482.66 L585.57,481.04 L582.35,479.41 L579.15,477.78 L575.97,476.16 L572.82,474.53 L569.69,472.90 L566.59,471.28 L563.51,469.65 L560.46,468.02 L557.44,466.40 L554.44,464.77 L551.47,463.14 L548.52,461.52 L545.60,459.89 L542.71,458.26 L539.85,456.64 L537.01,455.01 L534.21,453.39 L531.43,451.76 L528.67,450.13 L525.95,448.51 L523.26,446.88 L520.59,445.25 L517.96,443.63 L515.35,442.00 L512.77,440.37 L510.22,438.75 L507.70,437.12 L505.22,435.49 L502.76,433.87 L500.33,432.24 L497.93,430.61 L495.57,428.99 L493.23,427.36 L490.93,425.73 L488.66,424.11 L486.42,422.48 L484.21,420.85 L482.03,419.23 L479.88,417.60 L477.77,415.97 L475.69,414.35 L473.64,412.72 L471.63,411.09 L469.64,409.47 L467.69,407.84 L465.78,406.21 L463.89,404.59 L462.04,402.96 L460.23,401.33 L458.44,399.71 L456.70,398.08 L454.98,396.45 L453.30,394.83 L451.65,393.20 L450.04,391.57 L448.46,389.95 L446.92,388.32 L445.41,386.69 L443.94,385.07 L442.50,383.44 L441.09,381.81 L439.72,380.19 L438.39,378.56 L437.09,376.93 L435.83,375.31 L434.60,373.68 L433.41,372.05 L432.25,370.43 L431.13,368.80 L430.05,367.17 L429.00,365.55 L427.99,363.92 L427.01,362.29 L426.07,360.67 L425.17,359.04 L424.30,357.41 L423.47,355.79 L422.68,354.16 L421.92,352.53 L421.20,350.91 L420.51,349.28 L419.87,347.65 L419.26,346.03 L418.68,344.40 L418.14,342.77 L417.64,341.15 L417.18,339.52 L416.75,337.89 L416.36,336.27 L416.01,334.64 L415.69,333.01 L415.42,331.39 L415.17,329.76 L414.97,328.13 L414.80,326.51 L414.67,324.88 L414.58,323.25 L414.52,321.63 L414.51,320.00 L414.52,318.37 L414.58,316.75 L414.67,315.12 L414.80,313.49 L414.97,311.87 L415.17,310.24 L415.42,308.61 L415.69,306.99 L416.01,305.36 L416.36,303.73 L416.75,302.11 L417.18,300.48 L417.64,298.85 L418.14,297.23 L418.68,295.60 L419.26,293.97 L419.87,292.35 L420.51,290.72 L421.20,289.09 L421.92,287.47 L422.68,285.84 L423.47,284.21 L424.30,282.59 L425.17,280.96 L426.07,279.33 L427.01,277.71 L427.99,276.08 L429.00,274.45 L430.05,272.83 L431.13,271.20 L432.25,269.57 L433.41,267.95 L434.60,266.32 L435.83,264.69 L437.09,263.07 L438.39,261.44 L439.72,259.81 L441.09,258.19 L442.50,256.56 L443.94,254.93 L445.41,253.31 L446.92,251.68 L448.46,250.05 L450.04,248.43 L451.65,246.80 L453.30,245.17 L454.98,243.55 L456.70,241.92 L458.44,240.29 L460.23,238.67 L462.04,237.04 L463.89,235.41 L465.78,233.79 L467.69,232.16 L469.64,230.53 L471.63,228.91 L473.64,227.28 L475.69,225.65 L477.77,224.03 L479.88,222.40 L482.03,220.77 L484.21,219.15 L486.42,217.52 L488.66,215.89 L490.93,214.27 L493.23,212.64 L495.57,211.01 L497.93,209.39 L500.33,207.76 L502.76,206.13 L505.22,204.51 L507.70,202.88 L510.22,201.25 L512.77,199.63 L515.35,198.00 L517.96,196.37 L520.59,194.75 L523.26,193.12 L525.95,191.49 L528.67,189.87 L531.43,188.24 L534.21,186.61 L537.01,184.99 L539.85,183.36 L542.71,181.74 L545.60,180.11 L548.52,178.48 L551.47,176.86 L554.44,175.23 L557.44,173.60 L560.46,171.98 L563.51,170.35 L566.59,168.72 L569.69,167.10 L572.82,165.47 L575.97,163.84 L579.15,162.22 L582.35,160.59 L585.57,158.96 L588.82,157.34 L592.10,155.71 L595.40,154.08 L598.72,152.46 L602.06,150.83 L605.43,149.20 L608.82,147.58 L612.23,145.95 L615.66,144.32 L619.12,142.70 L622.60,141.07 L626.10,139.44 L629.62,137.82 L633.16,136.19 L636.72,134.56 L640.30,132.94 L643.90,131.31 L647.52,129.68 L651.16,128.06 L654.82,126.43 L658.50,124.80 L662.20,123.18 L665.92,121.55 L669.65,119.92 L673.40,118.30 L677.17,116.67 L680.96,115.04 L684.76,113.42 L688.58,111.79 L692.41,110.16 L696.26,108.54 L700.13,106.91 L704.01,105.28 L707.91,103.66 L711.83,102.03 L715.75,100.40 L719.69,98.78 L723.65,97.15 L727.62,95.52 L731.60,93.90 L735.60,92.27 L739.60,90.64 L743.62,89.02 L747.66,87.39 L751.70,85.76 L755.76,84.14 L759.82,82.51 L763.90,80.88 L767.99,79.26 L772.09,77.63 L776.20,76.00 L780.32,74.38 L784.44,72.75 L788.58,71.12 L792.73,69.50 L796.88,67.87 L801.04,66.24 L805.21,64.62 L809.39,62.99 L813.57,61.36 L817.76,59.74 L821.96,58.11 L826.16,56.48 L830.37,54.86 L834.58,53.23 L838.80,51.60 L843.03,49.98 L847.26,48.35 L851.49,46.72 L855.73,45.10 L859.97,43.47 L864.21,41.84 L868.46,40.22 L872.71,38.59 L876.96,36.96 L881.21,35.34 L885.47,33.71 L889.73,32.08 L893.98,30.46 L898.24,28.83 L902.50,27.20"/><path d="M902.50,612.80 L897.82,611.17 L893.13,609.54 L888.45,607.92 L883.77,606.29 L879.09,604.66 L874.41,603.04 L869.73,601.41 L865.06,599.78 L860.38,598.16 L855.72,596.53 L851.05,594.90 L846.39,593.28 L841.73,591.65 L837.08,590.02 L832.43,588.40 L827.79,586.77 L823.16,585.14 L818.53,583.52 L813.90,581.89 L809.29,580.26 L804.68,578.64 L800.07,577.01 L795.48,575.38 L790.89,573.76 L786.32,572.13 L781.75,570.50 L777.19,568.88 L772.64,567.25 L768.10,565.62 L763.57,564.00 L759.05,562.37 L754.54,560.74 L750.04,559.12 L745.56,557.49 L741.08,555.86 L736.62,554.24 L732.17,552.61 L727.74,550.98 L723.31,549.36 L718.91,547.73 L714.51,546.10 L710.13,544.48 L705.76,542.85 L701.41,541.22 L697.08,539.60 L692.76,537.97 L688.45,536.34 L684.17,534.72 L679.90,533.09 L675.64,531.46 L671.40,529.84 L667.19,528.21 L662.98,526.58 L658.80,524.96 L654.64,523.33 L650.49,521.70 L646.36,520.08 L642.26,518.45 L638.17,516.82 L634.10,515.20 L630.06,513.57 L626.03,511.94 L622.03,510.32 L618.04,508.69 L614.08,507.06 L610.14,505.44 L606.22,503.81 L602.33,502.18 L598.46,500.56 L594.61,498.93 L590.78,497.30 L586.98,495.68 L583.20,494.05 L579.45,492.42 L575.72,490.80 L572.02,489.17 L568.34,487.54 L564.68,485.92 L561.06,484.29 L557.46,482.66 L553.88,481.04 L550.33,479.41 L546.81,477.78 L543.32,476.16 L539.85,474.53 L536.41,472.90 L533.00,471.28 L529.61,469.65 L526.26,468.02 L522.93,466.40 L519.63,464.77 L516.36,463.14 L513.12,461.52 L509.91,459.89 L506.73,458.26 L503.58,456.64 L500.47,455.01 L497.38,453.39 L494.32,451.76 L491.29,450.13 L488.30,448.51 L485.33,446.88 L482.40,445.25 L479.50,443.63 L476.63,442.00 L473.80,440.37 L470.99,438.75 L468.22,437.12 L465.49,435.49 L462.78,433.87 L460.11,432.24 L457.48,430.61 L454.88,428.99 L452.31,427.36 L449.77,425.73 L447.27,424.11 L444.81,422.48 L442.38,420.85 L439.98,419.23 L437.62,417.60 L435.30,415.97 L433.01,414.35 L430.76,412.72 L428.54,411.09 L426.36,409.47 L424.21,407.84 L422.11,406.21 L420.03,404.59 L418.00,402.96 L416.00,401.33 L414.04,399.71 L412.11,398.08 L410.23,396.45 L408.38,394.83 L406.57,393.20 L404.79,391.57 L403.06,389.95 L401.36,388.32 L399.70,386.69 L398.08,385.07 L396.50,383.44 L394.95,381.81 L393.45,380.19 L391.98,378.56 L390.55,376.93 L389.16,375.31 L387.81,373.68 L386.50,372.05 L385.23,370.43 L384.00,368.80 L382.80,367.17 L381.65,365.55 L380.54,363.92 L379.46,362.29 L378.43,360.67 L377.44,359.04 L376.48,357.41 L375.57,355.79 L374.70,354.16 L373.86,352.53 L373.07,350.91 L372.32,349.28 L371.60,347.65 L370.93,346.03 L370.30,344.40 L369.71,342.77 L369.16,341.15 L368.65,339.52 L368.18,337.89 L367.75,336.27 L367.36,334.64 L367.01,333.01 L366.71,331.39 L366.44,329.76 L366.22,328.13 L366.03,326.51 L365.89,324.88 L365.79,323.25 L365.73,321.63 L365.71,320.00 L365.73,318.37 L365.79,316.75 L365.89,315.12 L366.03,313.49 L366.22,311.87 L366.44,310.24 L366.71,308.61 L367.01,306.99 L367.36,305.36 L367.75,303.73 L368.18,302.11 L368.65,300.48 L369.16,298.85 L369.71,297.23 L370.30,295.60 L370.93,293.97 L371.60,292.35 L372.32,290.72 L373.07,289.09 L373.86,287.47 L374.70,285.84 L375.57,284.21 L376.48,282.59 L377.44,280.96 L378.43,279.33 L379.46,277.71 L380.54,276.08 L381.65,274.45 L382.80,272.83 L384.00,271.20 L385.23,269.57 L386.50,267.95 L387.81,266.32 L389.16,264.69 L390.55,263.07 L391.98,261.44 L393.45,259.81 L394.95,258.19 L396.50,256.56 L398.08,254.93 L399.70,253.31 L401.36,251.68 L403.06,250.05 L404.79,248.43 L406.57,246.80 L408.38,245.17 L410.23,243.55 L412.11,241.92 L414.04,240.29 L416.00,238.67 L418.00,237.04 L420.03,235.41 L422.11,233.79 L424.21,232.16 L426.36,230.53 L428.54,228.91 L430.76,227.28 L433.01,225.65 L435.30,224.03 L437.62,222.40 L439.98,220.77 L442.38,219.15 L444.81,217.52 L447.27,215.89 L449.77,214.27 L452.31,212.64 L454.88,211.01 L457.48,209.39 L460.11,207.76 L462.78,206.13 L465.49,204.51 L468.22,202.88 L470.99,201.25 L473.80,199.63 L476.63,198.00 L479.50,196.37 L482.40,194.75 L485.33,193.12 L488.30,191.49 L491.29,189.87 L494.32,188.24 L497.38,186.61 L500.47,184.99 L503.58,183.36 L506.73,181.74 L509.91,180.11 L513.12,178.48 L516.36,176.86 L519.63,175.23 L522.93,173.60 L526.26,171.98 L529.61,170.35 L533.00,168.72 L536.41,167.10 L539.85,165.47 L543.32,163.84 L546.81,162.22 L550.33,160.59 L553.88,158.96 L557.46,157.34 L561.06,155.71 L564.68,154.08 L568.34,152.46 L572.02,150.83 L575.72,149.20 L579.45,147.58 L583.20,145.95 L586.98,144.32 L590.78,142.70 L594.61,141.07 L598.46,139.44 L602.33,137.82 L606.22,136.19 L610.14,134.56 L614.08,132.94 L618.04,131.31 L622.03,129.68 L626.03,128.06 L630.06,126.43 L634.10,124.80 L638.17,123.18 L642.26,121.55 L646.36,119.92 L650.49,118.30 L654.64,116.67 L658.80,115.04 L662.98,113.42 L667.19,111.79 L671.40,110.16 L675.64,108.54 L679.90,106.91 L684.17,105.28 L688.45,103.66 L692.76,102.03 L697.08,100.40 L701.41,98.78 L705.76,97.15 L710.13,95.52 L714.51,93.90 L718.91,92.27 L723.31,90.64 L727.74,89.02 L732.17,87.39 L736.62,85.76 L741.08,84.14 L745.56,82.51 L750.04,80.88 L754.54,79.26 L759.05,77.63 L763.57,76.00 L768.10,74.38 L772.64,72.75 L777.19,71.12 L781.75,69.50 L786.32,67.87 L790.89,66.24 L795.48,64.62 L800.07,62.99 L804.68,61.36 L809.29,59.74 L813.90,58.11 L818.53,56.48 L823.16,54.86 L827.79,53.23 L832.43,51.60 L837.08,49.98 L841.73,48.35 L846.39,46.72 L851.05,45.10 L855.72,43.47 L860.38,41.84 L865.06,40.22 L869.73,38.59 L874.41,36.96 L879.09,35.34 L883.77,33.71 L888.45,32.08 L893.13,30.46 L897.82,28.83 L902.50,27.20"/><path d="M902.50,612.80 L897.39,611.17 L892.28,609.54 L887.17,607.92 L882.06,606.29 L876.96,604.66 L871.85,603.04 L866.75,601.41 L861.65,599.78 L856.55,598.16 L851.46,596.53 L846.37,594.90 L841.29,593.28 L836.21,591.65 L831.13,590.02 L826.06,588.40 L821.00,586.77 L815.94,585.14 L810.89,583.52 L805.85,581.89 L800.81,580.26 L795.78,578.64 L790.76,577.01 L785.75,575.38 L780.75,573.76 L775.75,572.13 L770.77,570.50 L765.80,568.88 L760.83,567.25 L755.88,565.62 L750.94,564.00 L746.01,562.37 L741.09,560.74 L736.18,559.12 L731.29,557.49 L726.41,555.86 L721.54,554.24 L716.69,552.61 L711.85,550.98 L707.03,549.36 L702.22,547.73 L697.42,546.10 L692.64,544.48 L687.88,542.85 L683.13,541.22 L678.40,539.60 L673.69,537.97 L669.00,536.34 L664.32,534.72 L659.66,533.09 L655.02,531.46 L650.40,529.84 L645.79,528.21 L641.21,526.58 L636.65,524.96 L632.10,523.33 L627.58,521.70 L623.08,520.08 L618.60,518.45 L614.14,516.82 L609.70,515.20 L605.29,513.57 L600.90,511.94 L596.53,510.32 L592.18,508.69 L587.86,507.06 L583.56,505.44 L579.29,503.81 L575.04,502.18 L570.82,500.56 L566.62,498.93 L562.44,497.30 L558.30,495.68 L554.18,494.05 L550.08,492.42 L546.01,490.80 L541.97,489.17 L537.96,487.54 L533.97,485.92 L530.02,484.29 L526.09,482.66 L522.19,481.04 L518.32,479.41 L514.47,477.78 L510.66,476.16 L506.88,474.53 L503.13,472.90 L499.40,471.28 L495.71,469.65 L492.05,468.02 L488.42,466.40 L484.83,464.77 L481.26,463.14 L477.73,461.52 L474.22,459.89 L470.76,458.26 L467.32,456.64 L463.92,455.01 L460.55,453.39 L457.21,451.76 L453.91,450.13 L450.64,448.51 L447.41,446.88 L444.21,445.25 L441.05,443.63 L437.92,442.00 L434.82,440.37 L431.77,438.75 L428.75,437.12 L425.76,435.49 L422.81,433.87 L419.90,432.24 L417.02,430.61 L414.18,428.99 L411.38,427.36 L408.62,425.73 L405.89,424.11 L403.20,422.48 L400.55,420.85 L397.94,419.23 L395.36,417.60 L392.83,415.97 L390.33,414.35 L387.87,412.72 L385.45,411.09 L383.07,409.47 L380.73,407.84 L378.43,406.21 L376.17,404.59 L373.95,402.96 L371.77,401.33 L369.63,399.71 L367.53,398.08 L365.48,396.45 L363.46,394.83 L361.48,393.20 L359.55,391.57 L357.65,389.95 L355.80,388.32 L353.99,386.69 L352.22,385.07 L350.50,383.44 L348.81,381.81 L347.17,380.19 L345.57,378.56 L344.01,376.93 L342.49,375.31 L341.02,373.68 L339.59,372.05 L338.20,370.43 L336.86,368.80 L335.56,367.17 L334.30,365.55 L333.09,363.92 L331.92,362.29 L330.79,360.67 L329.70,359.04 L328.66,357.41 L327.67,355.79 L326.71,354.16 L325.80,352.53 L324.94,350.91 L324.12,349.28 L323.34,347.65 L322.61,346.03 L321.92,344.40 L321.27,342.77 L320.67,341.15 L320.12,339.52 L319.60,337.89 L319.14,336.27 L318.71,334.64 L318.33,333.01 L318.00,331.39 L317.71,329.76 L317.46,328.13 L317.26,326.51 L317.11,324.88 L317.00,323.25 L316.93,321.63 L316.91,320.00 L316.93,318.37 L317.00,316.75 L317.11,315.12 L317.26,313.49 L317.46,311.87 L317.71,310.24 L318.00,308.61 L318.33,306.99 L318.71,305.36 L319.14,303.73 L319.60,302.11 L320.12,300.48 L320.67,298.85 L321.27,297.23 L321.92,295.60 L322.61,293.97 L323.34,292.35 L324.12,290.72 L324.94,289.09 L325.80,287.47 L326.71,285.84 L327.67,284.21 L328.66,282.59 L329.70,280.96 L330.79,279.33 L331.92,277.71 L333.09,276.08 L334.30,274.45 L335.56,272.83 L336.86,271.20 L338.20,269.57 L339.59,267.95 L341.02,266.32 L342.49,264.69 L344.01,263.07 L345.57,261.44 L347.17,259.81 L348.81,258.19 L350.50,256.56 L352.22,254.93 L353.99,253.31 L355.80,251.68 L357.65,250.05 L359.55,248.43 L361.48,246.80 L363.46,245.17 L365.48,243.55 L367.53,241.92 L369.63,240.29 L371.77,238.67 L373.95,237.04 L376.17,235.41 L378.43,233.79 L380.73,232.16 L383.07,230.53 L385.45,228.91 L387.87,227.28 L390.33,225.65 L392.83,224.03 L395.36,222.40 L397.94,220.77 L400.55,219.15 L403.20,217.52 L405.89,215.89 L408.62,214.27 L411.38,212.64 L414.18,211.01 L417.02,209.39 L419.90,207.76 L422.81,206.13 L425.76,204.51 L428.75,202.88 L431.77,201.25 L434.82,199.63 L437.92,198.00 L441.05,196.37 L444.21,194.75 L447.41,193.12 L450.64,191.49 L453.91,189.87 L457.21,188.24 L460.55,186.61 L463.92,184.99 L467.32,183.36 L470.76,181.74 L474.22,180.11 L477.73,178.48 L481.26,176.86 L484.83,175.23 L488.42,173.60 L492.05,171.98 L495.71,170.35 L499.40,168.72 L503.13,167.10 L506.88,165.47 L510.66,163.84 L514.47,162.22 L518.32,160.59 L522.19,158.96 L526.09,157.34 L530.02,155.71 L533.97,154.08 L537.96,152.46 L541.97,150.83 L546.01,149.20 L550.08,147.58 L554.18,145.95 L558.30,144.32 L562.44,142.70 L566.62,141.07 L570.82,139.44 L575.04,137.82 L579.29,136.19 L583.56,134.56 L587.86,132.94 L592.18,131.31 L596.53,129.68 L600.90,128.06 L605.29,126.43 L609.70,124.80 L614.14,123.18 L618.60,121.55 L623.08,119.92 L627.58,118.30 L632.10,116.67 L636.65,115.04 L641.21,113.42 L645.79,111.79 L650.40,110.16 L655.02,108.54 L659.66,106.91 L664.32,105.28 L669.00,103.66 L673.69,102.03 L678.40,100.40 L683.13,98.78 L687.88,97.15 L692.64,95.52 L697.42,93.90 L702.22,92.27 L707.03,90.64 L711.85,89.02 L716.69,87.39 L721.54,85.76 L726.41,84.14 L731.29,82.51 L736.18,80.88 L741.09,79.26 L746.01,77.63 L750.94,76.00 L755.88,74.38 L760.83,72.75 L765.80,71.12 L770.77,69.50 L775.75,67.87 L780.75,66.24 L785.75,64.62 L790.76,62.99 L795.78,61.36 L800.81,59.74 L805.85,58.11 L810.89,56.48 L815.94,54.86 L821.00,53.23 L826.06,51.60 L831.13,49.98 L836.21,48.35 L841.29,46.72 L846.37,45.10 L851.46,43.47 L856.55,41.84 L861.65,40.22 L866.75,38.59 L871.85,36.96 L876.96,35.34 L882.06,33.71 L887.17,32.08 L892.28,30.46 L897.39,28.83 L902.50,27.20"/><path d="M1054.06,564.00 L750.94,564.00"/><path d="M1195.30,515.20 L609.70,515.20"/><path d="M1316.58,466.40 L488.42,466.40"/><path d="M1409.64,417.60 L395.36,417.60"/><path d="M1468.14,368.80 L336.86,368.80"/><path d="M1488.09,320.00 L316.91,320.00"/><path d="M1468.14,271.20 L336.86,271.20"/><path d="M1409.64,222.40 L395.36,222.40"/><path d="M1316.58,173.60 L488.42,173.60"/><path d="M1195.30,124.80 L609.70,124.80"/><path d="M1054.06,76.00 L750.94,76.00"/></g>
<g fill="#858585" font-size="11.0"><text x="302.27" y="330.30">+180</text><text x="399.87" y="330.30">+150</text><text x="497.47" y="330.30">+120</text><text x="598.13" y="330.30">+90</text><text x="695.72" y="330.30">+60</text><text x="793.32" y="330.30">+30</text><text x="893.98" y="330.30">+0</text><text x="985.46" y="330.30">+330</text><text x="1083.06" y="330.30">+300</text><text x="1180.66" y="330.30">+270</text><text x="1278.26" y="330.30">+240</text><text x="1375.86" y="330.30">+210</text><text x="1473.46" y="330.30">+180</text><text x="890.92" y="25.20">+90</text><text x="890.92" y="122.80">+60</text><text x="890.92" y="220.40">+30</text><text x="890.92" y="428.60">−30</text><text x="890.92" y="526.20">−60</text><text x="890.92" y="623.80">−90</text></g>
<g fill="none" stroke="#858585" stroke-width="0.7"><circle cx="331.04" cy="322.60" r="0.95"/><circle cx="428.64" cy="322.60" r="0.95"/><circle cx="526.24" cy="322.60" r="0.95"/><circle cx="620.78" cy="322.60" r="0.95"/><circle cx="718.38" cy="322.60" r="0.95"/><circle cx="815.98" cy="322.60" r="0.95"/><circle cx="910.52" cy="322.60" r="0.95"/><circle cx="1014.23" cy="322.60" r="0.95"/><circle cx="1111.83" cy="322.60" r="0.95"/><circle cx="1209.43" cy="322.60" r="0.95"/><circle cx="1307.03" cy="322.60" r="0.95"/><circle cx="1404.63" cy="322.60" r="0.95"/><circle cx="1502.23" cy="322.60" r="0.95"/><circle cx="913.58" cy="17.80" r="0.95"/><circle cx="913.58" cy="115.40" r="0.95"/><circle cx="913.58" cy="213.00" r="0.95"/><circle cx="913.58" cy="421.20" r="0.95"/><circle cx="913.58" cy="518.80" r="0.95"/><circle cx="913.58" cy="616.40" r="0.95"/></g>
<path d="M352.80,357.12 L352.38,356.35 L352.00,355.58 L351.64,354.82 L351.33,354.05 L351.05,353.29 L350.80,352.54 L350.59,351.79 L350.41,351.04 L350.27,350.31 L350.16,349.58 L350.09,348.85 L350.05,348.14 L350.05,347.43 L350.08,346.74 L350.15,346.06 L350.25,345.38 L350.38,344.72 L350.54,344.08 L350.74,343.44 L350.97,342.82 L351.22,342.21 L351.51,341.62 L351.82,341.05 L352.17,340.49 L352.54,339.94 L352.94,339.42 L353.36,338.91 L353.81,338.42 L354.29,337.95 L354.78,337.49 L355.30,337.06 L355.84,336.65 L356.40,336.26 L356.98,335.88 L357.58,335.53 L358.20,335.20 L358.83,334.90 L359.48,334.61 L360.14,334.35 L360.82,334.11 L361.51,333.89 L362.22,333.69 L362.93,333.52 L363.66,333.37 L364.39,333.25 L365.13,333.15 L365.88,333.07 L366.64,333.02 L367.40,332.99 L368.17,332.98 L368.95,333.00 L369.72,333.04 L370.51,333.11 L371.29,333.20 L372.07,333.31 L372.86,333.45 L373.65,333.61 L374.43,333.79 L375.22,334.00 L376.00,334.22 L376.78,334.48 L377.57,334.75 L378.34,335.05 L379.12,335.37 L379.89,335.71 L380.65,336.07 L381.42,336.45 L382.17,336.85 L382.93,337.28 L383.67,337.72 L384.41,338.18 L385.15,338.66 L385.87,339.16 L386.59,339.68 L387.31,340.21 L388.01,340.76 L388.71,341.33 L389.40,341.92 L390.08,342.51 L390.76,343.13 L391.42,343.76 L392.07,344.40 L392.72,345.05 L393.35,345.72 L393.98,346.40 L394.60,347.09 L395.20,347.79 L395.79,348.49 L396.38,349.21 L396.95,349.94 L397.51,350.67 L398.05,351.41 L398.59,352.16 L399.11,352.91 L399.62,353.67 L400.12,354.43 L400.60,355.20 L401.07,355.97 L401.52,356.73 L401.96,357.50 L402.38,358.27 L402.79,359.04 L403.18,359.81 L403.55,360.58 L403.91,361.34 L404.24,362.10 L404.57,362.86 L404.87,363.61 L405.15,364.35 L405.41,365.09 L405.66,365.82 L405.88,366.55 L406.08,367.26 L406.26,367.97 L406.42,368.66 L406.56,369.35 L406.67,370.02 L406.76,370.68 L406.82,371.33 L406.86,371.96 L406.88,372.58 L406.87,373.18 L406.83,373.77 L406.77,374.34 L406.68,374.90 L406.57,375.44 L406.43,375.95 L406.26,376.46 L406.06,376.94 L405.83,377.40 L405.58,377.84 L405.30,378.26 L404.98,378.66 L404.64,379.04 L404.27,379.40 L403.88,379.73 L403.45,380.05 L402.99,380.33 L402.51,380.60 L402.00,380.84 L401.46,381.06 L400.89,381.25 L400.29,381.42 L399.67,381.56 L399.02,381.68 L398.34,381.78 L397.64,381.85 L396.91,381.89 L396.16,381.91 L395.38,381.90 L394.58,381.87 L393.76,381.81 L392.92,381.73 L392.06,381.63 L391.17,381.49 L390.27,381.34 L389.35,381.16 L388.42,380.95 L387.47,380.72 L386.51,380.47 L385.53,380.19 L384.54,379.89 L383.55,379.57 L382.54,379.22 L381.53,378.86 L380.51,378.47 L379.48,378.06 L378.46,377.62 L377.43,377.17 L376.40,376.70 L375.37,376.21 L374.35,375.70 L373.33,375.17 L372.32,374.62 L371.31,374.06 L370.31,373.48 L369.32,372.88 L368.35,372.27 L367.39,371.64 L366.44,371.00 L365.51,370.35 L364.59,369.68 L363.70,369.01 L362.82,368.32 L361.96,367.62 L361.13,366.91 L360.32,366.19 L359.54,365.46 L358.78,364.72 L358.05,363.98 L357.34,363.23 L356.67,362.48 L356.02,361.72 L355.41,360.96 L354.82,360.20 L354.27,359.43 L353.75,358.66 L353.26,357.89 L352.80,357.12Z" fill="none" stroke="#2ab07f" stroke-width="1.9"/>
<path d="M1097.69,94.45 L1099.69,95.08 L1101.68,95.71 L1103.68,96.34 L1105.68,96.97 L1107.67,97.61 L1109.67,98.24 L1111.66,98.87 L1113.66,99.51 L1115.65,100.14 L1117.64,100.78 L1119.64,101.42 L1121.63,102.05 L1123.62,102.69 L1125.61,103.33 L1127.60,103.97 L1129.59,104.61 L1131.58,105.25 L1133.56,105.89 L1135.55,106.53 L1137.53,107.17 L1139.52,107.82 L1141.50,108.46 L1143.48,109.10 L1145.46,109.75 L1147.43,110.39 L1149.41,111.04 L1151.38,111.68 L1153.35,112.33 L1155.32,112.98 L1157.29,113.62 L1159.26,114.27 L1161.22,114.92 L1163.19,115.57 L1165.15,116.22 L1167.10,116.86 L1169.06,117.51 L1171.01,118.16 L1172.96,118.81 L1174.91,119.46 L1176.86,120.11 L1178.80,120.77 L1180.75,121.42 L1182.68,122.07 L1184.62,122.72 L1186.56,123.37 L1188.49,124.03 L1190.41,124.68 L1192.34,125.33 L1194.26,125.99 L1196.18,126.64 L1198.10,127.29 L1200.02,127.95 L1201.93,128.60 L1203.84,129.26 L1205.74,129.91 L1207.64,130.57 L1209.54,131.22 L1211.44,131.88 L1213.33,132.54 L1215.22,133.19 L1217.11,133.85 L1218.99,134.51 L1220.87,135.16 L1222.75,135.82 L1224.62,136.48 L1226.49,137.13 L1228.35,137.79 L1230.22,138.45 L1232.07,139.11 L1233.93,139.77 L1235.78,140.43 L1237.63,141.08 L1239.47,141.74 L1241.31,142.40 L1243.15,143.06 L1244.98,143.72 L1246.81,144.38 M556.58,145.04 L555.06,145.70 L553.54,146.36 L552.03,147.02 L550.52,147.68 L549.02,148.34 L547.52,149.00 L546.02,149.66 L544.53,150.33 L543.04,150.99 L541.56,151.65 L540.08,152.31 L538.60,152.97 L537.13,153.63 L535.66,154.30 L534.20,154.96 L532.74,155.62 L531.29,156.28 L529.84,156.94 L528.39,157.61 L526.95,158.27 L525.52,158.93 L524.09,159.60 L522.66,160.26 L521.24,160.92 L519.82,161.58 L518.40,162.25 L517.00,162.91 L515.59,163.58 L514.19,164.24 L512.80,164.90 L511.41,165.57 L510.02,166.23 L508.64,166.89 L507.27,167.56 L505.89,168.22 L504.53,168.89 L503.17,169.55 L501.81,170.22 L500.46,170.88 L499.11,171.55 L497.77,172.21 L496.43,172.88 L495.10,173.54 L493.78,174.21 L492.45,174.87 L491.14,175.54 L489.82,176.20 L488.52,176.87 L487.22,177.53 L485.92,178.20 L484.63,178.86 L483.34,179.53 L482.06,180.20 L480.79,180.86 L479.52,181.53 L478.25,182.19 L476.99,182.86 L475.74,183.53 L474.49,184.19 L473.24,184.86 L472.01,185.52 L470.77,186.19 L469.54,186.86 L468.32,187.52 L467.10,188.19 L465.89,188.86 L464.69,189.52 L463.49,190.19 L462.29,190.86 L461.10,191.52 L459.92,192.19 L458.74,192.86 L457.57,193.53 L456.40,194.19 L455.24,194.86 L454.08,195.53 L452.93,196.19 L451.79,196.86 L450.65,197.53 L449.51,198.20 L448.39,198.86 L447.26,199.53 L446.15,200.20 L445.04,200.87 L443.93,201.53 L442.83,202.20 L441.74,202.87 L440.65,203.54 L439.57,204.21 L438.50,204.87 L437.43,205.54 L436.36,206.21 L435.31,206.88 L434.25,207.55 L433.21,208.21 L432.17,208.88 L431.13,209.55 L430.11,210.22 L429.08,210.89 L428.07,211.56 L427.06,212.22 L426.05,212.89 L425.06,213.56 L424.06,214.23 L423.08,214.90 L422.10,215.57 L421.13,216.24 L420.16,216.90 L419.20,217.57 L418.24,218.24 L417.29,218.91 L416.35,219.58 L415.41,220.25 L414.48,220.92 L413.56,221.59 L412.64,222.25 L411.73,222.92 L410.82,223.59 L409.93,224.26 L409.03,224.93 L408.15,225.60 L407.27,226.27 L406.39,226.94 L405.53,227.61 L404.67,228.28 L403.81,228.95 L402.96,229.62 L402.12,230.28 L401.29,230.95 L400.46,231.62 L399.63,232.29 L398.82,232.96 L398.01,233.63 L397.21,234.30 L396.41,234.97 L395.62,235.64 L394.83,236.31 L394.06,236.98 L393.29,237.65 L392.52,238.32 L391.77,238.99 L391.01,239.66 L390.27,240.33 L389.53,241.00 L388.80,241.67 L388.08,242.34 L387.36,243.01 L386.65,243.68 L385.94,244.35 L385.24,245.02 L384.55,245.69 L383.87,246.36 L383.19,247.03 L382.52,247.70 L381.85,248.37 L381.20,249.04 L380.55,249.71 L379.90,250.38 L379.26,251.05 L378.63,251.72 L378.01,252.39 L377.39,253.06 L376.78,253.73 L376.18,254.40 L375.58,255.07 L374.99,255.74 L374.40,256.41 L373.83,257.08 L373.26,257.75 L372.69,258.42 L372.14,259.09 L371.59,259.76 L371.05,260.43 L370.51,261.10 L369.98,261.77 L369.46,262.44 L368.94,263.11 L368.43,263.78 L367.93,264.45 L367.44,265.12 L366.95,265.79 L366.47,266.46 L366.00,267.13 L365.53,267.80 L365.07,268.47 L364.62,269.14 L364.17,269.81 L363.73,270.48 L363.30,271.15 L362.88,271.82 L362.46,272.50 L362.05,273.17 L361.64,273.84 L361.24,274.51 L360.85,275.18 L360.47,275.85 L360.09,276.52 L359.73,277.19 L359.36,277.86 L359.01,278.53 L358.66,279.20 L358.32,279.87 L357.99,280.54 L357.66,281.21 L357.34,281.88 L357.03,282.55 L356.72,283.22 L356.42,283.90 L356.13,284.57 L355.84,285.24 L355.57,285.91 L355.30,286.58 L355.03,287.25 L354.78,287.92 L354.53,288.59 L354.29,289.26 L354.05,289.93 L353.82,290.60 L353.60,291.27 L353.39,291.94 L353.18,292.62 L352.98,293.29 L352.79,293.96 L352.60,294.63 L352.43,295.30 L352.25,295.97 L352.09,296.64 L351.93,297.31 L351.78,297.98 L351.64,298.65 L351.51,299.32 L351.38,299.99 L351.26,300.67 L351.14,301.34 L351.04,302.01 L350.94,302.68 L350.84,303.35 L350.76,304.02 L350.68,304.69 L350.61,305.36 L350.55,306.03 L350.49,306.70 L350.44,307.37 L350.40,308.04 L350.36,308.72 L350.33,309.39 L350.31,310.06 L350.30,310.73 L350.29,311.40 L350.29,312.07 L350.30,312.74 L350.31,313.41 L350.34,314.08 L350.36,314.75 L350.40,315.42 L350.44,316.10 L350.49,316.77 L350.55,317.44 L350.62,318.11 L350.69,318.78 L350.77,319.45 L350.85,320.12 L350.95,320.79 L351.05,321.46 L351.16,322.13 L351.27,322.80 L351.39,323.48 L351.52,324.15 L351.66,324.82 L351.80,325.49 L351.95,326.16 L352.11,326.83 L352.27,327.50 L352.45,328.17 L352.62,328.84 L352.81,329.51 L353.00,330.18 L353.20,330.86 L353.41,331.53 L353.63,332.20 L353.85,332.87 L354.08,333.54 L354.31,334.21 L354.56,334.88 L354.81,335.55 L355.06,336.22 L355.33,336.89 L355.60,337.56 L355.88,338.24 L356.16,338.91 L356.45,339.58 L356.75,340.25 L357.06,340.92 L357.38,341.59 L357.70,342.26 L358.02,342.93 L358.36,343.60 L358.70,344.27 L359.05,344.94 L359.41,345.61 L359.77,346.29 L360.14,346.96 L360.52,347.63 L360.90,348.30 L361.29,348.97 L361.69,349.64 L362.10,350.31 L362.51,350.98 L362.93,351.65 L363.35,352.32 L363.79,352.99 L364.23,353.66 L364.67,354.33 L365.13,355.01 L365.59,355.68 L366.06,356.35 L366.53,357.02 L367.01,357.69 L367.50,358.36 L368.00,359.03 L368.50,359.70" fill="none" stroke="#2ab07f" stroke-width="1.5" stroke-dasharray="1.5 1.8"/>
<path d="M1041.3,77.0 L1097.3,93.7" stroke="#2ab07f" stroke-width="1.6" fill="none"/>
<circle cx="1041.3" cy="77.0" r="1.3" fill="#ff5a3a"/>
<path d="M642.8,122.2 L705.6,104.2 M754.6,84.0 L775.0,80.5 M929.3,88.5 L942.7,93.0 M973.8,75.5 L996.0,81.2 M1038.3,98.3 L1078.0,113.4 M1156.0,112.5 L1164.8,113.2 M1189.0,211.0 L1201.7,207.6 M853.0,45.0 L873.0,39.0 M641.1,112.8 Q652.8,113.4 652.8,114.6 Q653.3,116.5 652.6,117.6" stroke="#8c8c8c" stroke-width="1.5" fill="none" stroke-linecap="butt"/>
<path d="M575.87,143.14 L573.82,143.81 L571.76,144.48 L569.71,145.15 L567.66,145.82 L565.61,146.50 L563.57,147.17 L561.52,147.85 L559.48,148.53 L557.44,149.20 L555.40,149.88 L553.36,150.56 L551.32,151.25 L549.29,151.93 L547.26,152.61 L545.23,153.30 L543.20,153.98 L541.18,154.67 L539.15,155.36 L537.13,156.04 L535.12,156.73 L533.10,157.43 L531.09,158.12 L529.08,158.81 L527.08,159.50 L525.08,160.20 L523.08,160.89 L521.08,161.59 L519.09,162.28 L517.10,162.98 L515.12,163.68 L513.13,164.38 L511.16,165.08 L509.18,165.78 L507.21,166.48 L505.24,167.19 L503.28,167.89 L501.32,168.59 L499.37,169.30 L497.42,170.00 L495.47,170.71 L493.53,171.42 M1313.15,172.12 L1314.38,172.83 L1315.61,173.54 L1316.83,174.25 L1318.05,174.96 L1319.26,175.67 L1320.47,176.38 L1321.67,177.09 L1322.87,177.80 L1324.07,178.52 L1325.26,179.23 L1326.44,179.95 L1327.62,180.66 L1328.79,181.38 L1329.96,182.09 L1331.13,182.81 L1332.28,183.53 L1333.44,184.24 L1334.59,184.96 L1335.73,185.68 L1336.87,186.40 L1338.00,187.12 L1339.12,187.84 L1340.25,188.56 L1341.36,189.28 L1342.47,190.00 L1343.57,190.72 L1344.67,191.44 L1345.76,192.17 L1346.85,192.89 L1347.93,193.61 L1349.01,194.34 L1350.08,195.06 L1351.14,195.79 L1352.20,196.51 L1353.25,197.24 L1354.29,197.97 L1355.33,198.69 L1356.36,199.42 L1357.39,200.15 L1358.41,200.87 L1359.42,201.60 L1360.43,202.33 L1361.43,203.06 L1362.43,203.79 L1363.41,204.52 L1364.40,205.25 L1365.37,205.98 L1366.34,206.71 L1367.30,207.44 L1368.26,208.17 L1369.21,208.90 L1370.15,209.63 L1371.09,210.37 L1372.01,211.10 L1372.94,211.83 L1373.85,212.56 L1374.76,213.30 L1375.66,214.03 L1376.56,214.77 L1377.45,215.50 L1378.33,216.23 L1379.20,216.97 L1380.07,217.70 L1380.93,218.44 L1381.78,219.18 L1382.63,219.91 L1383.47,220.65 L1384.30,221.38 L1385.13,222.12 L1385.94,222.86 L1386.75,223.60 L1387.56,224.33 L1388.35,225.07 L1389.14,225.81 L1389.92,226.55 L1390.70,227.28 L1391.47,228.02 L1392.22,228.76 L1392.98,229.50 L1393.72,230.24 L1394.46,230.98 L1395.19,231.72 L1395.91,232.46 L1396.63,233.20 L1397.33,233.94 L1398.03,234.68 L1398.73,235.42 L1399.41,236.16 L1400.09,236.90 L1400.76,237.64 L1401.42,238.39 L1402.07,239.13 L1402.72,239.87 L1403.36,240.61 L1403.99,241.35 L1404.61,242.10 L1405.23,242.84 L1405.84,243.58 L1406.43,244.32 L1407.03,245.07 L1407.61,245.81 L1408.19,246.55 L1408.76,247.30 L1409.32,248.04 L1409.87,248.79 L1410.41,249.53 L1410.95,250.27 L1411.48,251.02 L1412.00,251.76 L1412.51,252.51 L1413.02,253.25 L1413.52,254.00 L1414.01,254.74 L1414.49,255.49 L1414.96,256.23 L1415.42,256.98 L1415.88,257.72 L1416.33,258.47 L1416.77,259.21 L1417.20,259.96 L1417.63,260.71 L1418.04,261.45 L1418.45,262.20 L1418.85,262.95 L1419.24,263.69 L1419.63,264.44 L1420.00,265.18 L1420.37,265.93 L1420.73,266.68 L1421.08,267.43 L1421.42,268.17 L1421.75,268.92 L1422.08,269.67 L1422.40,270.41 L1422.71,271.16 L1423.01,271.91 L1423.30,272.66 L1423.59,273.41 L1423.86,274.15 L1424.13,274.90 L1424.39,275.65 L1424.64,276.40 L1424.88,277.15 L1425.12,277.89 L1425.34,278.64 L1425.56,279.39 L1425.77,280.14 L1425.97,280.89 L1426.16,281.64 L1426.35,282.39 L1426.52,283.13 L1426.69,283.88 L1426.85,284.63 L1427.00,285.38 L1427.14,286.13 L1427.27,286.88 L1427.40,287.63 L1427.51,288.38 L1427.62,289.13 L1427.72,289.88 L1427.81,290.63 L1427.90,291.37 L1427.97,292.12 L1428.03,292.87 L1428.09,293.62 L1428.14,294.37 L1428.18,295.12 L1428.21,295.87 L1428.24,296.62 L1428.25,297.37 L1428.26,298.12 L1428.25,298.87 L1428.24,299.62 L1428.22,300.37 L1428.20,301.12 L1428.16,301.87 L1428.12,302.62 L1428.06,303.37 L1428.00,304.12 L1427.93,304.87 L1427.85,305.62 L1427.76,306.37 L1427.67,307.12 L1427.56,307.87 L1427.45,308.62 L1427.33,309.37 L1427.20,310.12 L1427.06,310.87 L1426.92,311.63 L1426.76,312.38 L1426.60,313.13 L1426.42,313.88 L1426.24,314.63 L1426.05,315.38 L1425.86,316.13 L1425.65,316.88 L1425.44,317.63 L1425.21,318.38 L1424.98,319.13 L1424.74,319.88 L1424.49,320.63 L1424.24,321.38 L1423.97,322.13 L1423.70,322.88 L1423.41,323.63 L1423.12,324.38 L1422.82,325.13 L1422.52,325.88 L1422.20,326.63 L1421.88,327.38 L1421.54,328.13 L1421.20,328.88 L1420.85,329.64 L1420.49,330.39 L1420.13,331.14 L1419.75,331.89 L1419.37,332.64 L1418.98,333.39 L1418.58,334.14 L1418.17,334.89 L1417.75,335.64 L1417.33,336.39 L1416.89,337.14 L1416.45,337.89 L1416.00,338.64 L1415.54,339.39 L1415.08,340.14 L1414.60,340.89 L1414.12,341.64 L1413.63,342.39 L1413.13,343.14 L1412.62,343.89 L1412.10,344.64 L1411.58,345.39 L1411.04,346.14 L1410.50,346.89 L1409.95,347.64 L1409.40,348.39 L1408.83,349.13 L1408.26,349.88 L1407.68,350.63 L1407.09,351.38 L1406.49,352.13 L1405.88,352.88 L1405.27,353.63 L1404.65,354.38 L1404.02,355.13 L1403.38,355.88 L1402.73,356.63 L1402.08,357.38 L1401.41,358.12 L1400.74,358.87 L1400.06,359.62 L1399.38,360.37 L1398.68,361.12 L1397.98,361.87 L1397.27,362.61 L1396.55,363.36 L1395.83,364.11 L1395.09,364.86 L1394.35,365.61 L1393.60,366.36 L1392.84,367.10 L1392.08,367.85 L1391.30,368.60 L1390.52,369.35 L1389.73,370.09 L1388.94,370.84 L1388.13,371.59 L1387.32,372.34 L1386.50,373.08 L1385.67,373.83 L1384.84,374.58 L1383.99,375.32 L1383.14,376.07 L1382.28,376.82 L1381.42,377.56 L1380.54,378.31 L1379.66,379.05 L1378.78,379.80 L1377.88,380.55 L1376.98,381.29 L1376.06,382.04 L1375.15,382.78 L1374.22,383.53 L1373.29,384.27 L1372.35,385.02 L1371.40,385.76 L1370.44,386.51 L1369.48,387.25 L1368.51,388.00 L1367.53,388.74 L1366.55,389.49 L1365.55,390.23 L1364.56,390.98 L1363.55,391.72 L1362.54,392.46 L1361.51,393.21 L1360.49,393.95 L1359.45,394.69 L1358.41,395.44 L1357.36,396.18 L1356.30,396.92 L1355.24,397.67 L1354.17,398.41 L1353.09,399.15 L1352.01,399.89 L1350.92,400.63 L1349.82,401.38 L1348.71,402.12 L1347.60,402.86 L1346.48,403.60 L1345.36,404.34 L1344.23,405.08 L1343.09,405.82 L1341.94,406.56 L1340.79,407.30 L1339.63,408.04 L1338.46,408.78 L1337.29,409.52 L1336.11,410.26 L1334.93,411.00 L1333.74,411.74 L1332.54,412.48 L1331.33,413.22 L1330.12,413.96 L1328.90,414.69 L1327.68,415.43 L1326.45,416.17 L1325.21,416.91 L1323.97,417.64 L1322.72,418.38 L1321.46,419.12 L1320.20,419.85 L1318.93,420.59 L1317.66,421.32 L1316.38,422.06 L1315.09,422.79 L1313.80,423.53 L1312.50,424.26 L1311.20,425.00 L1309.89,425.73 L1308.57,426.47 L1307.25,427.20 L1305.92,427.93 L1304.59,428.67 L1303.25,429.40 L1301.90,430.13 L1300.55,430.86 L1299.20,431.59 L1297.83,432.33 L1296.47,433.06 L1295.09,433.79 L1293.71,434.52 L1292.33,435.25 L1290.94,435.98 L1289.54,436.71 L1288.14,437.44 L1286.74,438.16 L1285.32,438.89 L1283.91,439.62 L1282.49,440.35 L1281.06,441.08 L1279.63,441.80 L1278.19,442.53 L1276.75,443.25 L1275.30,443.98 L1273.85,444.70 L1272.39,445.43 L1270.93,446.15 L1269.46,446.88 L1267.99,447.60 L1266.51,448.32 L1265.03,449.05 L1263.54,449.77 L1262.05,450.49 L1260.56,451.21 L1259.06,451.93 L1257.55,452.65 L1256.04,453.37 L1254.53,454.09 L1253.01,454.81 L1251.49,455.53 L1249.96,456.25 L1248.43,456.96 L1246.89,457.68 L1245.35,458.39 L1243.81,459.11 L1242.26,459.83 L1240.71,460.54 L1239.16,461.25 L1237.60,461.97 L1236.03,462.68 L1234.47,463.39 L1232.89,464.10 L1231.32,464.81 L1229.74,465.52 L1228.16,466.23 L1226.57,466.94 L1224.98,467.65 L1223.39,468.36 L1221.79,469.07 L1220.19,469.77 L1218.59,470.48 L1216.98,471.18 L1215.38,471.89 L1213.76,472.59 L1212.15,473.29 L1210.53,473.99 L1208.91,474.70 L1207.28,475.40 L1205.65,476.09 L1204.02,476.79 L1202.39,477.49 L1200.75,478.19 L1199.12,478.89 L1197.47,479.58 L1195.83,480.28 L1194.18,480.97 L1192.54,481.66 L1190.89,482.35 L1189.23,483.04 L1187.58,483.73 L1185.92,484.42 L1184.26,485.11 L1182.60,485.80 L1180.94,486.48 L1179.27,487.17 L1177.60,487.85 L1175.93,488.54 L1174.26,489.22 L1172.59,489.90 L1170.92,490.58 L1169.24,491.26 L1167.57,491.93 L1165.89,492.61 L1164.21,493.29 L1162.53,493.96 L1160.85,494.63 L1159.17,495.30 L1157.48,495.97 L1155.80,496.64 L1154.12,497.31 L1152.43,497.98 L1150.74,498.64 L1149.06,499.30 L1147.37,499.97 L1145.68,500.63 L1144.00,501.28 L1142.31,501.94 L1140.62,502.60 L1138.93,503.25 L1137.25,503.91 L1135.56,504.56 L1133.87,505.21 L1132.19,505.85 L1130.50,506.50 M725.00,91.69 L722.74,92.29 L720.47,92.91 L718.18,93.53 L715.88,94.15 L713.57,94.78 L711.24,95.42 L708.91,96.06 L706.56,96.71 L704.20,97.36 L701.83,98.02 L699.44,98.68 L697.05,99.34 L694.65,100.01 L692.24,100.69 L689.82,101.37 L687.39,102.05 L684.95,102.74 L682.51,103.43 L680.06,104.13 L677.60,104.83 L675.13,105.53 L672.66,106.24 L670.18,106.95 L667.70,107.66 L665.21,108.38 L662.71,109.10 L660.21,109.82 L657.71,110.55 L655.20,111.28 L652.69,112.01 L650.17,112.75 L647.65,113.48 L645.12,114.22 L642.60,114.97 L640.07,115.71 L637.54,116.46 L635.00,117.21 L632.46,117.96 L629.93,118.72 L627.39,119.47 L624.84,120.23 L622.30,121.00 L619.76,121.76 L617.21,122.52 L614.67,123.29 L612.12,124.06 M1195.34,124.83 L1196.99,125.61 L1198.65,126.38 L1200.30,127.16 L1201.96,127.94 L1203.61,128.72 L1205.27,129.50 L1206.92,130.28 L1208.57,131.07 L1210.22,131.85 L1211.87,132.64 L1213.51,133.43 L1215.16,134.22 L1216.80,135.01 L1218.44,135.81 L1220.08,136.60 L1221.71,137.40 L1223.35,138.19 L1224.98,138.99 L1226.60,139.79 L1228.23,140.59 L1229.85,141.39 L1231.47,142.20 L1233.08,143.00 L1234.69,143.81 L1236.30,144.61 L1237.90,145.42 L1239.50,146.23 L1241.10,147.04 L1242.69,147.85 L1244.28,148.66 L1245.86,149.48 L1247.44,150.29 L1249.02,151.10 L1250.59,151.92 L1252.15,152.73 L1253.71,153.55 L1255.27,154.37 L1256.82,155.19 L1258.37,156.01 L1259.91,156.83 L1261.44,157.65 L1262.98,158.47 L1264.50,159.29 L1266.02,160.12 L1267.54,160.94 L1269.05,161.76 L1270.55,162.59 L1272.05,163.42 L1273.54,164.24 L1275.03,165.07 L1276.51,165.90 L1277.98,166.73 L1279.45,167.56 L1280.91,168.39 L1282.37,169.22 L1283.82,170.05 L1285.26,170.88 L1286.69,171.71 L1288.13,172.54 L1289.55,173.38 L1290.97,174.21 L1292.38,175.04 L1293.78,175.88 L1295.18,176.71 L1296.57,177.55 L1297.95,178.39 L1299.32,179.22 L1300.69,180.06 L1302.06,180.90 L1303.41,181.74 L1304.76,182.57 L1306.10,183.41 L1307.43,184.25 L1308.75,185.09 L1310.07,185.93 L1311.38,186.77 L1312.69,187.62 L1313.98,188.46 L1315.27,189.30 L1316.55,190.14 L1317.82,190.98 L1319.08,191.83 L1320.34,192.67 L1321.59,193.51 L1322.83,194.36 L1324.06,195.20 L1325.29,196.05 L1326.50,196.89 L1327.71,197.74 L1328.91,198.58 L1330.10,199.43 L1331.29,200.28 L1332.46,201.12 L1333.63,201.97 L1334.79,202.82 L1335.94,203.66 L1337.08,204.51 L1338.21,205.36 L1339.34,206.21 L1340.45,207.06 L1341.56,207.91 L1342.66,208.76 L1343.75,209.61 L1344.83,210.46 L1345.90,211.31 L1346.96,212.16 L1348.02,213.01 L1349.07,213.86 L1350.10,214.71 L1351.13,215.56 L1352.15,216.41 L1353.16,217.26 L1354.16,218.11 L1355.15,218.97 L1356.13,219.82 L1357.11,220.67 L1358.07,221.52 L1359.02,222.38 L1359.97,223.23 L1360.91,224.08 L1361.83,224.94 L1362.75,225.79 L1363.66,226.65 L1364.56,227.50 L1365.45,228.35 L1366.33,229.21 L1367.20,230.06 L1368.06,230.92 L1368.91,231.77 L1369.75,232.63 L1370.58,233.48 L1371.40,234.34 L1372.22,235.20 L1373.02,236.05 L1373.81,236.91 L1374.60,237.76 L1375.37,238.62 L1376.13,239.48 L1376.89,240.33 L1377.63,241.19 L1378.37,242.05 L1379.09,242.90 L1379.80,243.76 L1380.51,244.62 L1381.20,245.48 L1381.89,246.33 L1382.56,247.19 L1383.23,248.05 L1383.88,248.91 L1384.52,249.77 L1385.16,250.62 L1385.78,251.48 L1386.40,252.34 L1387.00,253.20 L1387.59,254.06 L1388.18,254.92 L1388.75,255.78 L1389.31,256.64 L1389.87,257.50 L1390.41,258.35 L1390.94,259.21 L1391.46,260.07 L1391.98,260.93 L1392.48,261.79 L1392.97,262.65 L1393.45,263.51 L1393.92,264.37 L1394.38,265.23 L1394.83,266.09 L1395.27,266.95 L1395.69,267.81 L1396.11,268.67 L1396.52,269.53 L1396.92,270.39 L1397.30,271.26 L1397.68,272.12 L1398.05,272.98 L1398.40,273.84 L1398.75,274.70 L1399.08,275.56 L1399.40,276.42 L1399.72,277.28 L1400.02,278.14 L1400.31,279.00 L1400.59,279.87 L1400.86,280.73 L1401.12,281.59 L1401.37,282.45 L1401.61,283.31 L1401.84,284.17 L1402.06,285.03 L1402.26,285.90 L1402.46,286.76 L1402.65,287.62 L1402.82,288.48 L1402.99,289.34 L1403.14,290.21 L1403.28,291.07 L1403.41,291.93 L1403.54,292.79 L1403.65,293.65 L1403.75,294.52 L1403.84,295.38 L1403.91,296.24 L1403.98,297.10 L1404.04,297.97 L1404.09,298.83 L1404.12,299.69 L1404.15,300.55 L1404.16,301.41 L1404.16,302.28 L1404.16,303.14 L1404.14,304.00 L1404.11,304.86 L1404.07,305.73 L1404.02,306.59 L1403.96,307.45 L1403.89,308.31 L1403.81,309.18 L1403.71,310.04 L1403.61,310.90 L1403.49,311.77 L1403.37,312.63 L1403.23,313.49 L1403.09,314.35 L1402.93,315.22 L1402.76,316.08 L1402.58,316.94 L1402.39,317.80 L1402.19,318.67 L1401.98,319.53 L1401.76,320.39 L1401.53,321.26 L1401.28,322.12 L1401.03,322.98 L1400.77,323.84 L1400.49,324.71 L1400.20,325.57 L1399.91,326.43 L1399.60,327.29 L1399.28,328.16 L1398.96,329.02 L1398.62,329.88 L1398.27,330.74 L1397.91,331.61 L1397.54,332.47 L1397.15,333.33 L1396.76,334.20 L1396.36,335.06 L1395.95,335.92 L1395.52,336.78 L1395.09,337.65 L1394.64,338.51 L1394.19,339.37 L1393.72,340.23 L1393.25,341.09 L1392.76,341.96 L1392.26,342.82 L1391.75,343.68 L1391.24,344.54 L1390.71,345.41 L1390.17,346.27 L1389.62,347.13 L1389.06,347.99 L1388.49,348.85 L1387.91,349.72 L1387.32,350.58 L1386.71,351.44 L1386.10,352.30 L1385.48,353.16 L1384.85,354.03 L1384.20,354.89 L1383.55,355.75 L1382.89,356.61 L1382.21,357.47 L1381.53,358.33 L1380.84,359.20 L1380.13,360.06 L1379.42,360.92 L1378.69,361.78 L1377.96,362.64 L1377.22,363.50 L1376.46,364.36 L1375.70,365.22 L1374.92,366.08 L1374.14,366.95 L1373.34,367.81 L1372.54,368.67 L1371.72,369.53 L1370.90,370.39 L1370.06,371.25 L1369.22,372.11 L1368.36,372.97 L1367.50,373.83 L1366.62,374.69 L1365.74,375.55 L1364.85,376.41 L1363.94,377.27 L1363.03,378.13 L1362.11,378.99 L1361.17,379.85 L1360.23,380.71 L1359.28,381.57 L1358.32,382.43 L1357.35,383.29 L1356.37,384.15 L1355.38,385.00 L1354.38,385.86 L1353.37,386.72 L1352.35,387.58 L1351.32,388.44 L1350.28,389.30 L1349.23,390.16 L1348.18,391.01 L1347.11,391.87 L1346.04,392.73 L1344.95,393.59 L1343.86,394.45 L1342.76,395.30 L1341.64,396.16 L1340.52,397.02 L1339.39,397.88 L1338.25,398.73 L1337.10,399.59 L1335.95,400.45 L1334.78,401.30 L1333.60,402.16 L1332.42,403.02 L1331.23,403.87 L1330.02,404.73 L1328.81,405.58 L1327.59,406.44 L1326.37,407.29 L1325.13,408.15 L1323.88,409.00 L1322.63,409.86 L1321.36,410.71 L1320.09,411.57 L1318.81,412.42 L1317.52,413.28 L1316.23,414.13 L1314.92,414.99 L1313.61,415.84 L1312.28,416.69 L1310.95,417.55 L1309.61,418.40 L1308.27,419.25 L1306.91,420.10 L1305.55,420.96 L1304.17,421.81 L1302.79,422.66 L1301.41,423.51 L1300.01,424.36 L1298.60,425.22 L1297.19,426.07 L1295.77,426.92 L1294.34,427.77 L1292.91,428.62 L1291.46,429.47 L1290.01,430.32 L1288.55,431.17 L1287.09,432.02 L1285.61,432.87 L1284.13,433.71 L1282.64,434.56 L1281.15,435.41 L1279.64,436.26 L1278.13,437.11 L1276.61,437.95 L1275.08,438.80 L1273.55,439.65 L1272.01,440.49 L1270.46,441.34 L1268.91,442.19 L1267.35,443.03 L1265.78,443.88 L1264.20,444.72 L1262.62,445.57 L1261.03,446.41 L1259.43,447.25 L1257.83,448.10 L1256.22,448.94 L1254.60,449.78 L1252.98,450.63 L1251.35,451.47 L1249.71,452.31 L1248.07,453.15 L1246.42,453.99 L1244.77,454.83 L1243.10,455.67 L1241.44,456.51 L1239.76,457.35 L1238.08,458.19 L1236.40,459.03 L1234.70,459.86 L1233.01,460.70 L1231.30,461.54 L1229.59,462.37 L1227.88,463.21 L1226.15,464.05 L1224.43,464.88 L1222.70,465.71 L1220.96,466.55 L1219.21,467.38 L1217.46,468.21 L1215.71,469.05 L1213.95,469.88 L1212.19,470.71 L1210.42,471.54 L1208.64,472.37 L1206.86,473.20 L1205.08,474.03 L1203.29,474.86 L1201.49,475.68 L1199.69,476.51 L1197.89,477.34 L1196.08,478.16 L1194.27,478.99 L1192.45,479.81 L1190.63,480.63 L1188.80,481.46 L1186.97,482.28 L1185.14,483.10 L1183.30,483.92 L1181.46,484.74 L1179.61,485.56 L1177.76,486.38 L1175.90,487.19 L1174.05,488.01 L1172.18,488.82 L1170.32,489.64 L1168.45,490.45 L1166.58,491.26 L1164.70,492.08 L1162.83,492.89 L1160.94,493.70 L1159.06,494.51 L1157.17,495.31 L1155.28,496.12 L1153.39,496.93 L1151.50,497.73 L1149.60,498.53 L1147.70,499.34 L1145.79,500.14 L1143.89,500.94 L1141.98,501.73 L1140.07,502.53 L1138.16,503.33 L1136.25,504.12 L1134.33,504.92 L1132.42,505.71 L1130.50,506.50 M943.04,93.30 L944.12,93.71 L945.21,94.13 L946.30,94.55 L947.40,94.99 L948.51,95.44 L949.62,95.90 L950.74,96.36 L951.86,96.84 L952.99,97.32 L954.13,97.82 L955.27,98.32 L956.41,98.83 L957.56,99.34 L958.72,99.87 L959.88,100.40 L961.05,100.94 L962.22,101.49 L963.40,102.05 L964.58,102.61 L965.76,103.18 L966.95,103.75 L968.15,104.34 L969.35,104.93 L970.55,105.52 L971.76,106.12 L972.98,106.73 L974.19,107.34 L975.42,107.96 L976.64,108.59 L977.87,109.22 L979.10,109.85 L980.34,110.50 L981.58,111.14 L982.82,111.79 L984.07,112.45 L985.32,113.11 L986.58,113.78 L987.83,114.45 L989.09,115.12 L990.35,115.80 L991.62,116.48 L992.89,117.17 L994.16,117.86 L995.43,118.56 L996.70,119.26 L997.98,119.96 L999.26,120.67 L1000.54,121.38 L1001.82,122.09 L1003.11,122.81 L1004.40,123.53 L1005.68,124.26 L1006.97,124.98 L1008.27,125.72 L1009.56,126.45 L1010.85,127.19 L1012.15,127.93 L1013.45,128.67 L1014.74,129.41 L1016.04,130.16 L1017.34,130.91 L1018.64,131.67 L1019.94,132.42 L1021.24,133.18 L1022.54,133.94 L1023.85,134.71 L1025.15,135.47 L1026.45,136.24 L1027.75,137.01 L1029.06,137.79 L1030.36,138.56 L1031.66,139.34 L1032.97,140.12 L1034.27,140.90 L1035.57,141.68 L1036.87,142.47 L1038.18,143.26 L1039.48,144.05 L1040.78,144.84 L1042.08,145.63 L1043.38,146.42 L1044.67,147.22 L1045.97,148.02 L1047.27,148.82 L1048.56,149.62 L1049.86,150.42 L1051.15,151.23 L1052.44,152.03 L1053.73,152.84 L1055.02,153.65 L1056.31,154.46 L1057.60,155.27 L1058.88,156.09 L1060.17,156.90 L1061.45,157.72 L1062.73,158.53 L1064.01,159.35 L1065.28,160.17 L1066.56,160.99 L1067.83,161.82 L1069.10,162.64 L1070.37,163.46 L1071.63,164.29 L1072.90,165.12 L1074.16,165.95 L1075.42,166.77 L1076.68,167.60 L1077.93,168.44 L1079.18,169.27 L1080.43,170.10 L1081.68,170.94 L1082.92,171.77 L1084.17,172.61 L1085.41,173.44 L1086.64,174.28 L1087.87,175.12 L1089.11,175.96 L1090.33,176.80 L1091.56,177.64 L1092.78,178.49 L1094.00,179.33 L1095.21,180.17 L1096.43,181.02 L1097.63,181.87 L1098.84,182.71 L1100.04,183.56 L1101.24,184.41 L1102.44,185.26 L1103.63,186.11 L1104.82,186.96 L1106.00,187.81 L1107.18,188.66 L1108.36,189.51 L1109.54,190.36 L1110.71,191.22 L1111.87,192.07 L1113.04,192.93 L1114.19,193.78 L1115.35,194.64 L1116.50,195.49 L1117.65,196.35 L1118.79,197.21 L1119.93,198.07 L1121.06,198.93 L1122.20,199.79 L1123.32,200.65 L1124.44,201.51 L1125.56,202.37 L1126.68,203.23 L1127.78,204.09 L1128.89,204.95 L1129.99,205.82 L1131.09,206.68 L1132.18,207.54 L1133.26,208.41 L1134.35,209.27 L1135.42,210.14 L1136.50,211.01 L1137.57,211.87 L1138.63,212.74 L1139.69,213.61 L1140.74,214.47 L1141.79,215.34 L1142.84,216.21 L1143.88,217.08 L1144.91,217.95 L1145.94,218.82 L1146.97,219.69 L1147.99,220.56 L1149.00,221.43 L1150.01,222.30 L1151.01,223.17 L1152.01,224.04 L1153.01,224.91 L1154.00,225.79 L1154.98,226.66 L1155.96,227.53 L1156.93,228.41 L1157.90,229.28 L1158.86,230.15 L1159.82,231.03 L1160.77,231.90 L1161.71,232.78 L1162.65,233.65 L1163.59,234.53 L1164.52,235.40 L1165.44,236.28 L1166.36,237.16 L1167.27,238.03 L1168.18,238.91 L1169.08,239.79 L1169.97,240.67 L1170.86,241.54 L1171.75,242.42 L1172.62,243.30 L1173.50,244.18 L1174.36,245.06 L1175.22,245.94 L1176.08,246.81 L1176.92,247.69 L1177.77,248.57 L1178.60,249.45 L1179.43,250.33 L1180.26,251.21 L1181.08,252.09 L1181.89,252.97 L1182.69,253.85 L1183.49,254.74 L1184.29,255.62 L1185.07,256.50 L1185.86,257.38 L1186.63,258.26 L1187.40,259.14 L1188.16,260.03 L1188.92,260.91 L1189.67,261.79 L1190.41,262.67 L1191.15,263.56 L1191.88,264.44 L1192.60,265.32 L1193.32,266.20 L1194.03,267.09 L1194.74,267.97 L1195.43,268.85 L1196.13,269.74 L1196.81,270.62 L1197.49,271.51 L1198.16,272.39 L1198.83,273.27 L1199.49,274.16 L1200.14,275.04 L1200.78,275.93 L1201.42,276.81 L1202.06,277.70 L1202.68,278.58 L1203.30,279.47 L1203.91,280.35 L1204.52,281.24 L1205.12,282.12 L1205.71,283.01 L1206.29,283.90 L1206.87,284.78 L1207.44,285.67 L1208.01,286.55 L1208.56,287.44 L1209.11,288.32 L1209.66,289.21 L1210.19,290.10 L1210.72,290.98 L1211.25,291.87 L1211.76,292.76 L1212.27,293.64 L1212.77,294.53 L1213.27,295.42 L1213.76,296.30 L1214.24,297.19 L1214.71,298.08 L1215.18,298.96 L1215.64,299.85 L1216.09,300.74 L1216.54,301.62 L1216.97,302.51 L1217.40,303.40 L1217.83,304.29 L1218.25,305.17 L1218.66,306.06 L1219.06,306.95 L1219.45,307.83 L1219.84,308.72 L1220.22,309.61 L1220.60,310.50 L1220.96,311.38 L1221.32,312.27 L1221.68,313.16 L1222.02,314.05 L1222.36,314.93 L1222.69,315.82 L1223.01,316.71 L1223.33,317.60 L1223.64,318.48 L1223.94,319.37 L1224.23,320.26 L1224.52,321.15 L1224.80,322.03 L1225.07,322.92 L1225.34,323.81 L1225.60,324.70 L1225.85,325.58 L1226.09,326.47 L1226.33,327.36 L1226.55,328.25 L1226.77,329.13 L1226.99,330.02 L1227.19,330.91 L1227.39,331.80 L1227.59,332.68 L1227.77,333.57 L1227.95,334.46 L1228.12,335.34 L1228.28,336.23 L1228.43,337.12 L1228.58,338.01 L1228.72,338.89 L1228.85,339.78 L1228.98,340.67 L1229.10,341.55 L1229.21,342.44 L1229.31,343.33 L1229.41,344.21 L1229.49,345.10 L1229.57,345.99 L1229.65,346.87 L1229.71,347.76 L1229.77,348.65 L1229.83,349.53 L1229.87,350.42 L1229.91,351.31 L1229.94,352.19 L1229.96,353.08 L1229.97,353.96 L1229.98,354.85 L1229.98,355.74 L1229.97,356.62 L1229.96,357.51 L1229.93,358.39 L1229.90,359.28 L1229.87,360.16 L1229.82,361.05 L1229.77,361.93 L1229.71,362.82 L1229.65,363.70 L1229.57,364.59 L1229.49,365.47 L1229.40,366.36 L1229.31,367.24 L1229.21,368.13 L1229.10,369.01 L1228.98,369.89 L1228.85,370.78 L1228.72,371.66 L1228.58,372.54 L1228.44,373.43 L1228.28,374.31 L1228.12,375.19 L1227.95,376.08 L1227.78,376.96 L1227.60,377.84 L1227.41,378.72 L1227.21,379.61 L1227.00,380.49 L1226.79,381.37 L1226.57,382.25 L1226.35,383.13 L1226.12,384.02 L1225.88,384.90 L1225.63,385.78 L1225.38,386.66 L1225.11,387.54 L1224.85,388.42 L1224.57,389.30 L1224.29,390.18 L1224.00,391.06 L1223.70,391.94 L1223.40,392.82 L1223.09,393.70 L1222.77,394.58 L1222.45,395.46 L1222.12,396.33 L1221.78,397.21 L1221.43,398.09 L1221.08,398.97 L1220.72,399.85 L1220.36,400.72 L1219.98,401.60 L1219.61,402.48 L1219.22,403.35 L1218.83,404.23 L1218.43,405.11 L1218.02,405.98 L1217.61,406.86 L1217.19,407.73 L1216.76,408.61 L1216.33,409.48 L1215.89,410.36 L1215.44,411.23 L1214.99,412.10 L1214.53,412.98 L1214.06,413.85 L1213.59,414.72 L1213.11,415.59 L1212.63,416.47 L1212.13,417.34 L1211.64,418.21 L1211.13,419.08 L1210.62,419.95 L1210.10,420.82 L1209.58,421.69 L1209.05,422.56 L1208.51,423.43 L1207.97,424.30 L1207.42,425.17 L1206.86,426.03 L1206.30,426.90 L1205.74,427.77 L1205.16,428.63 L1204.58,429.50 L1204.00,430.37 L1203.41,431.23 L1202.81,432.10 L1202.20,432.96 L1201.59,433.82 L1200.98,434.69 L1200.36,435.55 L1199.73,436.41 L1199.10,437.27 L1198.46,438.14 L1197.81,439.00 L1197.17,439.86 L1196.51,440.72 L1195.85,441.57 L1195.18,442.43 L1194.51,443.29 L1193.83,444.15 L1193.15,445.01 L1192.46,445.86 L1191.77,446.72 L1191.07,447.57 L1190.36,448.43 L1189.65,449.28 L1188.94,450.13 L1188.22,450.99 L1187.49,451.84 L1186.76,452.69 L1186.03,453.54 L1185.29,454.39 L1184.54,455.24 L1183.79,456.09 L1183.04,456.94 L1182.28,457.78 L1181.51,458.63 L1180.74,459.47 L1179.97,460.32 L1179.19,461.16 L1178.41,462.00 L1177.62,462.85 L1176.83,463.69 L1176.03,464.53 L1175.23,465.37 L1174.43,466.21 L1173.62,467.04 L1172.81,467.88 L1171.99,468.72 L1171.17,469.55 L1170.34,470.38 L1169.52,471.22 L1168.68,472.05 L1167.85,472.88 L1167.01,473.71 L1166.17,474.54 L1165.32,475.37 L1164.47,476.19 L1163.61,477.02 L1162.76,477.84 L1161.90,478.66 L1161.04,479.49 L1160.17,480.31 L1159.30,481.13 L1158.43,481.94 L1157.55,482.76 L1156.68,483.58 L1155.80,484.39 L1154.91,485.20 L1154.03,486.01 L1153.14,486.82 L1152.25,487.63 L1151.36,488.44 L1150.46,489.24 L1149.57,490.05 L1148.67,490.85 L1147.77,491.65 L1146.87,492.45 L1145.97,493.24 L1145.06,494.04 L1144.16,494.83 L1143.25,495.63 L1142.34,496.42 L1141.43,497.20 L1140.52,497.99 L1139.61,498.77 L1138.70,499.56 L1137.79,500.34 L1136.88,501.11 L1135.97,501.89 L1135.06,502.66 L1134.14,503.44 L1133.23,504.21 L1132.32,504.97 L1131.41,505.74 L1130.50,506.50 M999.59,88.68 L1001.13,89.45 L1002.68,90.22 L1004.22,90.99 L1005.77,91.77 L1007.32,92.55 L1008.88,93.32 L1010.43,94.11 L1011.98,94.89 L1013.53,95.67 L1015.09,96.46 L1016.64,97.25 L1018.20,98.04 L1019.75,98.83 L1021.31,99.62 L1022.86,100.41 L1024.42,101.21 L1025.97,102.00 L1027.52,102.80 L1029.08,103.60 L1030.63,104.40 L1032.18,105.20 L1033.73,106.00 L1035.29,106.80 L1036.84,107.61 L1038.38,108.41 L1039.93,109.22 L1041.48,110.03 L1043.03,110.83 L1044.57,111.64 L1046.11,112.45 L1047.65,113.26 L1049.19,114.07 L1050.73,114.88 L1052.27,115.70 L1053.81,116.51 L1055.34,117.32 L1056.87,118.14 L1058.40,118.95 L1059.93,119.77 L1061.45,120.59 L1062.98,121.40 L1064.50,122.22 L1066.02,123.04 L1067.54,123.86 L1069.05,124.68 L1070.56,125.50 L1072.07,126.32 L1073.58,127.14 L1075.09,127.96 L1076.59,128.78 L1078.09,129.61 L1079.58,130.43 L1081.08,131.25 L1082.57,132.08 L1084.06,132.90 L1085.54,133.73 L1087.03,134.55 L1088.51,135.38 L1089.98,136.20 L1091.46,137.03 L1092.93,137.86 L1094.40,138.68 L1095.86,139.51 L1097.32,140.34 L1098.78,141.17 L1100.23,142.00 L1101.68,142.83 L1103.13,143.65 L1104.57,144.48 L1106.01,145.31 L1107.45,146.14 L1108.88,146.98 L1110.31,147.81 L1111.74,148.64 L1113.16,149.47 L1114.58,150.30 L1115.99,151.13 L1117.40,151.96 L1118.81,152.80 L1120.21,153.63 L1121.61,154.46 L1123.01,155.30 L1124.40,156.13 L1125.78,156.96 L1127.17,157.80 L1128.54,158.63 L1129.92,159.47 L1131.29,160.30 L1132.65,161.14 L1134.01,161.97 L1135.37,162.81 L1136.72,163.64 L1138.07,164.48 L1139.42,165.31 L1140.75,166.15 L1142.09,166.98 L1143.42,167.82 L1144.74,168.66 L1146.06,169.49 L1147.38,170.33 L1148.69,171.17 L1150.00,172.01 L1151.30,172.84 L1152.60,173.68 L1153.89,174.52 L1155.18,175.36 L1156.46,176.19 L1157.73,177.03 L1159.01,177.87 L1160.27,178.71 L1161.54,179.55 L1162.79,180.39 L1164.05,181.23 L1165.29,182.06 L1166.54,182.90 L1167.77,183.74 L1169.00,184.58 L1170.23,185.42 L1171.45,186.26 L1172.67,187.10 L1173.88,187.94 L1175.08,188.78 L1176.28,189.62 L1177.48,190.46 L1178.66,191.30 L1179.85,192.14 L1181.02,192.98 L1182.20,193.82 L1183.36,194.67 L1184.52,195.51 L1185.68,196.35 L1186.83,197.19 L1187.97,198.03 L1189.11,198.87 L1190.24,199.71 L1191.37,200.55 L1192.49,201.40 L1193.61,202.24 L1194.72,203.08 L1195.82,203.92 L1196.92,204.76 L1198.01,205.60 L1199.10,206.45 L1200.18,207.29 L1201.25,208.13 L1202.32,208.97 L1203.38,209.82 L1204.44,210.66 L1205.49,211.50 L1206.53,212.34 L1207.57,213.19 L1208.60,214.03 L1209.62,214.87 L1210.64,215.71 L1211.65,216.56 L1212.66,217.40 L1213.66,218.24 L1214.65,219.09 L1215.64,219.93 L1216.62,220.77 L1217.60,221.62 L1218.57,222.46 L1219.53,223.30 L1220.48,224.15 L1221.43,224.99 L1222.38,225.84 L1223.31,226.68 L1224.24,227.52 L1225.16,228.37 L1226.08,229.21 L1226.99,230.05 L1227.89,230.90 L1228.79,231.74 L1229.68,232.59 L1230.56,233.43 L1231.44,234.28 L1232.31,235.12 L1233.17,235.96 L1234.03,236.81 L1234.88,237.65 L1235.72,238.50 L1236.56,239.34 L1237.39,240.19 L1238.21,241.03 L1239.03,241.88 L1239.84,242.72 L1240.64,243.56 L1241.43,244.41 L1242.22,245.25 L1243.00,246.10 L1243.78,246.94 L1244.54,247.79 L1245.30,248.63 L1246.06,249.48 L1246.80,250.32 L1247.54,251.17 L1248.27,252.01 L1249.00,252.86 L1249.72,253.70 L1250.43,254.55 L1251.13,255.39 L1251.83,256.24 L1252.52,257.09 L1253.20,257.93 L1253.87,258.78 L1254.54,259.62 L1255.20,260.47 L1255.85,261.31 L1256.50,262.16 L1257.14,263.00 L1257.77,263.85 L1258.39,264.69 L1259.01,265.54 L1259.62,266.39 L1260.22,267.23 L1260.82,268.08 L1261.40,268.92 L1261.98,269.77 L1262.56,270.61 L1263.12,271.46 L1263.68,272.31 L1264.23,273.15 L1264.77,274.00 L1265.31,274.84 L1265.84,275.69 L1266.36,276.53 L1266.87,277.38 L1267.38,278.23 L1267.87,279.07 L1268.37,279.92 L1268.85,280.76 L1269.32,281.61 L1269.79,282.46 L1270.25,283.30 L1270.71,284.15 L1271.15,284.99 L1271.59,285.84 L1272.02,286.69 L1272.44,287.53 L1272.86,288.38 L1273.26,289.23 L1273.66,290.07 L1274.05,290.92 L1274.44,291.76 L1274.82,292.61 L1275.18,293.46 L1275.55,294.30 L1275.90,295.15 L1276.25,296.00 L1276.58,296.84 L1276.91,297.69 L1277.24,298.53 L1277.55,299.38 L1277.86,300.23 L1278.16,301.07 L1278.45,301.92 L1278.73,302.77 L1279.01,303.61 L1279.28,304.46 L1279.54,305.30 L1279.79,306.15 L1280.04,307.00 L1280.28,307.84 L1280.51,308.69 L1280.73,309.54 L1280.94,310.38 L1281.15,311.23 L1281.35,312.08 L1281.54,312.92 L1281.72,313.77 L1281.90,314.61 L1282.06,315.46 L1282.22,316.31 L1282.37,317.15 L1282.52,318.00 L1282.65,318.85 L1282.78,319.69 L1282.90,320.54 L1283.01,321.39 L1283.12,322.23 L1283.22,323.08 L1283.30,323.92 L1283.39,324.77 L1283.46,325.62 L1283.52,326.46 L1283.58,327.31 L1283.63,328.16 L1283.67,329.00 L1283.71,329.85 L1283.73,330.70 L1283.75,331.54 L1283.76,332.39 L1283.76,333.23 L1283.76,334.08 L1283.74,334.93 L1283.72,335.77 L1283.69,336.62 L1283.66,337.47 L1283.61,338.31 L1283.56,339.16 L1283.50,340.01 L1283.43,340.85 L1283.36,341.70 L1283.27,342.54 L1283.18,343.39 L1283.08,344.24 L1282.97,345.08 L1282.86,345.93 L1282.73,346.78 L1282.60,347.62 L1282.46,348.47 L1282.32,349.31 L1282.16,350.16 L1282.00,351.01 L1281.83,351.85 L1281.65,352.70 L1281.47,353.54 L1281.27,354.39 L1281.07,355.24 L1280.86,356.08 L1280.65,356.93 L1280.42,357.77 L1280.19,358.62 L1279.95,359.47 L1279.70,360.31 L1279.44,361.16 L1279.18,362.00 L1278.91,362.85 L1278.63,363.70 L1278.34,364.54 L1278.05,365.39 L1277.75,366.23 L1277.44,367.08 L1277.12,367.93 L1276.79,368.77 L1276.46,369.62 L1276.12,370.46 L1275.77,371.31 L1275.42,372.15 L1275.05,373.00 L1274.68,373.85 L1274.30,374.69 L1273.91,375.54 L1273.52,376.38 L1273.12,377.23 L1272.71,378.07 L1272.29,378.92 L1271.87,379.76 L1271.43,380.61 L1271.00,381.46 L1270.55,382.30 L1270.09,383.15 L1269.63,383.99 L1269.16,384.84 L1268.68,385.68 L1268.20,386.53 L1267.71,387.37 L1267.21,388.22 L1266.70,389.06 L1266.18,389.91 L1265.66,390.75 L1265.13,391.60 L1264.59,392.44 L1264.05,393.29 L1263.50,394.13 L1262.94,394.98 L1262.37,395.82 L1261.80,396.67 L1261.21,397.51 L1260.63,398.36 L1260.03,399.20 L1259.43,400.04 L1258.81,400.89 L1258.20,401.73 L1257.57,402.58 L1256.94,403.42 L1256.30,404.27 L1255.65,405.11 L1255.00,405.96 L1254.34,406.80 L1253.67,407.64 L1252.99,408.49 L1252.31,409.33 L1251.62,410.18 L1250.92,411.02 L1250.22,411.86 L1249.51,412.71 L1248.79,413.55 L1248.06,414.40 L1247.33,415.24 L1246.59,416.08 L1245.85,416.93 L1245.09,417.77 L1244.33,418.61 L1243.56,419.46 L1242.79,420.30 L1242.01,421.14 L1241.22,421.99 L1240.43,422.83 L1239.63,423.67 L1238.82,424.52 L1238.00,425.36 L1237.18,426.20 L1236.35,427.04 L1235.52,427.89 L1234.67,428.73 L1233.82,429.57 L1232.97,430.41 L1232.11,431.26 L1231.24,432.10 L1230.36,432.94 L1229.48,433.78 L1228.59,434.63 L1227.70,435.47 L1226.79,436.31 L1225.89,437.15 L1224.97,437.99 L1224.05,438.84 L1223.12,439.68 L1222.19,440.52 L1221.25,441.36 L1220.30,442.20 L1219.35,443.04 L1218.39,443.88 L1217.42,444.72 L1216.45,445.56 L1215.47,446.41 L1214.49,447.25 L1213.50,448.09 L1212.50,448.93 L1211.50,449.77 L1210.49,450.61 L1209.47,451.45 L1208.45,452.29 L1207.42,453.13 L1206.39,453.97 L1205.35,454.81 L1204.31,455.65 L1203.26,456.49 L1202.20,457.33 L1201.14,458.16 L1200.07,459.00 L1198.99,459.84 L1197.91,460.68 L1196.82,461.52 L1195.73,462.36 L1194.63,463.20 L1193.53,464.03 L1192.42,464.87 L1191.31,465.71 L1190.19,466.55 L1189.06,467.39 L1187.93,468.22 L1186.79,469.06 L1185.65,469.90 L1184.50,470.73 L1183.35,471.57 L1182.19,472.41 L1181.03,473.24 L1179.86,474.08 L1178.68,474.92 L1177.50,475.75 L1176.32,476.59 L1175.13,477.42 L1173.93,478.26 L1172.73,479.09 L1171.53,479.93 L1170.31,480.76 L1169.10,481.60 L1167.88,482.43 L1166.65,483.26 L1165.42,484.10 L1164.19,484.93 L1162.95,485.77 L1161.70,486.60 L1160.45,487.43 L1159.20,488.26 L1157.94,489.10 L1156.68,489.93 L1155.41,490.76 L1154.14,491.59 L1152.86,492.42 L1151.58,493.25 L1150.29,494.08 L1149.00,494.91 L1147.71,495.74 L1146.41,496.57 L1145.10,497.40 L1143.80,498.23 L1142.48,499.06 L1141.17,499.89 L1139.85,500.72 L1138.52,501.54 L1137.20,502.37 L1135.87,503.20 L1134.53,504.02 L1133.19,504.85 L1131.85,505.67 L1130.50,506.50 M1075.31,117.57 L1076.80,118.34 L1078.29,119.11 L1079.77,119.88 L1081.25,120.66 L1082.73,121.43 L1084.21,122.20 L1085.69,122.98 L1087.16,123.75 L1088.63,124.52 L1090.09,125.30 L1091.56,126.07 L1093.02,126.84 L1094.47,127.62 L1095.93,128.39 L1097.38,129.17 L1098.82,129.94 L1100.27,130.71 L1101.71,131.49 L1103.15,132.26 L1104.58,133.04 L1106.01,133.81 L1107.44,134.59 L1108.86,135.36 L1110.29,136.14 L1111.70,136.92 L1113.12,137.69 L1114.53,138.47 L1115.94,139.24 L1117.34,140.02 L1118.74,140.79 L1120.14,141.57 L1121.53,142.35 L1122.92,143.12 L1124.30,143.90 L1125.69,144.67 L1127.06,145.45 L1128.44,146.23 L1129.81,147.00 L1131.18,147.78 L1132.54,148.56 L1133.90,149.33 L1135.25,150.11 L1136.60,150.89 L1137.95,151.67 L1139.29,152.44 L1140.63,153.22 L1141.97,154.00 L1143.30,154.77 L1144.63,155.55 L1145.95,156.33 L1147.27,157.11 L1148.58,157.88 L1149.89,158.66 L1151.20,159.44 L1152.50,160.22 L1153.80,160.99 L1155.09,161.77 L1156.38,162.55 L1157.67,163.33 L1158.95,164.11 L1160.22,164.88 L1161.50,165.66 L1162.76,166.44 L1164.03,167.22 L1165.28,168.00 L1166.54,168.78 L1167.79,169.55 L1169.03,170.33 L1170.27,171.11 L1171.51,171.89 L1172.74,172.67 L1173.96,173.45 L1175.19,174.22 L1176.40,175.00 L1177.62,175.78 L1178.82,176.56 L1180.03,177.34 L1181.22,178.12 L1182.42,178.90 L1183.60,179.68 L1184.79,180.45 L1185.97,181.23 L1187.14,182.01 L1188.31,182.79 L1189.47,183.57 L1190.63,184.35 L1191.78,185.13 L1192.93,185.91 L1194.08,186.69 L1195.21,187.47 L1196.35,188.25 L1197.48,189.02 L1198.60,189.80 L1199.72,190.58 L1200.83,191.36 L1201.94,192.14 L1203.04,192.92 L1204.14,193.70 L1205.23,194.48 L1206.32,195.26 L1207.40,196.04 L1208.48,196.82 L1209.55,197.60 L1210.61,198.38 L1211.67,199.16 L1212.73,199.94 L1213.78,200.72 L1214.82,201.50 L1215.86,202.28 L1216.89,203.06 L1217.92,203.84 L1218.94,204.62 L1219.96,205.40 L1220.97,206.18 L1221.98,206.96 L1222.98,207.74 L1223.97,208.52 L1224.96,209.30 L1225.95,210.08 L1226.92,210.86 L1227.89,211.64 L1228.86,212.42 L1229.82,213.20 L1230.78,213.98 L1231.73,214.76 L1232.67,215.54 L1233.61,216.32 L1234.54,217.10 L1235.47,217.88 L1236.39,218.66 L1237.30,219.44 L1238.21,220.22 L1239.11,221.00 L1240.01,221.78 L1240.90,222.56 L1241.78,223.34 L1242.66,224.12 L1243.54,224.90 L1244.40,225.68 L1245.27,226.46 L1246.12,227.24 L1246.97,228.02 L1247.81,228.80 L1248.65,229.58 L1249.48,230.36 L1250.31,231.14 L1251.13,231.92 L1251.94,232.70 L1252.75,233.48 L1253.55,234.26 L1254.34,235.04 L1255.13,235.82 L1255.91,236.60 L1256.69,237.38 L1257.46,238.16 L1258.22,238.95 L1258.98,239.73 L1259.73,240.51 L1260.47,241.29 L1261.21,242.07 L1261.95,242.85 L1262.67,243.63 L1263.39,244.41 L1264.10,245.19 L1264.81,245.97 L1265.51,246.75 L1266.21,247.53 L1266.89,248.31 L1267.58,249.09 L1268.25,249.87 L1268.92,250.65 L1269.58,251.43 L1270.24,252.22 L1270.89,253.00 L1271.53,253.78 L1272.17,254.56 L1272.80,255.34 L1273.42,256.12 L1274.04,256.90 L1274.65,257.68 L1275.25,258.46 L1275.85,259.24 L1276.44,260.02 L1277.03,260.80 L1277.60,261.58 L1278.18,262.37 L1278.74,263.15 L1279.30,263.93 L1279.85,264.71 L1280.40,265.49 L1280.93,266.27 L1281.46,267.05 L1281.99,267.83 L1282.51,268.61 L1283.02,269.39 L1283.52,270.17 L1284.02,270.95 L1284.51,271.74 L1285.00,272.52 L1285.48,273.30 L1285.95,274.08 L1286.41,274.86 L1286.87,275.64 L1287.32,276.42 L1287.77,277.20 L1288.21,277.98 L1288.64,278.76 L1289.06,279.54 L1289.48,280.33 L1289.89,281.11 L1290.29,281.89 L1290.69,282.67 L1291.08,283.45 L1291.46,284.23 L1291.84,285.01 L1292.21,285.79 L1292.57,286.57 L1292.93,287.35 L1293.28,288.14 L1293.62,288.92 L1293.96,289.70 L1294.29,290.48 L1294.61,291.26 L1294.92,292.04 L1295.23,292.82 L1295.53,293.60 L1295.82,294.38 L1296.11,295.16 L1296.39,295.95 L1296.67,296.73 L1296.93,297.51 L1297.19,298.29 L1297.44,299.07 L1297.69,299.85 L1297.93,300.63 L1298.16,301.41 L1298.39,302.19 L1298.60,302.97 L1298.82,303.76 L1299.02,304.54 L1299.22,305.32 L1299.41,306.10 L1299.59,306.88 L1299.77,307.66 L1299.94,308.44 L1300.10,309.22 L1300.25,310.00 L1300.40,310.79 L1300.54,311.57 L1300.68,312.35 L1300.80,313.13 L1300.92,313.91 L1301.04,314.69 L1301.14,315.47 L1301.24,316.25 L1301.34,317.03 L1301.42,317.81 L1301.50,318.60 L1301.57,319.38 L1301.63,320.16 L1301.69,320.94 L1301.74,321.72 L1301.79,322.50 L1301.82,323.28 L1301.85,324.06 L1301.87,324.84 L1301.89,325.63 L1301.90,326.41 L1301.90,327.19 L1301.89,327.97 L1301.88,328.75 L1301.86,329.53 L1301.83,330.31 L1301.80,331.09 L1301.76,331.87 L1301.71,332.66 L1301.66,333.44 L1301.59,334.22 L1301.52,335.00 L1301.45,335.78 L1301.37,336.56 L1301.28,337.34 L1301.18,338.12 L1301.08,338.90 L1300.96,339.68 L1300.85,340.47 L1300.72,341.25 L1300.59,342.03 L1300.45,342.81 L1300.31,343.59 L1300.15,344.37 L1299.99,345.15 L1299.83,345.93 L1299.65,346.71 L1299.47,347.49 L1299.28,348.28 L1299.09,349.06 L1298.89,349.84 L1298.68,350.62 L1298.46,351.40 L1298.24,352.18 L1298.01,352.96 L1297.77,353.74 L1297.53,354.52 L1297.28,355.30 L1297.02,356.09 L1296.76,356.87 L1296.49,357.65 L1296.21,358.43 L1295.93,359.21 L1295.63,359.99 L1295.34,360.77 L1295.03,361.55 L1294.72,362.33 L1294.40,363.11 L1294.07,363.90 L1293.74,364.68 L1293.40,365.46 L1293.05,366.24 L1292.70,367.02 L1292.34,367.80 L1291.97,368.58 L1291.60,369.36 L1291.22,370.14 L1290.83,370.92 L1290.43,371.70 L1290.03,372.48 L1289.62,373.27 L1289.21,374.05 L1288.79,374.83 L1288.36,375.61 L1287.92,376.39 L1287.48,377.17 L1287.03,377.95 L1286.58,378.73 L1286.11,379.51 L1285.65,380.29 L1285.17,381.07 L1284.69,381.85 L1284.20,382.64 L1283.70,383.42 L1283.20,384.20 L1282.69,384.98 L1282.17,385.76 L1281.65,386.54 L1281.12,387.32 L1280.59,388.10 L1280.04,388.88 L1279.50,389.66 L1278.94,390.44 L1278.38,391.22 L1277.81,392.00 L1277.23,392.78 L1276.65,393.57 L1276.06,394.35 L1275.47,395.13 L1274.87,395.91 L1274.26,396.69 L1273.64,397.47 L1273.02,398.25 L1272.39,399.03 L1271.76,399.81 L1271.12,400.59 L1270.47,401.37 L1269.82,402.15 L1269.16,402.93 L1268.49,403.71 L1267.82,404.49 L1267.14,405.27 L1266.46,406.05 L1265.76,406.83 L1265.07,407.61 L1264.36,408.40 L1263.65,409.18 L1262.93,409.96 L1262.21,410.74 L1261.48,411.52 L1260.74,412.30 L1260.00,413.08 L1259.25,413.86 L1258.50,414.64 L1257.74,415.42 L1256.97,416.20 L1256.20,416.98 L1255.42,417.76 L1254.63,418.54 L1253.84,419.32 L1253.04,420.10 L1252.24,420.88 L1251.43,421.66 L1250.61,422.44 L1249.79,423.22 L1248.96,424.00 L1248.13,424.78 L1247.28,425.56 L1246.44,426.34 L1245.59,427.12 L1244.73,427.90 L1243.86,428.68 L1242.99,429.46 L1242.12,430.24 L1241.23,431.02 L1240.34,431.80 L1239.45,432.58 L1238.55,433.36 L1237.64,434.14 L1236.73,434.92 L1235.82,435.70 L1234.89,436.48 L1233.96,437.26 L1233.03,438.04 L1232.09,438.82 L1231.14,439.60 L1230.19,440.38 L1229.23,441.16 L1228.27,441.94 L1227.30,442.72 L1226.32,443.50 L1225.34,444.28 L1224.36,445.06 L1223.37,445.84 L1222.37,446.61 L1221.37,447.39 L1220.36,448.17 L1219.34,448.95 L1218.32,449.73 L1217.30,450.51 L1216.27,451.29 L1215.23,452.07 L1214.19,452.85 L1213.15,453.63 L1212.09,454.41 L1211.04,455.19 L1209.97,455.97 L1208.91,456.74 L1207.83,457.52 L1206.75,458.30 L1205.67,459.08 L1204.58,459.86 L1203.49,460.64 L1202.39,461.42 L1201.28,462.20 L1200.17,462.98 L1199.06,463.75 L1197.94,464.53 L1196.81,465.31 L1195.68,466.09 L1194.55,466.87 L1193.41,467.65 L1192.26,468.43 L1191.11,469.20 L1189.96,469.98 L1188.80,470.76 L1187.63,471.54 L1186.46,472.32 L1185.29,473.10 L1184.11,473.87 L1182.92,474.65 L1181.73,475.43 L1180.54,476.21 L1179.34,476.99 L1178.14,477.76 L1176.93,478.54 L1175.71,479.32 L1174.50,480.10 L1173.27,480.88 L1172.05,481.65 L1170.82,482.43 L1169.58,483.21 L1168.34,483.99 L1167.09,484.76 L1165.84,485.54 L1164.59,486.32 L1163.33,487.10 L1162.07,487.87 L1160.80,488.65 L1159.53,489.43 L1158.25,490.20 L1156.97,490.98 L1155.69,491.76 L1154.40,492.53 L1153.11,493.31 L1151.81,494.09 L1150.51,494.86 L1149.20,495.64 L1147.89,496.42 L1146.58,497.19 L1145.26,497.97 L1143.94,498.74 L1142.61,499.52 L1141.28,500.30 L1139.95,501.07 L1138.61,501.85 L1137.27,502.62 L1135.92,503.40 L1134.57,504.17 L1133.22,504.95 L1131.86,505.72 L1130.50,506.50 M834.64,49.26 L831.96,49.92 M975.78,50.59 L977.31,51.28 L978.88,51.99 L980.49,52.71 L982.15,53.45 L983.83,54.20 L985.55,54.96 L987.30,55.72 L989.08,56.50 L990.88,57.29 L992.70,58.08 L994.54,58.89 L996.40,59.70 L998.28,60.51 L1000.17,61.33 L1002.07,62.16 L1003.99,62.99 L1005.91,63.83 L1007.85,64.67 L1009.80,65.51 L1011.75,66.36 L1013.72,67.22 L1015.69,68.07 L1017.66,68.93 L1019.65,69.79 L1021.63,70.66 L1023.63,71.53 L1025.62,72.40 L1027.62,73.27 L1029.62,74.15 L1031.63,75.02 L1033.64,75.90 L1035.65,76.78 L1037.66,77.67 L1039.67,78.55 L1041.69,79.44 L1043.70,80.32 L1045.72,81.21 L1047.73,82.10 L1049.75,82.99 L1051.76,83.89 L1053.78,84.78 L1055.79,85.68 L1057.81,86.57 L1059.82,87.47 L1061.83,88.37 L1063.84,89.27 L1065.85,90.17 L1067.86,91.07 L1069.87,91.97 L1071.87,92.87 L1073.87,93.78 L1075.87,94.68 L1077.87,95.59 L1079.86,96.49 L1081.86,97.40 L1083.84,98.31 L1085.83,99.21 L1087.82,100.12 L1089.80,101.03 L1091.77,101.94 L1093.75,102.85 L1095.72,103.76 L1097.69,104.67 L1099.65,105.58 L1101.61,106.49 L1103.57,107.41 L1105.52,108.32 L1107.47,109.23 L1109.41,110.15 L1111.35,111.06 L1113.29,111.97 L1115.22,112.89 L1117.15,113.80 L1119.07,114.72 L1120.99,115.63 L1122.90,116.55 L1124.81,117.46 L1126.72,118.38 L1128.62,119.30 L1130.51,120.21 L1132.41,121.13 L1134.29,122.05 L1136.17,122.97 L1138.05,123.89 L1139.92,124.80 L1141.78,125.72 L1143.64,126.64 L1145.50,127.56 L1147.34,128.48 L1149.19,129.40 L1151.03,130.32 L1152.86,131.24 L1154.68,132.16 L1156.50,133.08 L1158.32,134.00 L1160.13,134.92 L1161.93,135.84 L1163.73,136.76 L1165.52,137.68 L1167.30,138.60 L1169.08,139.52 L1170.86,140.44 L1172.62,141.37 L1174.38,142.29 L1176.14,143.21 L1177.88,144.13 L1179.62,145.05 L1181.36,145.98 L1183.09,146.90 L1184.81,147.82 L1186.52,148.74 L1188.23,149.67 L1189.93,150.59 L1191.63,151.51 L1193.31,152.43 L1194.99,153.36 L1196.67,154.28 L1198.33,155.20 L1199.99,156.13 L1201.64,157.05 L1203.29,157.98 L1204.93,158.90 L1206.56,159.82 L1208.18,160.75 L1209.80,161.67 L1211.41,162.60 L1213.01,163.52 L1214.60,164.44 L1216.19,165.37 L1217.77,166.29 L1219.34,167.22 L1220.90,168.14 L1222.46,169.07 L1224.00,169.99 L1225.54,170.92 L1227.08,171.84 L1228.60,172.77 L1230.12,173.69 L1231.63,174.62 L1233.13,175.54 L1234.62,176.47 L1236.10,177.39 L1237.58,178.32 L1239.05,179.24 L1240.51,180.17 L1241.96,181.09 L1243.40,182.02 L1244.84,182.95 L1246.26,183.87 L1247.68,184.80 L1249.09,185.72 L1250.49,186.65 L1251.89,187.58 L1253.27,188.50 L1254.65,189.43 L1256.02,190.35 L1257.37,191.28 L1258.72,192.21 L1260.06,193.13 L1261.40,194.06 L1262.72,194.99 L1264.04,195.91 L1265.34,196.84 L1266.64,197.76 L1267.93,198.69 L1269.21,199.62 L1270.48,200.54 L1271.74,201.47 L1272.99,202.40 L1274.23,203.32 L1275.47,204.25 L1276.69,205.18 L1277.91,206.10 L1279.11,207.03 L1280.31,207.96 L1281.50,208.89 L1282.68,209.81 L1283.84,210.74 L1285.00,211.67 L1286.15,212.59 L1287.29,213.52 L1288.43,214.45 L1289.55,215.37 L1290.66,216.30 L1291.76,217.23 L1292.86,218.16 L1293.94,219.08 L1295.01,220.01 L1296.08,220.94 L1297.13,221.87 L1298.18,222.79 L1299.21,223.72 L1300.24,224.65 L1301.25,225.58 L1302.26,226.50 L1303.25,227.43 L1304.24,228.36 L1305.21,229.29 L1306.18,230.21 L1307.13,231.14 L1308.08,232.07 L1309.02,233.00 L1309.94,233.92 L1310.86,234.85 L1311.76,235.78 L1312.66,236.71 L1313.54,237.63 L1314.42,238.56 L1315.28,239.49 L1316.14,240.42 L1316.98,241.35 L1317.82,242.27 L1318.64,243.20 L1319.46,244.13 L1320.26,245.06 L1321.05,245.99 L1321.83,246.91 L1322.61,247.84 L1323.37,248.77 L1324.12,249.70 L1324.86,250.62 L1325.59,251.55 L1326.31,252.48 L1327.02,253.41 L1327.72,254.34 L1328.41,255.27 L1329.09,256.19 L1329.76,257.12 L1330.41,258.05 L1331.06,258.98 L1331.69,259.91 L1332.32,260.83 L1332.93,261.76 L1333.54,262.69 L1334.13,263.62 L1334.71,264.55 L1335.29,265.47 L1335.85,266.40 L1336.40,267.33 L1336.94,268.26 L1337.46,269.19 L1337.98,270.12 L1338.49,271.04 L1338.99,271.97 L1339.47,272.90 L1339.95,273.83 L1340.41,274.76 L1340.86,275.69 L1341.30,276.61 L1341.74,277.54 L1342.16,278.47 L1342.57,279.40 L1342.96,280.33 L1343.35,281.26 L1343.73,282.18 L1344.09,283.11 L1344.45,284.04 L1344.79,284.97 L1345.13,285.90 L1345.45,286.83 L1345.76,287.75 L1346.06,288.68 L1346.35,289.61 L1346.63,290.54 L1346.89,291.47 L1347.15,292.40 L1347.39,293.32 L1347.63,294.25 L1347.85,295.18 L1348.06,296.11 L1348.26,297.04 L1348.45,297.97 L1348.63,298.90 L1348.80,299.82 L1348.95,300.75 L1349.10,301.68 L1349.23,302.61 L1349.36,303.54 L1349.47,304.47 L1349.57,305.39 L1349.66,306.32 L1349.74,307.25 L1349.81,308.18 L1349.86,309.11 L1349.91,310.04 L1349.94,310.97 L1349.97,311.89 L1349.98,312.82 L1349.98,313.75 L1349.97,314.68 L1349.95,315.61 L1349.92,316.54 L1349.87,317.47 L1349.82,318.39 L1349.75,319.32 L1349.68,320.25 L1349.59,321.18 L1349.49,322.11 L1349.38,323.04 L1349.26,323.96 L1349.13,324.89 L1348.98,325.82 L1348.83,326.75 L1348.66,327.68 L1348.49,328.61 L1348.30,329.54 L1348.10,330.46 L1347.89,331.39 L1347.67,332.32 L1347.44,333.25 L1347.20,334.18 L1346.94,335.11 L1346.68,336.04 L1346.40,336.96 L1346.12,337.89 L1345.82,338.82 L1345.51,339.75 L1345.19,340.68 L1344.86,341.61 L1344.52,342.53 L1344.16,343.46 L1343.80,344.39 L1343.43,345.32 L1343.04,346.25 L1342.64,347.18 L1342.24,348.11 L1341.82,349.03 L1341.39,349.96 L1340.95,350.89 L1340.50,351.82 L1340.04,352.75 L1339.56,353.68 L1339.08,354.60 L1338.59,355.53 L1338.08,356.46 L1337.56,357.39 L1337.04,358.32 L1336.50,359.25 L1335.95,360.17 L1335.39,361.10 L1334.82,362.03 L1334.24,362.96 L1333.65,363.89 L1333.05,364.82 L1332.44,365.74 L1331.81,366.67 L1331.18,367.60 L1330.53,368.53 L1329.88,369.46 L1329.21,370.39 L1328.54,371.31 L1327.85,372.24 L1327.15,373.17 L1326.45,374.10 L1325.73,375.03 L1325.00,375.96 L1324.26,376.88 L1323.51,377.81 L1322.75,378.74 L1321.98,379.67 L1321.20,380.60 L1320.41,381.52 L1319.60,382.45 L1318.79,383.38 L1317.97,384.31 L1317.14,385.24 L1316.29,386.16 L1315.44,387.09 L1314.58,388.02 L1313.70,388.95 L1312.82,389.88 L1311.93,390.80 L1311.02,391.73 L1310.11,392.66 L1309.18,393.59 L1308.25,394.52 L1307.30,395.44 L1306.35,396.37 L1305.39,397.30 L1304.41,398.23 L1303.43,399.16 L1302.43,400.08 L1301.43,401.01 L1300.42,401.94 L1299.39,402.87 L1298.36,403.79 L1297.31,404.72 L1296.26,405.65 L1295.20,406.58 L1294.13,407.51 L1293.04,408.43 L1291.95,409.36 L1290.85,410.29 L1289.74,411.22 L1288.62,412.14 L1287.49,413.07 L1286.35,414.00 L1285.20,414.93 L1284.04,415.85 L1282.87,416.78 L1281.69,417.71 L1280.51,418.64 L1279.31,419.56 L1278.11,420.49 L1276.89,421.42 L1275.67,422.34 L1274.43,423.27 L1273.19,424.20 L1271.94,425.13 L1270.68,426.05 L1269.41,426.98 L1268.13,427.91 L1266.84,428.83 L1265.55,429.76 L1264.24,430.69 L1262.93,431.62 L1261.60,432.54 L1260.27,433.47 L1258.93,434.40 L1257.58,435.32 L1256.22,436.25 L1254.86,437.18 L1253.48,438.10 L1252.10,439.03 L1250.70,439.96 L1249.30,440.88 L1247.89,441.81 L1246.47,442.74 L1245.05,443.66 L1243.61,444.59 L1242.17,445.52 L1240.71,446.44 L1239.25,447.37 L1237.79,448.29 L1236.31,449.22 L1234.82,450.15 L1233.33,451.07 L1231.83,452.00 L1230.32,452.92 L1228.80,453.85 L1227.28,454.78 L1225.74,455.70 L1224.20,456.63 L1222.65,457.55 L1221.10,458.48 L1219.53,459.41 L1217.96,460.33 L1216.38,461.26 L1214.79,462.18 L1213.20,463.11 L1211.60,464.03 L1209.99,464.96 L1208.37,465.88 L1206.74,466.81 L1205.11,467.73 L1203.47,468.66 L1201.82,469.58 L1200.17,470.51 L1198.51,471.43 L1196.84,472.36 L1195.16,473.28 L1193.48,474.21 L1191.79,475.13 L1190.09,476.06 L1188.39,476.98 L1186.68,477.90 L1184.96,478.83 L1183.24,479.75 L1181.50,480.68 L1179.77,481.60 L1178.02,482.52 L1176.27,483.45 L1174.51,484.37 L1172.75,485.29 L1170.98,486.22 L1169.20,487.14 L1167.42,488.06 L1165.63,488.99 L1163.83,489.91 L1162.03,490.83 L1160.22,491.76 L1158.41,492.68 L1156.59,493.60 L1154.76,494.52 L1152.93,495.45 L1151.09,496.37 L1149.25,497.29 L1147.40,498.21 L1145.54,499.13 L1143.68,500.05 L1141.82,500.98 L1139.94,501.90 L1138.06,502.82 L1136.18,503.74 L1134.29,504.66 L1132.40,505.58 L1130.50,506.50 M1166.59,117.28 L1168.16,118.00 L1169.72,118.73 L1171.29,119.45 L1172.86,120.17 L1174.43,120.90 L1175.99,121.63 L1177.56,122.36 L1179.12,123.09 L1180.68,123.82 L1182.24,124.55 L1183.81,125.28 L1185.36,126.02 L1186.92,126.75 L1188.48,127.49 L1190.03,128.23 L1191.58,128.97 L1193.13,129.71 L1194.68,130.45 L1196.23,131.19 L1197.77,131.93 L1199.31,132.68 L1200.85,133.42 L1202.39,134.17 L1203.92,134.91 L1205.45,135.66 L1206.98,136.41 L1208.50,137.16 L1210.02,137.91 L1211.54,138.66 L1213.06,139.41 L1214.57,140.16 L1216.08,140.91 L1217.59,141.66 L1219.09,142.42 L1220.59,143.17 L1222.08,143.93 L1223.57,144.68 L1225.06,145.44 L1226.54,146.20 L1228.02,146.96 L1229.50,147.71 L1230.97,148.47 L1232.44,149.23 L1233.90,149.99 L1235.36,150.75 L1236.82,151.52 L1238.27,152.28 L1239.71,153.04 L1241.15,153.80 L1242.59,154.57 L1244.02,155.33 L1245.45,156.09 L1246.88,156.86 L1248.29,157.62 L1249.71,158.39 L1251.12,159.16 L1252.52,159.92 L1253.92,160.69 L1255.31,161.46 L1256.70,162.23 L1258.09,162.99 L1259.47,163.76 L1260.84,164.53 L1262.21,165.30 L1263.57,166.07 L1264.93,166.84 L1266.28,167.61 L1267.63,168.39 L1268.97,169.16 L1270.30,169.93 L1271.63,170.70 L1272.96,171.47 L1274.28,172.25 L1275.59,173.02 L1276.90,173.79 L1278.20,174.57 L1279.50,175.34 L1280.79,176.12 L1282.07,176.89 L1283.35,177.67 L1284.62,178.44 L1285.89,179.22 L1287.15,180.00 L1288.40,180.77 L1289.65,181.55 L1290.89,182.33 L1292.12,183.10 L1293.35,183.88 L1294.57,184.66 L1295.79,185.44 L1297.00,186.21 L1298.20,186.99 L1299.40,187.77 L1300.59,188.55 L1301.78,189.33 L1302.95,190.11 L1304.12,190.89 L1305.29,191.67 L1306.45,192.45 L1307.60,193.23 L1308.74,194.01 L1309.88,194.79 L1311.01,195.57 L1312.13,196.35 L1313.25,197.14 L1314.36,197.92 L1315.46,198.70 L1316.56,199.48 L1317.65,200.26 L1318.73,201.05 L1319.80,201.83 L1320.87,202.61 L1321.93,203.40 L1322.99,204.18 L1324.03,204.96 L1325.07,205.75 L1326.11,206.53 L1327.13,207.31 L1328.15,208.10 L1329.16,208.88 L1330.16,209.67 L1331.16,210.45 L1332.15,211.24 L1333.13,212.02 L1334.10,212.81 L1335.07,213.59 L1336.03,214.38 L1336.98,215.16 L1337.93,215.95 L1338.86,216.73 L1339.79,217.52 L1340.71,218.30 L1341.63,219.09 L1342.53,219.88 L1343.43,220.66 L1344.32,221.45 L1345.20,222.24 L1346.08,223.02 L1346.95,223.81 L1347.81,224.60 L1348.66,225.39 L1349.50,226.17 L1350.34,226.96 L1351.17,227.75 L1351.99,228.54 L1352.80,229.32 L1353.61,230.11 L1354.41,230.90 L1355.20,231.69 L1355.98,232.48 L1356.75,233.26 L1357.51,234.05 L1358.27,234.84 L1359.02,235.63 L1359.76,236.42 L1360.50,237.21 L1361.22,238.00 L1361.94,238.79 L1362.65,239.57 L1363.35,240.36 L1364.04,241.15 L1364.72,241.94 L1365.40,242.73 L1366.07,243.52 L1366.73,244.31 L1367.38,245.10 L1368.02,245.89 L1368.66,246.68 L1369.28,247.47 L1369.90,248.26 L1370.51,249.05 L1371.11,249.84 L1371.71,250.63 L1372.29,251.42 L1372.87,252.21 L1373.44,253.00 L1374.00,253.79 L1374.55,254.58 L1375.09,255.37 L1375.62,256.16 L1376.15,256.96 L1376.67,257.75 L1377.18,258.54 L1377.68,259.33 L1378.17,260.12 L1378.65,260.91 L1379.13,261.70 L1379.59,262.49 L1380.05,263.28 L1380.50,264.08 L1380.94,264.87 L1381.37,265.66 L1381.80,266.45 L1382.21,267.24 L1382.62,268.03 L1383.02,268.83 L1383.41,269.62 L1383.79,270.41 L1384.16,271.20 L1384.52,271.99 L1384.88,272.78 L1385.22,273.58 L1385.56,274.37 L1385.89,275.16 L1386.21,275.95 L1386.52,276.74 L1386.82,277.54 L1387.11,278.33 L1387.40,279.12 L1387.67,279.91 L1387.94,280.71 L1388.20,281.50 L1388.45,282.29 L1388.69,283.08 L1388.92,283.88 L1389.15,284.67 L1389.36,285.46 L1389.57,286.25 L1389.77,287.05 L1389.95,287.84 L1390.13,288.63 L1390.30,289.42 L1390.47,290.22 L1390.62,291.01 L1390.76,291.80 L1390.90,292.60 L1391.03,293.39 L1391.14,294.18 L1391.25,294.97 L1391.35,295.77 L1391.44,296.56 L1391.53,297.35 L1391.60,298.15 L1391.67,298.94 L1391.72,299.73 L1391.77,300.52 L1391.81,301.32 L1391.84,302.11 L1391.86,302.90 L1391.87,303.70 L1391.87,304.49 L1391.87,305.28 L1391.85,306.08 L1391.83,306.87 L1391.79,307.66 L1391.75,308.46 L1391.70,309.25 L1391.64,310.04 L1391.58,310.84 L1391.50,311.63 L1391.41,312.42 L1391.32,313.22 L1391.21,314.01 L1391.10,314.80 L1390.98,315.59 L1390.85,316.39 L1390.71,317.18 L1390.57,317.97 L1390.41,318.77 L1390.24,319.56 L1390.07,320.35 L1389.89,321.15 L1389.69,321.94 L1389.49,322.73 L1389.28,323.53 L1389.07,324.32 L1388.84,325.11 L1388.60,325.91 L1388.36,326.70 L1388.10,327.49 L1387.84,328.29 L1387.57,329.08 L1387.29,329.87 L1387.00,330.67 L1386.71,331.46 L1386.40,332.25 L1386.08,333.05 L1385.76,333.84 L1385.43,334.63 L1385.09,335.43 L1384.74,336.22 L1384.38,337.01 L1384.01,337.80 L1383.64,338.60 L1383.25,339.39 L1382.86,340.18 L1382.45,340.98 L1382.04,341.77 L1381.62,342.56 L1381.20,343.36 L1380.76,344.15 L1380.31,344.94 L1379.86,345.73 L1379.40,346.53 L1378.93,347.32 L1378.45,348.11 L1377.96,348.91 L1377.46,349.70 L1376.95,350.49 L1376.44,351.28 L1375.92,352.08 L1375.39,352.87 L1374.85,353.66 L1374.30,354.45 L1373.74,355.25 L1373.18,356.04 L1372.60,356.83 L1372.02,357.62 L1371.43,358.42 L1370.83,359.21 L1370.22,360.00 L1369.60,360.79 L1368.98,361.59 L1368.35,362.38 L1367.70,363.17 L1367.06,363.96 L1366.40,364.75 L1365.73,365.55 L1365.06,366.34 L1364.37,367.13 L1363.68,367.92 L1362.98,368.71 L1362.27,369.51 L1361.56,370.30 L1360.83,371.09 L1360.10,371.88 L1359.36,372.67 L1358.61,373.47 L1357.85,374.26 L1357.09,375.05 L1356.31,375.84 L1355.53,376.63 L1354.74,377.42 L1353.94,378.21 L1353.14,379.00 L1352.32,379.80 L1351.50,380.59 L1350.67,381.38 L1349.83,382.17 L1348.98,382.96 L1348.13,383.75 L1347.27,384.54 L1346.40,385.33 L1345.52,386.12 L1344.63,386.91 L1343.74,387.70 L1342.84,388.49 L1341.93,389.28 L1341.01,390.08 L1340.08,390.87 L1339.15,391.66 L1338.21,392.45 L1337.26,393.24 L1336.30,394.03 L1335.34,394.82 L1334.37,395.60 L1333.39,396.39 L1332.40,397.18 L1331.41,397.97 L1330.40,398.76 L1329.39,399.55 L1328.38,400.34 L1327.35,401.13 L1326.32,401.92 L1325.28,402.71 L1324.23,403.50 L1323.18,404.29 L1322.11,405.07 L1321.04,405.86 L1319.97,406.65 L1318.88,407.44 L1317.79,408.23 L1316.69,409.02 L1315.58,409.80 L1314.47,410.59 L1313.35,411.38 L1312.22,412.17 L1311.09,412.96 L1309.94,413.74 L1308.79,414.53 L1307.64,415.32 L1306.47,416.10 L1305.30,416.89 L1304.12,417.68 L1302.94,418.47 L1301.75,419.25 L1300.55,420.04 L1299.34,420.82 L1298.13,421.61 L1296.91,422.40 L1295.68,423.18 L1294.45,423.97 L1293.21,424.75 L1291.96,425.54 L1290.71,426.33 L1289.45,427.11 L1288.18,427.90 L1286.91,428.68 L1285.63,429.47 L1284.34,430.25 L1283.05,431.03 L1281.75,431.82 L1280.44,432.60 L1279.13,433.39 L1277.81,434.17 L1276.49,434.95 L1275.16,435.74 L1273.82,436.52 L1272.47,437.30 L1271.12,438.09 L1269.77,438.87 L1268.40,439.65 L1267.03,440.43 L1265.66,441.22 L1264.28,442.00 L1262.89,442.78 L1261.50,443.56 L1260.10,444.34 L1258.69,445.12 L1257.28,445.91 L1255.86,446.69 L1254.44,447.47 L1253.01,448.25 L1251.58,449.03 L1250.13,449.81 L1248.69,450.59 L1247.24,451.37 L1245.78,452.14 L1244.32,452.92 L1242.85,453.70 L1241.37,454.48 L1239.89,455.26 L1238.41,456.04 L1236.92,456.81 L1235.42,457.59 L1233.92,458.37 L1232.41,459.15 L1230.90,459.92 L1229.38,460.70 L1227.86,461.47 L1226.33,462.25 L1224.80,463.02 L1223.26,463.80 L1221.72,464.57 L1220.17,465.35 L1218.62,466.12 L1217.06,466.90 L1215.50,467.67 L1213.93,468.44 L1212.36,469.22 L1210.78,469.99 L1209.20,470.76 L1207.61,471.53 L1206.02,472.30 L1204.43,473.07 L1202.83,473.84 L1201.22,474.61 L1199.62,475.38 L1198.00,476.15 L1196.39,476.92 L1194.76,477.69 L1193.14,478.46 L1191.51,479.23 L1189.87,479.99 L1188.24,480.76 L1186.59,481.53 L1184.95,482.29 L1183.30,483.06 L1181.64,483.82 L1179.99,484.59 L1178.32,485.35 L1176.66,486.12 L1174.99,486.88 L1173.32,487.64 L1171.64,488.40 L1169.96,489.16 L1168.28,489.93 L1166.59,490.69 L1164.90,491.45 L1163.21,492.20 L1161.51,492.96 L1159.81,493.72 L1158.11,494.48 L1156.41,495.24 L1154.70,495.99 L1152.99,496.75 L1151.27,497.50 L1149.55,498.26 L1147.83,499.01 L1146.11,499.76 L1144.39,500.51 L1142.66,501.26 L1140.93,502.01 L1139.20,502.76 L1137.46,503.51 L1135.72,504.26 L1133.98,505.01 L1132.24,505.75 L1130.50,506.50 M1201.94,208.10 L1202.51,208.00 L1203.09,207.89 L1203.67,207.79 L1204.26,207.70 L1204.84,207.60 L1205.43,207.50 L1206.01,207.41 L1206.60,207.32 L1207.19,207.23 L1207.79,207.14 L1208.38,207.06 L1208.98,206.97 L1209.58,206.89 L1210.18,206.81 L1210.79,206.73 L1211.39,206.65 L1212.00,206.58 L1212.61,206.51 L1213.22,206.43 L1213.83,206.36 L1214.45,206.30 L1215.07,206.23 L1215.69,206.17 L1216.31,206.10 L1216.93,206.04 L1217.56,205.98 L1218.19,205.93 L1218.82,205.87 L1219.45,205.82 L1220.09,205.77 L1220.72,205.72 L1221.36,205.67 L1222.00,205.62 L1222.65,205.58 L1223.29,205.54 L1223.94,205.50 L1224.59,205.46 L1225.25,205.42 L1225.90,205.39 L1226.56,205.35 L1227.22,205.32 L1227.88,205.29 L1228.54,205.26 L1229.21,205.24 L1229.88,205.21 L1230.55,205.19 L1231.22,205.17 L1231.89,205.15 L1232.57,205.14 L1233.25,205.12 L1233.93,205.11 L1234.62,205.10 L1235.31,205.09 L1235.99,205.08 L1236.69,205.08 L1237.38,205.07 L1238.08,205.07 L1238.78,205.07 L1239.48,205.07 L1240.18,205.08 L1240.89,205.08 L1241.59,205.09 L1242.30,205.10 L1243.02,205.11 L1243.73,205.12 L1244.45,205.14 L1245.17,205.16 L1245.89,205.17 L1246.62,205.20 L1247.35,205.22 L1248.08,205.24 L1248.81,205.27 L1249.54,205.30 L1250.28,205.33 L1251.02,205.36 L1251.76,205.39 L1252.50,205.43 L1253.25,205.46 L1254.00,205.50 L1254.75,205.54 L1255.51,205.59 L1256.26,205.63 L1257.02,205.68 L1257.78,205.73 L1258.55,205.78 L1259.31,205.83 L1260.08,205.88 L1260.85,205.94 L1261.63,205.99 L1262.40,206.05 L1263.18,206.11 L1263.96,206.18 L1264.74,206.24 L1265.53,206.31 L1266.32,206.38 L1267.11,206.45 L1267.90,206.52 L1268.70,206.59 L1269.49,206.67 L1270.29,206.74 L1271.10,206.82 L1271.90,206.90 L1272.71,206.99 L1273.52,207.07 L1274.33,207.16 L1275.15,207.25 L1275.96,207.34 L1276.78,207.43 L1277.60,207.52 L1278.43,207.62 L1279.25,207.71 L1280.08,207.81 L1280.91,207.91 L1281.75,208.01 L1282.58,208.12 L1283.42,208.22 L1284.26,208.33 L1285.10,208.44 L1285.95,208.55 L1286.79,208.66 L1287.64,208.78 L1288.50,208.89 L1289.35,209.01 L1290.21,209.13 L1291.07,209.25 L1291.93,209.37 L1292.79,209.50 L1293.65,209.63 L1294.52,209.75 L1295.39,209.88 L1296.26,210.02 L1297.14,210.15 L1298.01,210.28 L1298.89,210.42 L1299.77,210.56 L1300.66,210.70 L1301.54,210.84 L1302.43,210.98 L1303.32,211.13 L1304.21,211.27 L1305.10,211.42 L1306.00,211.57 L1306.89,211.72 L1307.79,211.88 L1308.70,212.03 L1309.60,212.19 L1310.50,212.35 L1311.41,212.51 L1312.32,212.67 L1313.23,212.83 L1314.15,212.99 L1315.06,213.16 L1315.98,213.33 L1316.90,213.50 L1317.82,213.67 L1318.74,213.84 L1319.67,214.01 L1320.60,214.19 L1321.53,214.37 L1322.46,214.55 L1323.39,214.73 L1324.32,214.91 L1325.26,215.09 L1326.20,215.28 L1327.14,215.46 L1328.08,215.65 L1329.02,215.84 L1329.97,216.03 L1330.91,216.22 L1331.86,216.42 L1332.81,216.61 L1333.76,216.81 L1334.72,217.01 L1335.67,217.21 L1336.63,217.41 L1337.59,217.61 L1338.55,217.81 L1339.51,218.02 L1340.47,218.23 L1341.44,218.44 L1342.40,218.65 L1343.37,218.86 L1344.34,219.07 L1345.31,219.29 L1346.28,219.50 L1347.25,219.72 L1348.23,219.94 L1349.20,220.16 L1350.18,220.38 L1351.16,220.60 L1352.14,220.83 L1353.12,221.05 L1354.10,221.28 L1355.09,221.51 L1356.07,221.74 L1357.06,221.97 L1358.05,222.20 L1359.03,222.43 L1360.02,222.67 L1361.02,222.91 L1362.01,223.14 L1363.00,223.38 L1364.00,223.62 L1364.99,223.86 L1365.99,224.11 L1366.98,224.35 L1367.98,224.60 L1368.98,224.84 L1369.98,225.09 L1370.98,225.34 L1371.99,225.59 L1372.99,225.84 L1373.99,226.10 L1375.00,226.35 L1376.01,226.61 L1377.01,226.86 L1378.02,227.12 L1379.03,227.38 L1380.04,227.64 L1381.05,227.91 L1382.06,228.17 L1383.07,228.43 L1384.08,228.70 L1385.09,228.96 L1386.11,229.23 L1387.12,229.50 L1388.14,229.77 L1389.15,230.04 L1390.17,230.32 L1391.18,230.59 L1392.20,230.86 L1393.22,231.14 L1394.23,231.42 L1395.25,231.70 L1396.27,231.98 L1397.29,232.26 L1398.31,232.54 L1399.33,232.82 L1400.35,233.10 L1401.37,233.39 L1402.39,233.68 L1403.41,233.96 L1404.43,234.25 L1405.45,234.54 L1406.47,234.83 L1407.50,235.12 L1408.52,235.41 L1409.54,235.71 L1410.56,236.00 L1411.58,236.30 L1412.61,236.60 L1413.63,236.89 L1414.65,237.19 L1415.67,237.49 L1416.70,237.79 L1417.72,238.09 L1418.74,238.40 L1419.76,238.70 L1420.79,239.01 L1421.81,239.31 L1422.83,239.62 L1423.85,239.93 L1424.87,240.23 L1425.89,240.54 L1426.92,240.85 L1427.94,241.17 L1428.96,241.48 L1429.98,241.79 L1431.00,242.11 L1432.02,242.42 L1433.04,242.74 L1434.06,243.05 L1435.07,243.37 L1436.09,243.69 L1437.11,244.01 L1438.13,244.33 L1439.14,244.65 L1440.16,244.98 L1441.17,245.30 M363.01,245.62 L363.23,245.95 L363.45,246.27 L363.68,246.60 L363.90,246.93 L364.13,247.26 L364.35,247.59 L364.58,247.92 L364.81,248.25 L365.04,248.58 L365.26,248.91 L365.49,249.25 L365.72,249.58 L365.95,249.91 L366.19,250.25 L366.42,250.59 L366.65,250.92 L366.89,251.26 L367.12,251.60 L367.36,251.94 L367.60,252.28 L367.83,252.62 L368.07,252.96 L368.31,253.31 L368.56,253.65 L368.80,254.00 L369.04,254.34 L369.29,254.69 L369.53,255.03 L369.78,255.38 L370.03,255.73 L370.27,256.08 L370.52,256.42 L370.78,256.77 L371.03,257.13 L371.28,257.48 L371.54,257.83 L371.79,258.18 L372.05,258.53 L372.31,258.89 L372.57,259.24 L372.83,259.60 L373.09,259.95 L373.35,260.31 L373.62,260.67 L373.89,261.03 L374.15,261.38 L374.42,261.74 L374.69,262.10 L374.97,262.46 L375.24,262.83 L375.51,263.19 L375.79,263.55 L376.07,263.91 L376.35,264.28 L376.63,264.64 L376.91,265.00 L377.19,265.37 L377.48,265.73 L377.76,266.10 L378.05,266.47 L378.34,266.84 L378.63,267.20 L378.93,267.57 L379.22,267.94 L379.52,268.31 L379.82,268.68 L380.12,269.05 L380.42,269.42 L380.72,269.79 L381.02,270.17 L381.33,270.54 L381.64,270.91 L381.95,271.29 L382.26,271.66 L382.57,272.04 L382.89,272.41 L383.20,272.79 L383.52,273.16 L383.84,273.54 L384.16,273.92 L384.49,274.29 L384.81,274.67 L385.14,275.05 L385.47,275.43 L385.80,275.81 L386.13,276.19 L386.47,276.57 L386.81,276.95 L387.14,277.33 L387.48,277.71 L387.83,278.09 L388.17,278.48 L388.52,278.86 L388.86,279.24 L389.21,279.63 L389.57,280.01 L389.92,280.40 L390.28,280.78 L390.63,281.17 L390.99,281.55 L391.35,281.94 L391.72,282.32 L392.08,282.71 L392.45,283.10 L392.82,283.49 L393.19,283.87 L393.57,284.26 L393.94,284.65 L394.32,285.04 L394.70,285.43 L395.08,285.82 L395.47,286.21 L395.85,286.60 L396.24,286.99 L396.63,287.38 L397.02,287.77 L397.41,288.16 L397.81,288.55 L398.21,288.95 L398.61,289.34 L399.01,289.73 L399.42,290.13 L399.82,290.52 L400.23,290.91 L400.64,291.31 L401.06,291.70 L401.47,292.10 L401.89,292.49 L402.31,292.88 L402.73,293.28 L403.15,293.68 L403.58,294.07 L404.01,294.47 L404.44,294.86 L404.87,295.26 L405.31,295.66 L405.74,296.05 L406.18,296.45 L406.62,296.85 L407.07,297.25 L407.51,297.64 L407.96,298.04 L408.41,298.44 L408.86,298.84 L409.32,299.24 L409.77,299.64 L410.23,300.04 L410.69,300.44 L411.15,300.83 L411.62,301.23 L412.09,301.63 L412.56,302.03 L413.03,302.43 L413.50,302.83 L413.98,303.24 L414.46,303.64 L414.94,304.04 L415.42,304.44 L415.91,304.84 L416.39,305.24 L416.88,305.64 L417.38,306.04 L417.87,306.44 L418.37,306.85 L418.87,307.25 L419.37,307.65 L419.87,308.05 L420.37,308.46 L420.88,308.86 L421.39,309.26 L421.90,309.66 L422.42,310.07 L422.93,310.47 L423.45,310.87 L423.97,311.27 L424.50,311.68 L425.02,312.08 L425.55,312.48 L426.08,312.89 L426.61,313.29 L427.15,313.69 L427.68,314.10 L428.22,314.50 L428.76,314.90 L429.31,315.31 L429.85,315.71 L430.40,316.11 L430.95,316.52 L431.50,316.92 L432.05,317.33 L432.61,317.73 L433.17,318.13 L433.73,318.54 L434.29,318.94 L434.86,319.34 L435.43,319.75 L435.99,320.15 L436.57,320.56 L437.14,320.96 L437.72,321.36 L438.29,321.77 L438.88,322.17 L439.46,322.58 L440.04,322.98 L440.63,323.38 L441.22,323.79 L441.81,324.19 L442.40,324.59 L443.00,325.00 L443.60,325.40 L444.20,325.81 L444.80,326.21 L445.40,326.61 L446.01,327.02 L446.62,327.42 L447.23,327.82 L447.84,328.22 L448.46,328.63 L449.07,329.03 L449.69,329.43 L450.31,329.84 L450.94,330.24 L451.56,330.64 L452.19,331.04 L452.82,331.45 L453.45,331.85 L454.09,332.25 L454.72,332.65 L455.36,333.06 L456.00,333.46 L456.64,333.86 L457.28,334.26 L457.93,334.66 L458.58,335.06 L459.23,335.46 L459.88,335.87 L460.54,336.27 L461.19,336.67 L461.85,337.07 L462.51,337.47 L463.17,337.87 L463.84,338.27 L464.50,338.67 L465.17,339.07 L465.84,339.47 L466.51,339.87 L467.19,340.27 L467.86,340.66 L468.54,341.06 L469.22,341.46 L469.90,341.86 L470.59,342.26 L471.27,342.66 L471.96,343.05 L472.65,343.45 L473.34,343.85 L474.03,344.25 L474.73,344.64 L475.42,345.04 L476.12,345.44 L476.82,345.83 L477.53,346.23 L478.23,346.62 L478.94,347.02 L479.64,347.41 L480.35,347.81 L481.06,348.20 L481.78,348.60 L482.49,348.99 L483.21,349.39 L483.93,349.78 L484.65,350.17 L485.37,350.56 L486.10,350.96 L486.82,351.35 L487.55,351.74 L488.28,352.13 L489.01,352.52 L489.74,352.92 L490.47,353.31 L491.21,353.70 L491.95,354.09 L492.69,354.48 L493.43,354.87 L494.17,355.25 L494.91,355.64 L495.66,356.03 L496.41,356.42 L497.16,356.81 L497.91,357.19 L498.66,357.58 L499.41,357.97 L500.17,358.35 L500.92,358.74 L501.68,359.13 L502.44,359.51 L503.20,359.89 L503.97,360.28 L504.73,360.66 L505.50,361.05 L506.26,361.43 L507.03,361.81 L507.80,362.19 L508.58,362.58 L509.35,362.96 L510.12,363.34 L510.90,363.72 L511.68,364.10 L512.46,364.48 L513.24,364.86 L514.02,365.24 L514.80,365.61 L515.58,365.99 L516.37,366.37 L517.16,366.75 L517.95,367.12 L518.74,367.50 L519.53,367.87 L520.32,368.25 M653.00,124.00 L652.95,124.37 L652.89,124.75 L652.82,125.13 L652.73,125.52 L652.63,125.91 L652.52,126.31 L652.40,126.72 L652.26,127.13 L652.12,127.54 L651.96,127.97 L651.79,128.40 L651.61,128.83 L651.42,129.27 L651.21,129.72 L651.00,130.17 L650.78,130.62 L650.55,131.08 L650.31,131.55 L650.06,132.02 L649.80,132.49 L649.53,132.97 L649.25,133.46 L648.97,133.95 L648.68,134.44 L648.37,134.94 L648.07,135.45 L647.75,135.96 L647.43,136.47 L647.10,136.98 L646.76,137.51 L646.42,138.03 L646.07,138.56 L645.71,139.10 L645.35,139.63 L644.98,140.18 L644.60,140.72 L644.23,141.27 L643.84,141.82 L643.45,142.38 L643.06,142.94 L642.66,143.51 L642.25,144.08 L641.84,144.65 L641.43,145.22 L641.02,145.80 L640.59,146.38 L640.17,146.97 L639.74,147.56 L639.31,148.15 L638.88,148.75 L638.44,149.34 L638.00,149.95 L637.55,150.55 L637.11,151.16 L636.66,151.77 L636.21,152.38 L635.75,153.00 L635.30,153.62 L634.84,154.24 L634.38,154.87 L633.92,155.49 L633.46,156.12 L632.99,156.76 L632.53,157.39 L632.06,158.03 L631.59,158.67 L631.12,159.31 L630.65,159.96 L630.18,160.61 L629.71,161.26 L629.24,161.91 L628.76,162.56 L628.29,163.22 L627.82,163.88 L627.34,164.54 L626.87,165.20 L626.40,165.87 L625.92,166.54 L625.45,167.21 L624.98,167.88 L624.51,168.55 L624.04,169.23 L623.56,169.91 L623.09,170.59 L622.62,171.27 L622.16,171.95 L621.69,172.64 L621.22,173.32 L620.76,174.01 L620.29,174.70 L619.83,175.40 L619.37,176.09 L618.91,176.79 L618.45,177.48 L617.99,178.18 L617.54,178.88 L617.08,179.59 L616.63,180.29 L616.18,180.99 L615.73,181.70 L615.29,182.41 L614.84,183.12 L614.40,183.83 L613.96,184.54 L613.53,185.26 L613.09,185.97 L612.66,186.69 L612.23,187.41 L611.80,188.13 L611.38,188.85 L610.96,189.57 L610.54,190.29 L610.12,191.02 L609.71,191.75 L609.30,192.47 L608.89,193.20 L608.48,193.93 L608.08,194.66 L607.68,195.39 L607.29,196.13 L606.89,196.86 L606.50,197.59 L606.12,198.33 L605.74,199.07 L605.36,199.81 L604.98,200.55 L604.61,201.29 L604.24,202.03 L603.87,202.77 L603.51,203.51 L603.15,204.26 L602.80,205.00 L602.45,205.75 L602.10,206.50 L601.76,207.25 L601.42,208.00 L601.08,208.75 L600.75,209.50 L600.42,210.25 L600.10,211.00 L599.78,211.75 L599.47,212.51 L599.15,213.26 L598.85,214.02 L598.54,214.78 L598.25,215.53 L597.95,216.29 L597.66,217.05 L597.37,217.81 L597.09,218.57 L596.82,219.33 L596.54,220.09 L596.27,220.86 L596.01,221.62 L595.75,222.39 L595.49,223.15 L595.24,223.92 L595.00,224.68 L594.76,225.45 L594.52,226.22 L594.29,226.98 L594.06,227.75 L593.84,228.52 L593.62,229.29 L593.41,230.06 L593.20,230.83 L592.99,231.60 L592.80,232.38 L592.60,233.15 L592.41,233.92 L592.23,234.70 L592.05,235.47 L591.87,236.25 L591.70,237.02 L591.54,237.80 L591.38,238.57 L591.23,239.35 L591.08,240.13 L590.93,240.91 L590.79,241.69 L590.66,242.46 L590.53,243.24 L590.40,244.02 L590.29,244.80 L590.17,245.59 L590.06,246.37 L589.96,247.15 L589.86,247.93 L589.77,248.71 L589.68,249.50 L589.60,250.28 L589.52,251.06 L589.45,251.85 L589.38,252.63 L589.32,253.42 L589.27,254.20 L589.21,254.99 L589.17,255.77 L589.13,256.56 L589.09,257.35 L589.07,258.13 L589.04,258.92 L589.02,259.71 L589.01,260.50 L589.00,261.29 L589.00,262.07 L589.00,262.86 L589.01,263.65 L589.03,264.44 L589.05,265.23 L589.07,266.02 L589.10,266.81 L589.14,267.60 L589.18,268.40 L589.23,269.19 L589.28,269.98 L589.34,270.77 L589.40,271.56 L589.47,272.36 L589.55,273.15 L589.63,273.94 L589.71,274.73 L589.80,275.53 L589.90,276.32 L590.00,277.11 L590.11,277.91 L590.23,278.70 L590.34,279.50 L590.47,280.29 L590.60,281.09 L590.74,281.88 L590.88,282.68 L591.03,283.47 L591.18,284.27 L591.34,285.06 L591.50,285.86 L591.67,286.66 L591.85,287.45 L592.03,288.25 L592.22,289.05 L592.41,289.84 L592.61,290.64 L592.81,291.44 L593.02,292.23 L593.23,293.03 L593.45,293.83 L593.68,294.63 L593.91,295.42 L594.15,296.22 L594.39,297.02 L594.64,297.82 L594.90,298.62 L595.16,299.41 L595.42,300.21 L595.69,301.01 L595.97,301.81 L596.25,302.61 L596.54,303.41 L596.83,304.21 L597.13,305.01 L597.44,305.80 L597.75,306.60 L598.06,307.40 L598.39,308.20 L598.71,309.00 L599.05,309.80 L599.38,310.60 L599.73,311.40 L600.08,312.20 L600.43,313.00 L600.79,313.80 L601.16,314.60 L601.53,315.40 L601.91,316.20 L602.29,317.00 L602.68,317.80 L603.07,318.59 L603.47,319.39 L603.88,320.19 L604.29,320.99 L604.70,321.79 L605.12,322.59 L605.55,323.39 L605.98,324.19 L606.42,324.99 L606.86,325.79 L607.31,326.59 L607.77,327.39 L608.23,328.19 L608.69,328.99 L609.16,329.79 L609.64,330.59 L610.12,331.39 L610.60,332.19 L611.10,332.99 L611.59,333.78 L612.10,334.58 L612.60,335.38 L613.12,336.18 L613.63,336.98 L614.16,337.78 L614.69,338.58 L615.22,339.38 L615.76,340.17 L616.31,340.97 L616.86,341.77 L617.41,342.57 L617.97,343.37 L618.54,344.17 L619.11,344.96 L619.68,345.76 L620.26,346.56 L620.85,347.36 L621.44,348.15 L622.04,348.95 L622.64,349.75 L623.25,350.54 L623.86,351.34 L624.47,352.14 L625.10,352.93 L625.72,353.73 L626.35,354.53 L626.99,355.32 L627.63,356.12 L628.28,356.91 L628.93,357.71 L629.59,358.50 L630.25,359.30 L630.92,360.09 L631.59,360.89 L632.26,361.68 L632.94,362.48 L633.63,363.27 L634.32,364.06 L635.02,364.86 L635.72,365.65 L636.42,366.44 L637.13,367.24 L637.84,368.03 L638.56,368.82 L639.29,369.61 L640.01,370.41 L640.75,371.20 L641.49,371.99 L642.23,372.78 L642.97,373.57 L643.73,374.36 L644.48,375.15 L645.24,375.94 L646.01,376.73 L646.78,377.52 L647.55,378.31 L648.33,379.10 L649.11,379.89 L649.90,380.67 L650.69,381.46 L651.48,382.25 L652.28,383.04 L653.09,383.82 L653.90,384.61 L654.71,385.39 L655.53,386.18 L656.35,386.96 L657.17,387.75 L658.00,388.53 L658.83,389.32 L659.67,390.10 L660.51,390.88 L661.36,391.67 L662.21,392.45 L663.06,393.23 L663.92,394.01 L664.78,394.79 L665.65,395.57 L666.52,396.35 L667.39,397.13 L668.27,397.91 L669.15,398.69 L670.04,399.47 L670.92,400.25 L671.82,401.03 L672.71,401.80 L673.61,402.58 L674.52,403.35 L675.42,404.13 L676.33,404.90 L677.25,405.68 L678.17,406.45 L679.09,407.23 L680.01,408.00 L680.94,408.77 L681.87,409.54 L682.81,410.31 L683.75,411.08 L684.69,411.85 L685.64,412.62 L686.58,413.39 L687.54,414.16 L688.49,414.92" fill="none" stroke="#454545" stroke-width="1.3" stroke-dasharray="1.4 2.3"/>
<path d="M365.2,359.4 h6.8 M368.6,356 v6.8" stroke="#ff0000" stroke-width="1.8" fill="none"/>
<text x="365" y="360.9" fill="#ffffff" font-size="11">AAN</text>
<g fill="#fafafa" font-size="13.9"><text class="mono" x="316" y="30.0" xml:space="preserve">IL0002</text><text class="mono" x="316" y="43.1" xml:space="preserve">Beg: 20260207 21:58:08 (sol = 318.77°)</text><text class="mono" x="316" y="56.2" xml:space="preserve">End: 20260208 03:28:55 (sol = 319.01°)</text><text class="mono" x="316" y="69.3" xml:space="preserve">--------------------------------------</text><text class="mono" x="316" y="82.4" xml:space="preserve">...: 9</text><text class="mono" x="316" y="95.5" xml:space="preserve">AAN: 1</text></g>
<g stroke="#5e5e5e" stroke-width="2.08" stroke-dasharray="2.08 3.44" fill="none"><path d="M73.0,842.3 V641.5"/><path d="M216.9,842.3 V641.5"/><path d="M364.0,842.3 V641.5"/><path d="M504.0,842.3 V641.5"/><path d="M650.0,842.3 V641.5"/><path d="M795.9,842.3 V641.5"/><path d="M938.8,842.3 V641.5"/><path d="M1089.9,842.3 V641.5"/><path d="M1237.9,842.3 V641.5"/><path d="M1391.9,842.3 V641.5"/><path d="M1546.9,842.3 V641.5"/><path d="M1686.0,842.3 V641.5"/></g>
<g fill="#595959" stroke="#595959" stroke-width="0.3" font-size="30.7"><text transform="translate(148.50,642.00) rotate(-90) scale(0.8835,1)" text-anchor="end">APR</text><text transform="translate(294.50,643.00) rotate(-90) scale(0.9169,1)" text-anchor="end">MAY</text><text transform="translate(435.50,641.00) rotate(-90) scale(0.8376,1)" text-anchor="end">JUN</text><text transform="translate(575.30,640.50) rotate(-90) scale(0.8351,1)" text-anchor="end">JUL</text><text transform="translate(724.10,642.00) rotate(-90) scale(0.8652,1)" text-anchor="end">AUG</text><text transform="translate(871.70,643.00) rotate(-90) scale(0.8425,1)" text-anchor="end">SEP</text><text transform="translate(1016.10,643.00) rotate(-90) scale(0.8793,1)" text-anchor="end">OCT</text><text transform="translate(1168.90,644.50) rotate(-90) scale(0.9065,1)" text-anchor="end">NOV</text><text transform="translate(1317.80,644.80) rotate(-90) scale(0.8850,1)" text-anchor="end">DEC</text><text transform="translate(1468.90,640.50) rotate(-90) scale(0.8459,1)" text-anchor="end">JAN</text><text transform="translate(1627.50,646.00) rotate(-90) scale(0.8462,1)" text-anchor="end">FEB</text><text transform="translate(1764.50,644.00) rotate(-90) scale(0.9064,1)" text-anchor="end">MAR</text></g>
<g><rect x="106.0" y="832.2" width="24.0" height="4" fill="#bddf26"/><rect x="165.0" y="832.2" width="180.0" height="4" fill="#bddf26"/><rect x="366.0" y="832.2" width="259.0" height="4" fill="#bddf26"/><rect x="635.9" y="832.2" width="151.1" height="4" fill="#bddf26"/><rect x="807.0" y="832.2" width="92.9" height="4" fill="#bddf26"/><rect x="919.9" y="832.2" width="53.0" height="4" fill="#bddf26"/><rect x="984.0" y="832.2" width="81.8" height="4" fill="#bddf26"/><rect x="1082.0" y="832.2" width="121.8" height="4" fill="#bddf26"/><rect x="1244.0" y="832.2" width="81.9" height="4" fill="#bddf26"/><rect x="1337.0" y="832.2" width="18.9" height="4" fill="#bddf26"/><rect x="1381.0" y="832.2" width="62.7" height="4" fill="#bddf26"/><rect x="1458.9" y="832.2" width="53.1" height="4" fill="#bddf26"/><rect x="1523.0" y="832.2" width="24.0" height="4" fill="#bddf26"/><rect x="1724.0" y="832.2" width="23.8" height="4" fill="#bddf26"/><rect x="1758.0" y="832.2" width="24.0" height="4" fill="#bddf26"/><rect x="165.0" y="815.8" width="24.0" height="4" fill="#81d34d"/><rect x="224.0" y="815.8" width="63.0" height="4" fill="#81d34d"/><rect x="312.0" y="815.8" width="29.0" height="4" fill="#81d34d"/><rect x="366.0" y="815.8" width="127.0" height="4" fill="#81d34d"/><rect x="508.0" y="815.8" width="146.0" height="4" fill="#81d34d"/><rect x="703.9" y="815.8" width="34.1" height="4" fill="#81d34d"/><rect x="773.0" y="815.8" width="72.8" height="4" fill="#81d34d"/><rect x="871.0" y="815.8" width="117.0" height="4" fill="#81d34d"/><rect x="1003.0" y="815.8" width="14.0" height="4" fill="#81d34d"/><rect x="1062.0" y="815.8" width="150.8" height="4" fill="#81d34d"/><rect x="1244.0" y="815.8" width="23.0" height="4" fill="#81d34d"/><rect x="1293.0" y="815.8" width="22.8" height="4" fill="#81d34d"/><rect x="1342.0" y="815.8" width="23.0" height="4" fill="#81d34d"/><rect x="1386.0" y="815.8" width="42.7" height="4" fill="#81d34d"/><rect x="1459.0" y="815.8" width="23.8" height="4" fill="#81d34d"/><rect x="1548.0" y="815.8" width="22.8" height="4" fill="#81d34d"/><rect x="165.0" y="799.4" width="24.0" height="4" fill="#4ec36b"/><rect x="258.0" y="799.4" width="230.0" height="4" fill="#4ec36b"/><rect x="508.0" y="799.4" width="107.0" height="4" fill="#4ec36b"/><rect x="626.0" y="799.4" width="91.8" height="4" fill="#4ec36b"/><rect x="729.0" y="799.4" width="96.9" height="4" fill="#4ec36b"/><rect x="949.0" y="799.4" width="201.0" height="4" fill="#4ec36b"/><rect x="1160.0" y="799.4" width="88.0" height="4" fill="#4ec36b"/><rect x="1257.8" y="799.4" width="185.9" height="4" fill="#4ec36b"/><rect x="1459.0" y="799.4" width="23.8" height="4" fill="#4ec36b"/><rect x="1553.0" y="799.4" width="22.9" height="4" fill="#4ec36b"/><rect x="194.0" y="783.0" width="24.0" height="4" fill="#2ab07f"/><rect x="322.0" y="783.0" width="184.7" height="4" fill="#2ab07f"/><rect x="518.0" y="783.0" width="24.0" height="4" fill="#2ab07f"/><rect x="557.0" y="783.0" width="126.9" height="4" fill="#2ab07f"/><rect x="807.0" y="783.0" width="23.8" height="4" fill="#2ab07f"/><rect x="954.0" y="783.0" width="19.0" height="4" fill="#2ab07f"/><rect x="989.0" y="783.0" width="135.8" height="4" fill="#2ab07f"/><rect x="1155.0" y="783.0" width="63.0" height="4" fill="#2ab07f"/><rect x="1244.0" y="783.0" width="23.0" height="4" fill="#2ab07f"/><rect x="1316.8" y="783.0" width="23.9" height="4" fill="#2ab07f"/><rect x="1396.0" y="783.0" width="22.8" height="4" fill="#2ab07f"/><rect x="1463.9" y="783.0" width="186.1" height="4" fill="#2ab07f"/><rect x="341.0" y="766.6" width="29.0" height="4" fill="#1e9b8a"/><rect x="410.0" y="766.6" width="38.0" height="4" fill="#1e9b8a"/><rect x="469.0" y="766.6" width="24.0" height="4" fill="#1e9b8a"/><rect x="528.0" y="766.6" width="17.8" height="4" fill="#1e9b8a"/><rect x="562.0" y="766.6" width="29.0" height="4" fill="#1e9b8a"/><rect x="616.0" y="766.6" width="32.9" height="4" fill="#1e9b8a"/><rect x="959.0" y="766.6" width="29.0" height="4" fill="#1e9b8a"/><rect x="1062.0" y="766.6" width="23.7" height="4" fill="#1e9b8a"/><rect x="1101.0" y="766.6" width="23.8" height="4" fill="#1e9b8a"/><rect x="1160.0" y="766.6" width="33.7" height="4" fill="#1e9b8a"/><rect x="1249.0" y="766.6" width="23.0" height="4" fill="#1e9b8a"/><rect x="1424.8" y="766.6" width="87.2" height="4" fill="#1e9b8a"/><rect x="420.0" y="750.2" width="23.8" height="4" fill="#25858e"/><rect x="533.0" y="750.2" width="23.0" height="4" fill="#25858e"/><rect x="567.0" y="750.2" width="24.0" height="4" fill="#25858e"/><rect x="621.0" y="750.2" width="122.0" height="4" fill="#25858e"/><rect x="969.0" y="750.2" width="165.9" height="4" fill="#25858e"/><rect x="1185.0" y="750.2" width="160.8" height="4" fill="#25858e"/><rect x="1469.0" y="750.2" width="23.9" height="4" fill="#25858e"/><rect x="430.0" y="733.8" width="23.0" height="4" fill="#2d708e"/><rect x="577.0" y="733.8" width="155.8" height="4" fill="#2d708e"/><rect x="994.0" y="733.8" width="110.9" height="4" fill="#2d708e"/><rect x="1116.0" y="733.8" width="107.0" height="4" fill="#2d708e"/><rect x="1263.0" y="733.8" width="29.0" height="4" fill="#2d708e"/><rect x="1489.0" y="733.8" width="23.0" height="4" fill="#2d708e"/><rect x="591.8" y="717.4" width="23.2" height="4" fill="#375a8c"/><rect x="655.0" y="717.4" width="117.0" height="4" fill="#375a8c"/><rect x="1072.0" y="717.4" width="171.0" height="4" fill="#375a8c"/><rect x="1263.0" y="717.4" width="24.0" height="4" fill="#375a8c"/><rect x="595.9" y="701.0" width="136.9" height="4" fill="#424086"/><rect x="1092.0" y="701.0" width="27.9" height="4" fill="#424086"/><rect x="1200.0" y="701.0" width="23.0" height="4" fill="#424086"/><rect x="1273.0" y="701.0" width="52.9" height="4" fill="#424086"/><rect x="1111.0" y="684.6" width="23.9" height="4" fill="#482475"/></g>
<g fill="#e8e8e8" font-size="10.4"><text x="118.0" y="832.0" text-anchor="middle">KSE</text><text x="255.0" y="832.0" text-anchor="middle">ETA</text><text x="495.5" y="832.0" text-anchor="middle">NZC</text><text x="711.5" y="832.0" text-anchor="middle">NDA</text><text x="853.5" y="832.0" text-anchor="middle">SPE</text><text x="946.4" y="832.0" text-anchor="middle">ARD</text><text x="1024.9" y="832.0" text-anchor="middle">EGE</text><text x="1142.9" y="832.0" text-anchor="middle">NTA</text><text x="1285.0" y="832.0" text-anchor="middle">MON</text><text x="1343.9" y="832.0" text-anchor="middle">URS</text><text x="1412.3" y="832.0" text-anchor="middle">AHY</text><text x="1485.5" y="832.0" text-anchor="middle">GUM</text><text x="1535.0" y="832.0" text-anchor="middle">QHY</text><text x="1735.9" y="832.0" text-anchor="middle">XHE</text><text x="1770.0" y="832.0" text-anchor="middle">EVI</text><text x="177.0" y="815.6" text-anchor="middle">AVB</text><text x="255.5" y="815.6" text-anchor="middle">ELY</text><text x="323.8" y="815.6" text-anchor="middle">CAM</text><text x="431.6" y="815.6" text-anchor="middle">SSG</text><text x="578.4" y="815.6" text-anchor="middle">PCA</text><text x="721.0" y="815.6" text-anchor="middle">AUD</text><text x="809.4" y="815.6" text-anchor="middle">AUR</text><text x="931.6" y="815.6" text-anchor="middle">DSX</text><text x="1011.0" y="815.6" text-anchor="middle">OCU</text><text x="1137.4" y="815.6" text-anchor="middle">OER</text><text x="1255.5" y="815.6" text-anchor="middle">DKD</text><text x="1304.4" y="815.6" text-anchor="middle">DSV</text><text x="1353.5" y="815.6" text-anchor="middle">ALY</text><text x="1407.3" y="815.6" text-anchor="middle">JLE</text><text x="1470.9" y="815.6" text-anchor="middle">SCC</text><text x="1559.4" y="815.6" text-anchor="middle">FEV</text><text x="177.0" y="799.2" text-anchor="middle">LYR</text><text x="373.0" y="799.2" text-anchor="middle">JMC</text><text x="558.6" y="799.2" text-anchor="middle">JPE</text><text x="671.9" y="799.2" text-anchor="middle">PAU</text><text x="774.2" y="799.2" text-anchor="middle">NIA</text><text x="1049.5" y="799.2" text-anchor="middle">STA</text><text x="1206.4" y="799.2" text-anchor="middle">NOO</text><text x="1353.2" y="799.2" text-anchor="middle">COM</text><text x="1470.9" y="799.2" text-anchor="middle">NCC</text><text x="1564.5" y="799.2" text-anchor="middle">FED</text><text x="206.0" y="782.8" text-anchor="middle">HVI</text><text x="412.0" y="782.8" text-anchor="middle">ARI</text><text x="530.0" y="782.8" text-anchor="middle">SZC</text><text x="618.8" y="782.8" text-anchor="middle">CAP</text><text x="818.9" y="782.8" text-anchor="middle">NUE</text><text x="961.2" y="782.8" text-anchor="middle">OCT</text><text x="1059.4" y="782.8" text-anchor="middle">ORI</text><text x="1186.5" y="782.8" text-anchor="middle">AMO</text><text x="1255.5" y="782.8" text-anchor="middle">DPC</text><text x="1328.8" y="782.8" text-anchor="middle">XVI</text><text x="1407.4" y="782.8" text-anchor="middle">QUA</text><text x="1559.2" y="782.8" text-anchor="middle">AAN</text><text x="352.7" y="766.4" text-anchor="middle">TAH</text><text x="431.1" y="766.4" text-anchor="middle">JEA</text><text x="481.0" y="766.4" text-anchor="middle">JIP</text><text x="539.0" y="766.4" text-anchor="middle">PPS</text><text x="578.6" y="766.4" text-anchor="middle">ZCS</text><text x="632.5" y="766.4" text-anchor="middle">GDR</text><text x="971.4" y="766.4" text-anchor="middle">DRA</text><text x="1073.8" y="766.4" text-anchor="middle">LUM</text><text x="1112.9" y="766.4" text-anchor="middle">RPU</text><text x="1176.8" y="766.4" text-anchor="middle">THA</text><text x="1260.5" y="766.4" text-anchor="middle">PSU</text><text x="1470.8" y="766.4" text-anchor="middle">XCB</text><text x="431.9" y="750.0" text-anchor="middle">JRC</text><text x="544.5" y="750.0" text-anchor="middle">CAN</text><text x="578.0" y="750.0" text-anchor="middle">FAN</text><text x="681.0" y="750.0" text-anchor="middle">PER</text><text x="1050.1" y="750.0" text-anchor="middle">CTA</text><text x="1265.4" y="750.0" text-anchor="middle">HYD</text><text x="1481.0" y="750.0" text-anchor="middle">XUM</text><text x="441.5" y="733.6" text-anchor="middle">COR</text><text x="657.8" y="733.6" text-anchor="middle">SDA</text><text x="1049.5" y="733.6" text-anchor="middle">LMI</text><text x="1166.6" y="733.6" text-anchor="middle">LEO</text><text x="1274.7" y="733.6" text-anchor="middle">EHY</text><text x="1500.5" y="733.6" text-anchor="middle">ECV</text><text x="603.4" y="717.2" text-anchor="middle">JXA</text><text x="716.0" y="717.2" text-anchor="middle">KCG</text><text x="1157.5" y="717.2" text-anchor="middle">AND</text><text x="1275.0" y="717.2" text-anchor="middle">DAD</text><text x="666.4" y="700.8" text-anchor="middle">ERI</text><text x="1108.7" y="700.8" text-anchor="middle">SLD</text><text x="1211.5" y="700.8" text-anchor="middle">ORS</text><text x="1299.5" y="700.8" text-anchor="middle">GEM</text><text x="1123.0" y="684.4" text-anchor="middle">KUM</text></g>
<path d="M113.9,834.2 h8 M117.9,830.3 v7.8 M240.8,834.2 h8 M244.8,830.3 v7.8 M510.6,834.2 h8 M514.6,830.3 v7.8 M706.8,834.2 h8 M710.8,830.3 v7.8 M833.8,834.2 h8 M837.8,830.3 v7.8 M961.9,834.2 h8 M965.9,830.3 v7.8 M986.6,834.2 h8 M990.6,830.3 v7.8 M1116.7,834.2 h8 M1120.7,830.3 v7.8 M1295.0,834.2 h8 M1299.0,830.3 v7.8 M1341.8,834.2 h8 M1345.8,830.3 v7.8 M1413.0,834.2 h8 M1417.0,830.3 v7.8 M1481.9,834.2 h8 M1485.9,830.3 v7.8 M1530.8,834.2 h8 M1534.8,830.3 v7.8 M1731.8,834.2 h8 M1735.8,830.3 v7.8 M1766.0,834.2 h8 M1770.0,830.3 v7.8 M172.8,817.8 h8 M176.8,813.9 v7.8 M255.6,817.8 h8 M259.6,813.9 v7.8 M323.7,817.8 h8 M327.7,813.9 v7.8 M437.8,817.8 h8 M441.8,813.9 v7.8 M598.9,817.8 h8 M602.9,813.9 v7.8 M717.0,817.8 h8 M721.0,813.9 v7.8 M793.5,817.8 h8 M797.5,813.9 v7.8 M939.5,817.8 h8 M943.5,813.9 v7.8 M1006.0,817.8 h8 M1010.0,813.9 v7.8 M1152.7,817.8 h8 M1156.7,813.9 v7.8 M1251.0,817.8 h8 M1255.0,813.9 v7.8 M1299.9,817.8 h8 M1303.9,813.9 v7.8 M1349.8,817.8 h8 M1353.8,813.9 v7.8 M1402.7,817.8 h8 M1406.7,813.9 v7.8 M1466.9,817.8 h8 M1470.9,813.9 v7.8 M1555.0,817.8 h8 M1559.0,813.9 v7.8 M174.6,801.4 h8 M178.6,797.5 v7.8 M379.0,801.4 h8 M383.0,797.5 v7.8 M544.6,801.4 h8 M548.6,797.5 v7.8 M682.6,801.4 h8 M686.6,797.5 v7.8 M741.7,801.4 h8 M745.7,797.5 v7.8 M1074.8,801.4 h8 M1078.8,797.5 v7.8 M1216.6,801.4 h8 M1220.6,797.5 v7.8 M1305.0,801.4 h8 M1309.0,797.5 v7.8 M1466.9,801.4 h8 M1470.9,797.5 v7.8 M1559.6,801.4 h8 M1563.6,797.5 v7.8 M202.0,785.0 h8 M206.0,781.1 v7.8 M400.5,785.0 h8 M404.5,781.1 v7.8 M525.6,785.0 h8 M529.6,781.1 v7.8 M638.6,785.0 h8 M642.6,781.1 v7.8 M814.9,785.0 h8 M818.9,781.1 v7.8 M959.9,785.0 h8 M963.9,781.1 v7.8 M1040.8,785.0 h8 M1044.8,781.1 v7.8 M1187.6,785.0 h8 M1191.6,781.1 v7.8 M1251.0,785.0 h8 M1255.0,781.1 v7.8 M1324.8,785.0 h8 M1328.8,781.1 v7.8 M1402.7,785.0 h8 M1406.7,781.1 v7.8 M1545.8,785.0 h8 M1549.8,781.1 v7.8 M356.0,768.6 h8 M360.0,764.7 v7.8 M426.6,768.6 h8 M430.6,764.7 v7.8 M476.6,768.6 h8 M480.6,764.7 v7.8 M535.5,768.6 h8 M539.5,764.7 v7.8 M570.4,768.6 h8 M574.4,764.7 v7.8 M630.7,768.6 h8 M634.7,764.7 v7.8 M973.6,768.6 h8 M977.6,764.7 v7.8 M1069.8,768.6 h8 M1073.8,764.7 v7.8 M1108.7,768.6 h8 M1112.7,764.7 v7.8 M1177.8,768.6 h8 M1181.8,764.7 v7.8 M1255.7,768.6 h8 M1259.7,764.7 v7.8 M1466.9,768.6 h8 M1470.9,764.7 v7.8 M427.5,752.2 h8 M431.5,748.3 v7.8 M539.6,752.2 h8 M543.6,748.3 v7.8 M574.8,752.2 h8 M578.8,748.3 v7.8 M703.7,752.2 h8 M707.7,748.3 v7.8 M1094.9,752.2 h8 M1098.9,748.3 v7.8 M1270.8,752.2 h8 M1274.8,748.3 v7.8 M1476.9,752.2 h8 M1480.9,748.3 v7.8 M437.6,735.8 h8 M441.6,731.9 v7.8 M630.7,735.8 h8 M634.7,731.9 v7.8 M1038.6,735.8 h8 M1042.6,731.9 v7.8 M1167.7,735.8 h8 M1171.7,731.9 v7.8 M1274.6,735.8 h8 M1278.6,731.9 v7.8 M1496.9,735.8 h8 M1500.9,731.9 v7.8 M598.9,719.4 h8 M602.9,715.5 v7.8 M726.6,719.4 h8 M730.6,715.5 v7.8 M1187.6,719.4 h8 M1191.6,715.5 v7.8 M1270.7,719.4 h8 M1274.7,715.5 v7.8 M687.6,703.0 h8 M691.6,699.1 v7.8 M1101.9,703.0 h8 M1105.9,699.1 v7.8 M1206.8,703.0 h8 M1210.8,699.1 v7.8 M1299.9,703.0 h8 M1303.9,699.1 v7.8 M1118.8,686.6 h8 M1122.8,682.7 v7.8" stroke="#fff" stroke-width="2.05" fill="none"/>
<path d="M1584.0,842.3 V641.5" stroke="#ff0000" stroke-width="2.2" stroke-dasharray="5.14 2.22" fill="none"/>
<rect x="20.5" y="641.5" width="1765.0" height="200.8" fill="none" stroke="#fff" stroke-width="1.1"/>
<path d="M20.5,842.3 v4.9 M265.6,842.3 v4.9 M510.8,842.3 v4.9 M755.9,842.3 v4.9 M1001.1,842.3 v4.9 M1246.2,842.3 v4.9 M1491.3,842.3 v4.9 M1736.5,842.3 v4.9" stroke="#fff" stroke-width="1.1" fill="none"/>
<g fill="#fff" font-size="13.9"><text x="20.5" y="862" text-anchor="middle">0</text><text x="265.6" y="862" text-anchor="middle">50</text><text x="510.8" y="862" text-anchor="middle">100</text><text x="755.9" y="862" text-anchor="middle">150</text><text x="1001.1" y="862" text-anchor="middle">200</text><text x="1246.2" y="862" text-anchor="middle">250</text><text x="1491.3" y="862" text-anchor="middle">300</text><text x="1736.5" y="862" text-anchor="middle">350</text><text x="829" y="881.5" textLength="146.5" lengthAdjust="spacingAndGlyphs">Solar longitude (deg)</text></g>
</svg></body></html>
